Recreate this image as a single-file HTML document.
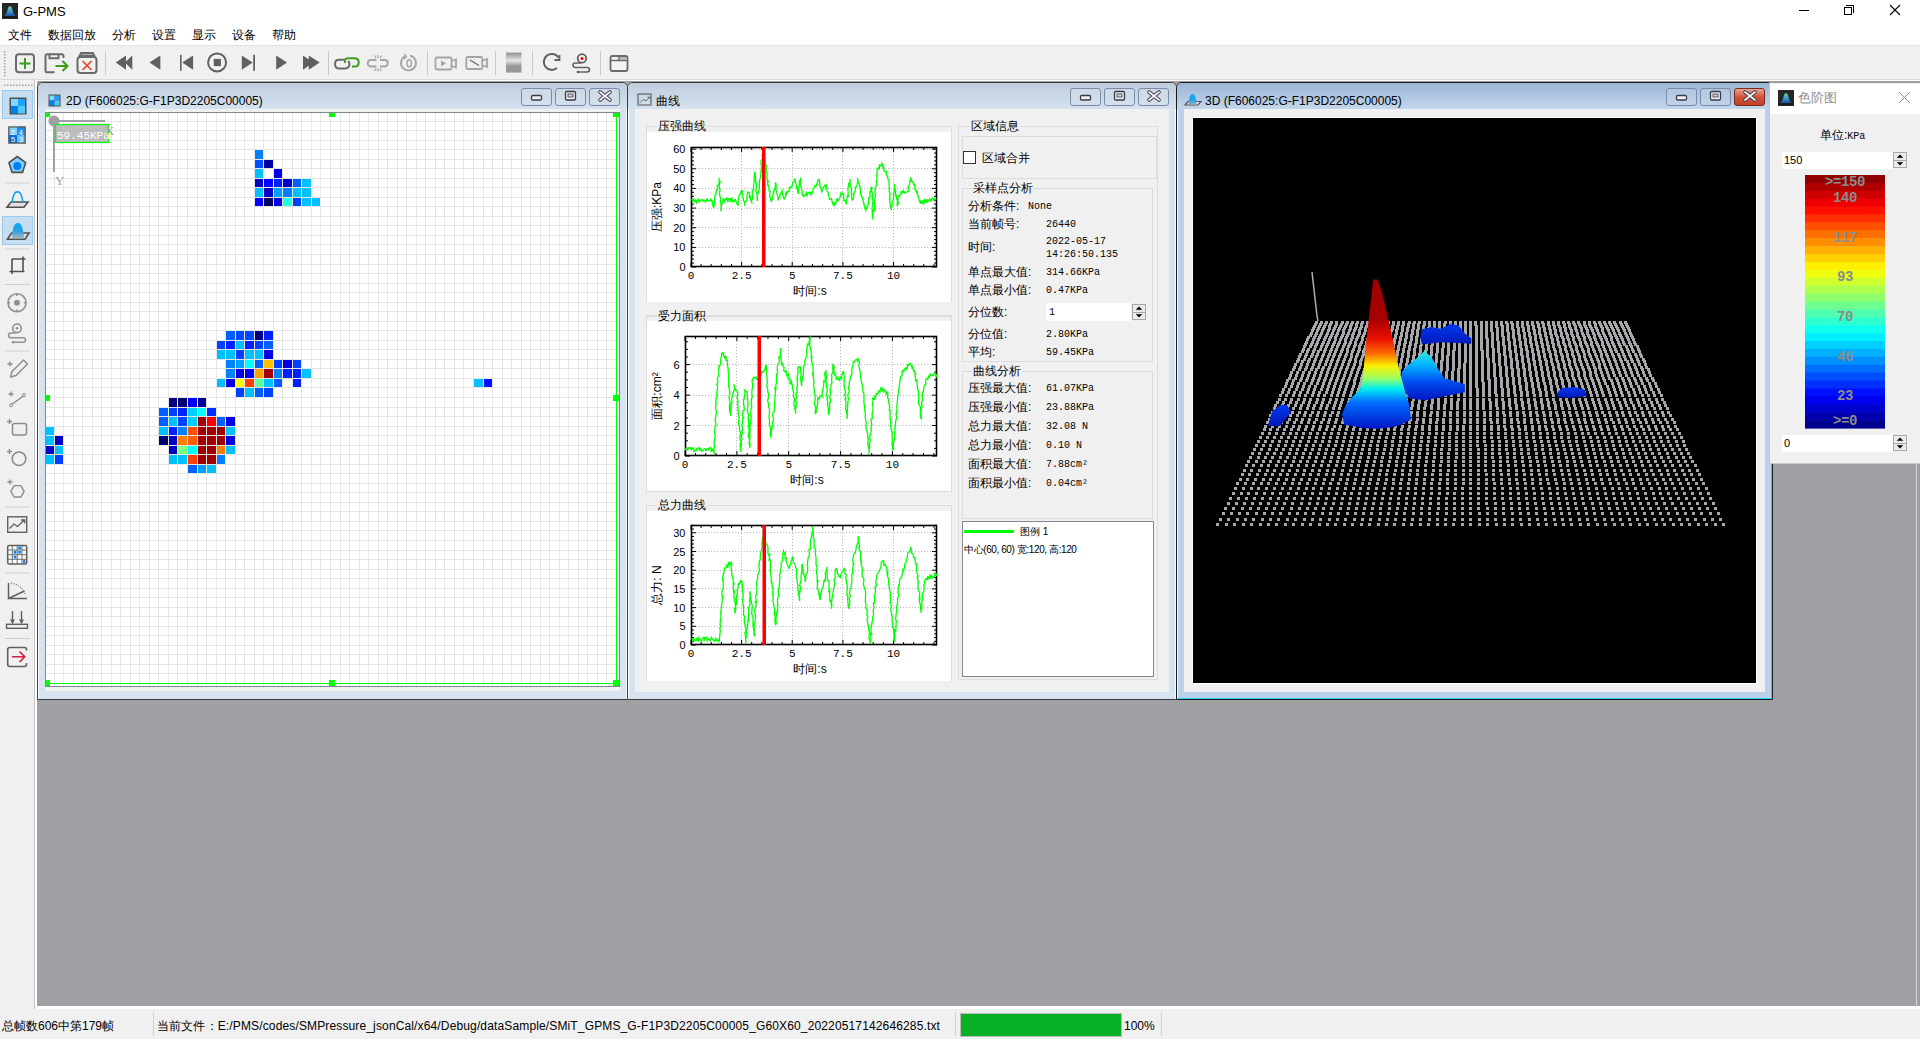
<!DOCTYPE html><html><head><meta charset="utf-8"><style>
*{margin:0;padding:0;box-sizing:border-box}
html,body{width:1920px;height:1039px;overflow:hidden;background:#f0f0f0;font-family:"Liberation Sans",sans-serif;font-size:12px;color:#000}
.a{position:absolute}
.t{position:absolute;white-space:nowrap;line-height:1}
.m{font-family:"Liberation Mono",monospace;font-size:10px}
.win{position:absolute;border:1px solid #3c3c3c;background:#d6e3f0;box-shadow:inset 1px 1px 0 rgba(255,255,255,.85),inset -1px 0 0 rgba(255,255,255,.85)}
.tb{position:absolute;left:0;right:0;top:0;height:26px;background:linear-gradient(#bfcddd,#d5e2ef)}
.win.act{background:#b9d1ea;border-color:#1a1a1a;box-shadow:inset 1px 1px 0 rgba(255,255,255,.85),inset -1px -1px 0 #28d4f0}
.win.act .tb{background:linear-gradient(#9bb5d5,#c3d7ec)}
.btn{position:absolute;top:5px;width:31px;height:18px;border:1px solid #7b8aa8;border-radius:3px;background:linear-gradient(rgba(255,255,255,.15),rgba(255,255,255,.05))}
.sep{position:absolute;background:#d0d0d0}
</style></head><body>
<div class="a" style="left:0;top:0;width:1920px;height:45px;background:#fff"></div>
<div class="a" style="left:2px;top:3px;width:16px;height:16px;background:#202020"></div>
<svg class="a" style="left:2px;top:3px" width="16" height="16"><defs><linearGradient id="ai" x1="0" y1="0" x2="0" y2="1"><stop offset="0" stop-color="#70d070"/><stop offset="0.45" stop-color="#40a8d8"/><stop offset="1" stop-color="#2050a0"/></linearGradient></defs><rect width="16" height="16" fill="#262626"/><path d="M8 3Q10 3 11 9Q12 12 14 13H2Q4 12 5 9Q6 3 8 3Z" fill="url(#ai)"/><rect x="1" y="13" width="14" height="2" fill="#1a1a1a"/></svg>
<div class="t" style="left:23px;top:5px;font-size:13px">G-PMS</div>
<div class="a" style="left:1799px;top:10px;width:10px;height:1px;background:#000"></div>
<div class="a" style="left:1844px;top:7px;width:8px;height:8px;border:1px solid #000"></div>
<div class="a" style="left:1846px;top:5px;width:8px;height:8px;border-top:1px solid #000;border-right:1px solid #000"></div>
<svg class="a" style="left:1889px;top:4px" width="12" height="12"><path d="M1 1L11 11M11 1L1 11" stroke="#000" stroke-width="1.1"/></svg>
<div class="t" style="left:8px;top:29px;font-size:12px">文件</div>
<div class="t" style="left:48px;top:29px;font-size:12px">数据回放</div>
<div class="t" style="left:112px;top:29px;font-size:12px">分析</div>
<div class="t" style="left:152px;top:29px;font-size:12px">设置</div>
<div class="t" style="left:192px;top:29px;font-size:12px">显示</div>
<div class="t" style="left:232px;top:29px;font-size:12px">设备</div>
<div class="t" style="left:272px;top:29px;font-size:12px">帮助</div>
<div class="a" style="left:0;top:45px;width:1920px;height:1px;background:#e3e3e3"></div>
<div class="a" style="left:0;top:46px;width:1920px;height:34px;background:#f0f0f0"></div>
<div class="a" style="left:0;top:79px;width:1920px;height:1px;background:#dadada"></div>
<div class="a" style="left:35px;top:80px;width:1885px;height:929px;background:#fff"></div>
<div class="a" style="left:37px;top:81px;width:1883px;height:925px;background:#a0a0a4"></div>
<div class="a" style="left:0;top:80px;width:35px;height:930px;background:#f0f0f0;border-right:1px solid #c4c4c4;border-bottom:1px solid #c8c8c8"></div>
<div class="a" style="left:0;top:1009px;width:1920px;height:30px;background:#f0f0f0"></div>
<div class="t" style="left:2px;top:1020px;font-size:12px">总帧数606中第179帧</div>
<div class="a" style="left:153px;top:1012px;width:1px;height:24px;background:#d0d0d0"></div>
<div class="t" style="left:157px;top:1020px;font-size:12px;letter-spacing:0.14px">当前文件：E:/PMS/codes/SMPressure_jsonCal/x64/Debug/dataSample/SMiT_GPMS_G-F1P3D2205C00005_G60X60_20220517142646285.txt</div>
<div class="a" style="left:955px;top:1012px;width:1px;height:24px;background:#d0d0d0"></div>
<div class="a" style="left:960px;top:1013px;width:162px;height:24px;background:#06b025;border:1px solid #bcbcbc"></div>
<div class="t" style="left:1124px;top:1020px;font-size:12px">100%</div>
<div class="a" style="left:1161px;top:1012px;width:1px;height:24px;background:#d0d0d0"></div>
<div class="win" style="left:37px;top:82px;width:591px;height:618px;border-radius:6px 6px 0 0">
<div class="tb" style="border-radius:5px 5px 0 0"></div>
<div class="t" style="left:28px;top:12px;font-size:12px">2D (F606025:G-F1P3D2205C00005)</div>
<svg class="a" style="left:10px;top:11px" width="14" height="14"><rect x="0.5" y="0.5" width="12" height="12" fill="#505050"/><rect x="1.5" y="1.5" width="5" height="5" fill="#80d8ff"/><rect x="6.5" y="1.5" width="5" height="5" fill="#20a0ff"/><rect x="1.5" y="6.5" width="5" height="5" fill="#0080f0"/><rect x="6.5" y="6.5" width="5" height="5" fill="#50c8ff"/></svg>
<div class="btn" style="left:483px;"></div>
<div class="btn" style="left:517px;"></div>
<div class="btn" style="left:551px;"></div>
<svg class="a" style="left:483px;top:5px" width="104" height="18"><rect x="10.5" y="7.5" width="10" height="4.5" rx="1.2" fill="#f0f0f0" stroke="#3a3a48" stroke-width="1.3"/><rect x="44.5" y="3.5" width="10" height="8.5" rx="1.2" fill="#f0f0f0" stroke="#3a3a48" stroke-width="1.3"/><rect x="47" y="6" width="5" height="3" fill="#c8d4e0" stroke="#3a3a48" stroke-width="0.8"/><path d="M79 4L89 12M89 4L79 12" stroke="#3a3a48" stroke-width="3.6" stroke-linecap="round"/><path d="M79 4L89 12M89 4L79 12" stroke="#f4f4f4" stroke-width="1.8" stroke-linecap="round"/></svg>
</div>
<div class="win" style="left:627px;top:82px;width:550px;height:618px;border-radius:6px 6px 0 0">
<div class="tb" style="border-radius:5px 5px 0 0"></div>
<div class="t" style="left:28px;top:12px;font-size:12px">曲线</div>
<svg class="a" style="left:9px;top:10px" width="16" height="14"><rect x="1" y="1" width="13" height="11" fill="none" stroke="#6a6a6a" stroke-width="1.3"/><path d="M2.5 10L6 6.5L9 8L12.5 4M10.5 4H12.8V6" fill="none" stroke="#6a6a6a" stroke-width="1"/><rect x="1" y="11" width="13" height="1.5" fill="#9a9a9a"/></svg>
<div class="btn" style="left:442px;"></div>
<div class="btn" style="left:476px;"></div>
<div class="btn" style="left:510px;"></div>
<svg class="a" style="left:442px;top:5px" width="104" height="18"><rect x="10.5" y="7.5" width="10" height="4.5" rx="1.2" fill="#f0f0f0" stroke="#3a3a48" stroke-width="1.3"/><rect x="44.5" y="3.5" width="10" height="8.5" rx="1.2" fill="#f0f0f0" stroke="#3a3a48" stroke-width="1.3"/><rect x="47" y="6" width="5" height="3" fill="#c8d4e0" stroke="#3a3a48" stroke-width="0.8"/><path d="M79 4L89 12M89 4L79 12" stroke="#3a3a48" stroke-width="3.6" stroke-linecap="round"/><path d="M79 4L89 12M89 4L79 12" stroke="#f4f4f4" stroke-width="1.8" stroke-linecap="round"/></svg>
</div>
<div class="win act" style="left:1176px;top:82px;width:597px;height:618px;border-radius:6px 6px 0 0">
<div class="tb" style="border-radius:5px 5px 0 0"></div>
<div class="t" style="left:28px;top:12px;font-size:12px">3D (F606025:G-F1P3D2205C00005)</div>
<svg class="a" style="left:7px;top:9px" width="18" height="16"><defs><linearGradient id="i3" x1="0" y1="0" x2="0" y2="1"><stop offset="0" stop-color="#00a8f0"/><stop offset="0.6" stop-color="#20a8e8"/><stop offset="1" stop-color="#80b0c8"/></linearGradient></defs><path d="M1 13L4 9.5H17L14 13Z" fill="#e8e8e8" stroke="#505050" stroke-width="1.2"/><path d="M4.5 12Q5 2 8.5 2Q12 2 12.5 12Z" fill="url(#i3)"/></svg>
<div class="btn" style="left:489px;"></div>
<div class="btn" style="left:523px;"></div>
<div class="btn" style="left:557px;background:linear-gradient(#e9a692,#d0543a 50%,#c24026);border-color:#7a2a22"></div>
<svg class="a" style="left:489px;top:5px" width="104" height="18"><rect x="10.5" y="7.5" width="10" height="4.5" rx="1.2" fill="#f0f0f0" stroke="#3a3a48" stroke-width="1.3"/><rect x="44.5" y="3.5" width="10" height="8.5" rx="1.2" fill="#f0f0f0" stroke="#3a3a48" stroke-width="1.3"/><rect x="47" y="6" width="5" height="3" fill="#c8d4e0" stroke="#3a3a48" stroke-width="0.8"/><path d="M79 4L89 12M89 4L79 12" stroke="#3a3a48" stroke-width="3.6" stroke-linecap="round"/><path d="M79 4L89 12M89 4L79 12" stroke="#f4f4f4" stroke-width="1.8" stroke-linecap="round"/></svg>
</div>
<div class="a" style="left:45px;top:109px;width:575px;height:582px;background:#f0f0f0"></div>
<div class="a" style="left:45px;top:112px;width:575px;height:575px;background:#fff;border:1px solid #828790"></div>
<svg class="a" style="left:0;top:0" width="1920" height="1039" shape-rendering="crispEdges"><defs><clipPath id="pc"><rect x="46" y="113" width="573" height="573"/></clipPath></defs><g clip-path="url(#pc)"><path d="M44.5 113V686M46 111.5H619M54.5 113V686M46 121.5H619M63.5 113V686M46 130.5H619M73.5 113V686M46 140.5H619M82.5 113V686M46 149.5H619M92.5 113V686M46 159.5H619M101.5 113V686M46 168.5H619M111.5 113V686M46 178.5H619M120.5 113V686M46 187.5H619M130.5 113V686M46 197.5H619M139.5 113V686M46 206.5H619M149.5 113V686M46 216.5H619M158.5 113V686M46 225.5H619M168.5 113V686M46 235.5H619M177.5 113V686M46 244.5H619M187.5 113V686M46 254.5H619M197.5 113V686M46 264.5H619M206.5 113V686M46 273.5H619M216.5 113V686M46 283.5H619M225.5 113V686M46 292.5H619M235.5 113V686M46 302.5H619M244.5 113V686M46 311.5H619M254.5 113V686M46 321.5H619M263.5 113V686M46 330.5H619M273.5 113V686M46 340.5H619M282.5 113V686M46 349.5H619M292.5 113V686M46 359.5H619M301.5 113V686M46 368.5H619M311.5 113V686M46 378.5H619M320.5 113V686M46 387.5H619M330.5 113V686M46 397.5H619M340.5 113V686M46 407.5H619M349.5 113V686M46 416.5H619M359.5 113V686M46 426.5H619M368.5 113V686M46 435.5H619M378.5 113V686M46 445.5H619M387.5 113V686M46 454.5H619M397.5 113V686M46 464.5H619M406.5 113V686M46 473.5H619M416.5 113V686M46 483.5H619M425.5 113V686M46 492.5H619M435.5 113V686M46 502.5H619M444.5 113V686M46 511.5H619M454.5 113V686M46 521.5H619M463.5 113V686M46 530.5H619M473.5 113V686M46 540.5H619M483.5 113V686M46 550.5H619M492.5 113V686M46 559.5H619M502.5 113V686M46 569.5H619M511.5 113V686M46 578.5H619M521.5 113V686M46 588.5H619M530.5 113V686M46 597.5H619M540.5 113V686M46 607.5H619M549.5 113V686M46 616.5H619M559.5 113V686M46 626.5H619M568.5 113V686M46 635.5H619M578.5 113V686M46 645.5H619M587.5 113V686M46 654.5H619M597.5 113V686M46 664.5H619M606.5 113V686M46 673.5H619M616.5 113V686M46 683.5H619" stroke="#e6e6e6" stroke-width="1"/><rect x="255" y="150" width="8" height="9" fill="#0080ff"/><rect x="255" y="160" width="8" height="8" fill="#0050ff"/><rect x="264" y="160" width="9" height="8" fill="#0000a0"/><rect x="255" y="169" width="8" height="9" fill="#00c0ff"/><rect x="274" y="169" width="8" height="9" fill="#0000e0"/><rect x="255" y="179" width="8" height="8" fill="#0000c0"/><rect x="264" y="179" width="9" height="8" fill="#0000ff"/><rect x="274" y="179" width="8" height="8" fill="#0020ff"/><rect x="283" y="179" width="9" height="8" fill="#0000c8"/><rect x="293" y="179" width="8" height="8" fill="#0060ff"/><rect x="302" y="179" width="9" height="8" fill="#00c0ff"/><rect x="255" y="188" width="8" height="9" fill="#00c0ff"/><rect x="264" y="188" width="9" height="9" fill="#0000c0"/><rect x="274" y="188" width="8" height="9" fill="#00a0ff"/><rect x="283" y="188" width="9" height="9" fill="#0080ff"/><rect x="293" y="188" width="8" height="9" fill="#00c0ff"/><rect x="302" y="188" width="9" height="9" fill="#00c0ff"/><rect x="255" y="198" width="8" height="8" fill="#0000ff"/><rect x="264" y="198" width="9" height="8" fill="#000060"/><rect x="274" y="198" width="8" height="8" fill="#0000e0"/><rect x="283" y="198" width="9" height="8" fill="#20ffe0"/><rect x="293" y="198" width="8" height="8" fill="#0040ff"/><rect x="302" y="198" width="9" height="8" fill="#00c0ff"/><rect x="312" y="198" width="8" height="8" fill="#00c0ff"/><rect x="226" y="331" width="9" height="9" fill="#0060ff"/><rect x="236" y="331" width="8" height="9" fill="#0048ff"/><rect x="245" y="331" width="9" height="9" fill="#0048ff"/><rect x="255" y="331" width="8" height="9" fill="#000080"/><rect x="264" y="331" width="9" height="9" fill="#0020ff"/><rect x="217" y="341" width="8" height="8" fill="#0040ff"/><rect x="226" y="341" width="9" height="8" fill="#0020ff"/><rect x="236" y="341" width="8" height="8" fill="#00c0ff"/><rect x="245" y="341" width="9" height="8" fill="#0020ff"/><rect x="255" y="341" width="8" height="8" fill="#0040ff"/><rect x="264" y="341" width="9" height="8" fill="#0060ff"/><rect x="217" y="350" width="8" height="9" fill="#00c0ff"/><rect x="226" y="350" width="9" height="9" fill="#00c0ff"/><rect x="236" y="350" width="8" height="9" fill="#0040ff"/><rect x="245" y="350" width="9" height="9" fill="#00c0ff"/><rect x="255" y="350" width="8" height="9" fill="#00c0ff"/><rect x="264" y="350" width="9" height="9" fill="#0000e0"/><rect x="226" y="360" width="9" height="8" fill="#0080ff"/><rect x="236" y="360" width="8" height="8" fill="#00a0ff"/><rect x="245" y="360" width="9" height="8" fill="#00ffff"/><rect x="255" y="360" width="8" height="8" fill="#0060ff"/><rect x="264" y="360" width="9" height="8" fill="#ffc000"/><rect x="274" y="360" width="8" height="8" fill="#0040ff"/><rect x="283" y="360" width="9" height="8" fill="#0000e0"/><rect x="293" y="360" width="8" height="8" fill="#0040ff"/><rect x="226" y="369" width="9" height="9" fill="#0080ff"/><rect x="236" y="369" width="8" height="9" fill="#0000e0"/><rect x="245" y="369" width="9" height="9" fill="#0000ff"/><rect x="255" y="369" width="8" height="9" fill="#ffa000"/><rect x="264" y="369" width="9" height="9" fill="#a00000"/><rect x="274" y="369" width="8" height="9" fill="#0080ff"/><rect x="283" y="369" width="9" height="9" fill="#0020ff"/><rect x="293" y="369" width="8" height="9" fill="#0020ff"/><rect x="302" y="369" width="9" height="9" fill="#00c0ff"/><rect x="217" y="379" width="8" height="8" fill="#00c0ff"/><rect x="226" y="379" width="9" height="8" fill="#0000e0"/><rect x="236" y="379" width="8" height="8" fill="#ffff00"/><rect x="245" y="379" width="9" height="8" fill="#ff4000"/><rect x="255" y="379" width="8" height="8" fill="#60ffa0"/><rect x="264" y="379" width="9" height="8" fill="#00c0ff"/><rect x="274" y="379" width="8" height="8" fill="#0060ff"/><rect x="293" y="379" width="8" height="8" fill="#0020ff"/><rect x="474" y="379" width="9" height="8" fill="#00c0ff"/><rect x="484" y="379" width="8" height="8" fill="#0010ff"/><rect x="236" y="388" width="8" height="9" fill="#0040ff"/><rect x="245" y="388" width="9" height="9" fill="#00c0ff"/><rect x="255" y="388" width="8" height="9" fill="#0060ff"/><rect x="264" y="388" width="9" height="9" fill="#0040ff"/><rect x="169" y="398" width="8" height="9" fill="#000080"/><rect x="178" y="398" width="9" height="9" fill="#000070"/><rect x="188" y="398" width="9" height="9" fill="#0000ff"/><rect x="198" y="398" width="8" height="9" fill="#000090"/><rect x="159" y="408" width="9" height="8" fill="#0060ff"/><rect x="169" y="408" width="8" height="8" fill="#0040ff"/><rect x="178" y="408" width="9" height="8" fill="#0020ff"/><rect x="188" y="408" width="9" height="8" fill="#00d0ff"/><rect x="198" y="408" width="8" height="8" fill="#00ffff"/><rect x="207" y="408" width="9" height="8" fill="#0030ff"/><rect x="159" y="417" width="9" height="9" fill="#0060ff"/><rect x="169" y="417" width="8" height="9" fill="#00c0ff"/><rect x="178" y="417" width="9" height="9" fill="#0040ff"/><rect x="188" y="417" width="9" height="9" fill="#00d0ff"/><rect x="198" y="417" width="8" height="9" fill="#a00000"/><rect x="207" y="417" width="9" height="9" fill="#ff0000"/><rect x="217" y="417" width="8" height="9" fill="#0060ff"/><rect x="226" y="417" width="9" height="9" fill="#0000e0"/><rect x="45" y="427" width="9" height="8" fill="#00c0ff"/><rect x="159" y="427" width="9" height="8" fill="#00c0ff"/><rect x="169" y="427" width="8" height="8" fill="#0020ff"/><rect x="178" y="427" width="9" height="8" fill="#0080ff"/><rect x="188" y="427" width="9" height="8" fill="#ff5000"/><rect x="198" y="427" width="8" height="8" fill="#a00000"/><rect x="207" y="427" width="9" height="8" fill="#a00000"/><rect x="217" y="427" width="8" height="8" fill="#a00000"/><rect x="226" y="427" width="9" height="8" fill="#00c0ff"/><rect x="45" y="436" width="9" height="9" fill="#00c0ff"/><rect x="55" y="436" width="8" height="9" fill="#0000c0"/><rect x="159" y="436" width="9" height="9" fill="#000070"/><rect x="169" y="436" width="8" height="9" fill="#0000c0"/><rect x="178" y="436" width="9" height="9" fill="#ff8000"/><rect x="188" y="436" width="9" height="9" fill="#ff6000"/><rect x="198" y="436" width="8" height="9" fill="#a00000"/><rect x="207" y="436" width="9" height="9" fill="#a00000"/><rect x="217" y="436" width="8" height="9" fill="#a00000"/><rect x="226" y="436" width="9" height="9" fill="#0000e0"/><rect x="45" y="446" width="9" height="8" fill="#0000c0"/><rect x="55" y="446" width="8" height="8" fill="#00c0ff"/><rect x="169" y="446" width="8" height="8" fill="#0000c0"/><rect x="178" y="446" width="9" height="8" fill="#80ff80"/><rect x="188" y="446" width="9" height="8" fill="#00ffff"/><rect x="198" y="446" width="8" height="8" fill="#a00000"/><rect x="207" y="446" width="9" height="8" fill="#a00000"/><rect x="217" y="446" width="8" height="8" fill="#ff8000"/><rect x="226" y="446" width="9" height="8" fill="#00c0ff"/><rect x="45" y="455" width="9" height="9" fill="#00c0ff"/><rect x="55" y="455" width="8" height="9" fill="#0040ff"/><rect x="169" y="455" width="8" height="9" fill="#00c0ff"/><rect x="178" y="455" width="9" height="9" fill="#00c0ff"/><rect x="188" y="455" width="9" height="9" fill="#ff4000"/><rect x="198" y="455" width="8" height="9" fill="#a00000"/><rect x="207" y="455" width="9" height="9" fill="#a00000"/><rect x="217" y="455" width="8" height="9" fill="#0080ff"/><rect x="188" y="465" width="9" height="8" fill="#0060ff"/><rect x="198" y="465" width="8" height="8" fill="#00a0ff"/><rect x="207" y="465" width="9" height="8" fill="#00c0ff"/></g><path d="M616.5 113V684M46 683.5H617" stroke="#00ff00" stroke-width="1" fill="none"/><rect x="46" y="113" width="4" height="4" fill="#00ff00"/><rect x="329" y="113" width="6" height="4" fill="#00ff00"/><rect x="613" y="113" width="6" height="4" fill="#00ff00"/><rect x="46" y="395" width="4" height="6" fill="#00ff00"/><rect x="613" y="395" width="6" height="6" fill="#00ff00"/><rect x="46" y="680" width="4" height="6" fill="#00ff00"/><rect x="329" y="680" width="6" height="6" fill="#00ff00"/><rect x="613" y="680" width="6" height="6" fill="#00ff00"/></svg>
<svg class="a" style="left:0;top:0" width="300" height="300"><line x1="54" y1="121" x2="105" y2="121" stroke="#a0a0a4" stroke-width="2"/><line x1="54" y1="121" x2="54" y2="172" stroke="#a0a0a4" stroke-width="2"/><circle cx="54" cy="121" r="5.5" fill="#a0a0a4"/><rect x="55.5" y="124.5" width="53" height="18" fill="#bcbcbc" stroke="#00ff00" stroke-width="1.2"/><text x="57" y="139" font-family="Liberation Mono" font-size="11" fill="#fff">59.45KPa</text><text x="105" y="135" font-family="Liberation Serif" font-size="13" fill="#a0a0a4">X</text><text x="55" y="185" font-family="Liberation Serif" font-size="13" fill="#a0a0a4">Y</text></svg>
<div class="a" style="left:635px;top:109px;width:534px;height:583px;background:#f0f0f0"></div>
<div class="a" style="left:646px;top:126px;width:306px;height:176px;border:1px solid #dcdcdc"></div>
<div class="t" style="left:657px;top:120px;font-size:12px;background:#f0f0f0;padding:0 1px;z-index:3">压强曲线</div>
<div class="a" style="left:646px;top:126px;width:306px;height:176px;border:1px solid #dcdcdc"></div>
<div class="a" style="left:647px;top:132px;width:304px;height:170px;background:#fff"></div>
<svg class="a" style="left:0;top:0" width="1920" height="1039"><path d="M741.5 149V267M792.5 149V267M842.5 149V267M893.5 149V267M693 247.5H937M693 227.5H937M693 208.5H937M693 188.5H937M693 168.5H937M693 149.5H937" stroke="#bcbcbc" stroke-width="1" stroke-dasharray="1.2 1.8" fill="none"/><path d="M691.0 267v-5M691.0 147v5M701.1 267v-3M701.1 147v3M711.2 267v-3M711.2 147v3M721.4 267v-3M721.4 147v3M731.5 267v-3M731.5 147v3M741.6 267v-5M741.6 147v5M751.7 267v-3M751.7 147v3M761.9 267v-3M761.9 147v3M772.0 267v-3M772.0 147v3M782.1 267v-3M782.1 147v3M792.2 267v-5M792.2 147v5M802.4 267v-3M802.4 147v3M812.5 267v-3M812.5 147v3M822.6 267v-3M822.6 147v3M832.7 267v-3M832.7 147v3M842.9 267v-5M842.9 147v5M853.0 267v-3M853.0 147v3M863.1 267v-3M863.1 147v3M873.2 267v-3M873.2 147v3M883.3 267v-3M883.3 147v3M893.5 267v-5M893.5 147v5M903.6 267v-3M903.6 147v3M913.7 267v-3M913.7 147v3M923.8 267v-3M923.8 147v3M934.0 267v-3M934.0 147v3M691 267.0h5M937 267.0h-5M691 263.1h3M937 263.1h-3M691 259.1h3M937 259.1h-3M691 255.2h3M937 255.2h-3M691 251.3h3M937 251.3h-3M691 247.4h5M937 247.4h-5M691 243.4h3M937 243.4h-3M691 239.5h3M937 239.5h-3M691 235.6h3M937 235.6h-3M691 231.6h3M937 231.6h-3M691 227.7h5M937 227.7h-5M691 223.8h3M937 223.8h-3M691 219.8h3M937 219.8h-3M691 215.9h3M937 215.9h-3M691 212.0h3M937 212.0h-3M691 208.1h5M937 208.1h-5M691 204.1h3M937 204.1h-3M691 200.2h3M937 200.2h-3M691 196.3h3M937 196.3h-3M691 192.3h3M937 192.3h-3M691 188.4h5M937 188.4h-5M691 184.5h3M937 184.5h-3M691 180.5h3M937 180.5h-3M691 176.6h3M937 176.6h-3M691 172.7h3M937 172.7h-3M691 168.8h5M937 168.8h-5M691 164.8h3M937 164.8h-3M691 160.9h3M937 160.9h-3M691 157.0h3M937 157.0h-3M691 153.0h3M937 153.0h-3M691 149.1h5M937 149.1h-5" stroke="#000" stroke-width="1" fill="none"/><rect x="691.5" y="147.5" width="245" height="119" fill="none" stroke="#000" stroke-width="1.6"/><text x="685.5" y="271.0" text-anchor="end" font-family="Liberation Sans" font-size="11">0</text><text x="685.5" y="251.4" text-anchor="end" font-family="Liberation Sans" font-size="11">10</text><text x="685.5" y="231.7" text-anchor="end" font-family="Liberation Sans" font-size="11">20</text><text x="685.5" y="212.1" text-anchor="end" font-family="Liberation Sans" font-size="11">30</text><text x="685.5" y="192.4" text-anchor="end" font-family="Liberation Sans" font-size="11">40</text><text x="685.5" y="172.8" text-anchor="end" font-family="Liberation Sans" font-size="11">50</text><text x="685.5" y="153.1" text-anchor="end" font-family="Liberation Sans" font-size="11">60</text><text x="691.0" y="279" text-anchor="middle" font-family="Liberation Mono" font-size="11">0</text><text x="741.6" y="279" text-anchor="middle" font-family="Liberation Mono" font-size="11">2.5</text><text x="792.2" y="279" text-anchor="middle" font-family="Liberation Mono" font-size="11">5</text><text x="842.9" y="279" text-anchor="middle" font-family="Liberation Mono" font-size="11">7.5</text><text x="893.5" y="279" text-anchor="middle" font-family="Liberation Mono" font-size="11">10</text><text x="810" y="295" text-anchor="middle" font-size="12">时间:s</text><text transform="translate(661,207) rotate(-90)" text-anchor="middle" font-size="12">压强:KPa</text><polyline fill="none" stroke="#00ff00" stroke-width="1.3" points="691.3,199.9 692.4,199.5 692.9,200.6 692.8,201.2 693.4,200.8 694.0,199.4 695.2,202.4 695.3,199.9 696.7,202.8 697.2,200.5 698.4,199.1 698.8,200.0 698.4,199.3 699.3,202.1 699.7,201.1 701.0,200.2 701.4,199.0 701.4,199.5 702.9,200.3 702.9,200.9 703.8,199.8 704.8,201.3 704.7,200.8 705.7,202.0 706.6,199.6 707.5,198.9 707.4,201.4 707.6,200.3 708.1,201.0 709.7,200.6 710.5,199.5 710.8,200.6 711.3,200.0 712.2,201.9 712.3,200.7 712.3,203.8 713.7,207.8 714.6,202.5 714.5,201.5 714.6,198.2 715.4,194.3 715.8,194.4 716.5,189.8 717.3,189.8 717.3,185.6 718.5,184.8 719.3,182.1 719.0,177.8 719.2,182.3 720.2,181.9 719.2,184.8 719.4,188.4 720.1,190.1 719.4,193.3 720.0,196.4 720.9,199.5 720.4,201.8 720.8,202.1 721.2,207.6 721.3,210.3 720.8,211.2 721.0,209.9 721.5,205.3 722.3,203.4 723.1,200.6 723.2,198.7 724.0,199.5 724.5,201.6 725.9,198.7 726.0,199.5 726.8,198.6 728.1,202.1 728.1,200.0 728.2,198.5 729.2,199.2 730.5,198.7 729.9,201.9 731.3,198.7 731.9,198.2 732.5,202.0 733.6,200.9 733.3,199.6 733.8,201.2 734.9,201.2 735.2,199.0 736.7,203.6 737.5,204.4 738.2,205.7 738.0,202.1 738.7,197.4 738.9,195.7 739.8,194.7 741.3,191.0 741.9,190.5 742.5,190.7 742.0,192.8 742.6,195.4 743.7,200.9 744.6,201.9 744.9,205.9 744.8,202.6 746.7,200.3 747.1,196.3 747.0,194.8 747.9,192.1 749.5,192.7 749.4,197.3 750.6,196.5 750.4,198.7 752.2,203.6 751.4,201.1 752.9,197.8 752.3,194.8 752.3,190.1 753.7,190.0 753.4,188.5 753.6,185.7 754.4,180.5 753.9,178.2 754.2,176.8 754.5,173.5 754.6,172.9 755.1,173.7 755.6,178.1 755.6,180.8 755.9,181.8 756.2,182.4 756.3,185.7 755.9,190.8 756.3,192.1 757.3,195.1 757.0,197.5 757.5,201.2 757.2,197.8 757.6,194.1 758.7,192.5 758.7,191.0 759.4,187.2 759.3,184.9 759.5,183.1 759.7,179.9 760.0,179.0 760.6,176.2 761.2,171.2 761.0,171.4 761.6,165.6 760.9,164.3 761.1,160.9 761.4,160.1 762.7,158.5 762.1,155.2 763.1,150.4 763.7,151.2 763.2,153.6 763.8,154.2 765.0,158.1 764.3,159.0 765.1,161.2 765.1,163.6 766.2,164.9 766.3,169.1 766.0,171.1 767.2,174.4 766.8,178.7 768.2,181.2 767.6,180.9 767.9,185.6 768.6,185.5 769.2,191.2 770.2,191.2 769.6,196.4 770.6,198.1 770.3,198.1 771.5,202.1 771.3,201.5 772.8,198.3 772.7,195.9 773.3,193.3 774.5,188.6 775.3,188.3 775.6,182.4 776.3,185.5 776.0,187.9 776.2,190.7 776.9,193.7 777.9,196.3 777.9,198.5 778.0,200.5 778.5,198.2 779.9,198.0 779.8,195.4 781.6,191.6 782.1,190.6 782.4,194.5 783.1,195.5 784.2,199.7 784.4,198.1 785.5,196.4 785.7,194.3 785.8,192.4 786.4,193.9 787.3,190.6 787.6,192.3 789.4,190.7 789.1,188.0 789.8,187.9 790.2,186.9 790.9,188.0 792.5,185.3 792.1,186.0 792.8,182.6 793.0,181.8 794.3,181.3 794.5,180.3 794.8,178.4 795.4,181.7 795.8,182.9 796.6,186.6 797.5,190.5 798.2,193.8 798.5,192.2 798.4,187.5 799.7,184.3 799.7,183.7 799.1,182.0 800.7,178.7 800.9,182.3 800.4,184.0 801.3,188.2 802.1,191.0 802.2,194.2 802.7,196.2 802.7,193.4 803.2,194.6 803.7,196.4 805.0,195.4 805.7,195.4 806.1,192.6 807.2,195.4 807.4,194.4 808.2,192.4 808.9,192.9 808.6,192.8 810.2,192.4 810.8,195.4 811.1,192.8 811.7,193.9 812.7,192.5 813.1,189.2 813.1,188.7 814.5,187.8 814.9,185.4 814.8,185.3 816.3,185.8 817.0,183.1 817.4,182.6 817.9,180.1 819.2,179.3 820.0,184.3 819.3,184.5 821.1,188.6 821.3,187.9 821.7,192.6 822.4,189.8 823.0,188.2 824.8,185.2 825.3,185.3 826.1,184.7 825.9,187.8 826.9,186.6 826.9,190.8 828.2,192.4 828.5,194.8 829.4,198.3 829.6,199.4 831.5,198.4 832.2,202.3 832.9,202.1 832.8,204.0 834.3,206.2 834.1,204.6 834.6,202.1 834.9,204.3 835.8,203.7 836.4,200.0 837.4,198.8 837.8,200.9 839.1,199.3 839.4,198.7 840.5,196.3 840.8,193.3 841.4,193.9 842.1,193.7 842.1,193.0 843.6,195.0 843.6,197.5 844.1,200.7 845.7,200.5 845.9,202.3 846.4,204.3 846.2,200.8 846.6,201.3 847.4,196.0 848.3,196.5 848.0,190.6 848.0,187.8 848.5,185.3 848.7,183.4 849.5,183.4 850.1,179.0 850.0,182.0 850.2,183.9 850.0,186.2 851.6,188.2 851.2,192.8 852.0,193.8 851.5,196.5 852.0,199.9 853.4,199.2 853.9,193.6 853.4,194.0 855.2,190.7 855.4,186.5 855.8,187.9 857.0,185.3 857.9,180.6 857.3,177.9 858.6,182.7 859.8,185.5 860.1,188.3 860.5,190.1 860.5,193.6 861.5,196.8 862.7,197.0 862.7,199.6 864.1,204.1 864.0,204.4 865.3,209.2 865.8,210.5 866.7,207.1 866.8,206.4 868.3,204.6 868.8,201.4 868.5,197.9 870.1,197.2 869.7,191.9 870.6,192.0 871.0,187.8 872.0,187.9 871.4,186.9 871.7,191.1 872.3,192.8 872.5,197.5 872.2,197.9 872.9,200.9 872.8,203.2 872.1,207.9 872.2,211.2 872.6,210.7 872.3,214.2 873.0,218.9 872.4,219.3 872.7,219.0 872.9,212.7 873.0,211.5 874.4,210.8 874.4,208.6 874.9,203.4 874.1,203.2 875.2,196.9 875.3,195.7 875.1,192.9 875.1,189.0 875.5,187.8 876.7,184.2 876.9,182.0 876.3,181.8 877.2,177.6 876.4,175.2 877.1,174.4 877.1,169.5 878.7,167.4 878.7,169.7 879.9,165.8 879.5,165.0 881.4,165.0 881.8,166.7 881.9,163.4 883.4,166.2 883.1,168.0 883.8,167.6 884.0,171.0 885.9,171.9 886.6,170.9 886.2,174.1 887.9,177.4 887.7,176.0 888.1,179.5 889.0,180.9 889.1,185.7 889.4,188.4 889.4,189.2 889.2,191.9 890.2,193.3 889.6,198.6 889.9,198.4 889.9,203.0 890.6,207.3 891.6,209.9 891.0,208.8 891.1,207.9 892.3,205.2 892.0,202.5 892.9,201.0 893.4,199.2 893.7,193.7 894.3,191.9 894.2,189.7 894.8,186.4 894.5,184.1 894.7,189.4 895.6,190.0 895.7,195.5 896.2,195.2 896.9,199.7 897.5,200.3 897.1,206.0 898.3,203.8 897.9,198.8 898.7,195.8 900.6,194.9 901.2,191.5 901.7,191.9 901.5,193.3 903.1,190.7 903.3,192.9 903.4,192.0 903.9,191.5 904.7,193.1 905.9,191.7 905.6,192.3 907.1,191.8 907.3,192.0 908.5,190.9 908.1,186.6 909.1,185.9 910.0,181.5 909.9,181.4 910.9,177.3 911.4,181.3 912.0,181.1 912.7,181.9 914.0,185.6 914.0,183.8 915.1,185.2 914.7,189.3 915.9,190.4 916.5,192.0 917.2,190.4 917.2,193.4 918.9,197.9 918.9,199.8 920.1,202.4 920.4,201.4 921.5,203.8 921.5,202.0 923.1,203.7 922.9,200.2 924.6,203.5 924.6,199.7 925.8,200.9 926.4,201.7 926.9,199.7 927.5,199.8 927.6,202.2 928.8,199.4 928.5,200.1 929.6,199.9 929.7,199.3 931.1,201.7 930.8,200.3 932.4,198.0 933.1,198.2 933.4,199.8 934.1,198.7 934.4,199.7 935.0,199.8 935.7,198.8 936.4,198.9"/><rect x="762.0" y="147" width="3.5" height="120" fill="#ff0000"/></svg>
<div class="a" style="left:646px;top:316px;width:306px;height:176px;border:1px solid #dcdcdc"></div>
<div class="t" style="left:657px;top:310px;font-size:12px;background:#f0f0f0;padding:0 1px;z-index:3">受力面积</div>
<div class="a" style="left:646px;top:315px;width:306px;height:176px;border:1px solid #dcdcdc"></div>
<div class="a" style="left:647px;top:321px;width:304px;height:170px;background:#fff"></div>
<svg class="a" style="left:0;top:0" width="1920" height="1039"><path d="M736.5 338V456M788.5 338V456M840.5 338V456M892.5 338V456M687 425.5H937M687 395.5H937M687 364.5H937" stroke="#bcbcbc" stroke-width="1" stroke-dasharray="1.2 1.8" fill="none"/><path d="M685.0 456v-5M685.0 336v5M695.4 456v-3M695.4 336v3M705.7 456v-3M705.7 336v3M716.1 456v-3M716.1 336v3M726.5 456v-3M726.5 336v3M736.9 456v-5M736.9 336v5M747.2 456v-3M747.2 336v3M757.6 456v-3M757.6 336v3M768.0 456v-3M768.0 336v3M778.3 456v-3M778.3 336v3M788.7 456v-5M788.7 336v5M799.1 456v-3M799.1 336v3M809.4 456v-3M809.4 336v3M819.8 456v-3M819.8 336v3M830.2 456v-3M830.2 336v3M840.6 456v-5M840.6 336v5M850.9 456v-3M850.9 336v3M861.3 456v-3M861.3 336v3M871.7 456v-3M871.7 336v3M882.0 456v-3M882.0 336v3M892.4 456v-5M892.4 336v5M902.8 456v-3M902.8 336v3M913.1 456v-3M913.1 336v3M923.5 456v-3M923.5 336v3M933.9 456v-3M933.9 336v3M685 456.0h5M937 456.0h-5M685 448.4h3M937 448.4h-3M685 440.8h3M937 440.8h-3M685 433.2h3M937 433.2h-3M685 425.5h5M937 425.5h-5M685 417.9h3M937 417.9h-3M685 410.3h3M937 410.3h-3M685 402.7h3M937 402.7h-3M685 395.1h5M937 395.1h-5M685 387.5h3M937 387.5h-3M685 379.9h3M937 379.9h-3M685 372.2h3M937 372.2h-3M685 364.6h5M937 364.6h-5M685 357.0h3M937 357.0h-3M685 349.4h3M937 349.4h-3M685 341.8h3M937 341.8h-3" stroke="#000" stroke-width="1" fill="none"/><rect x="685.5" y="336.5" width="251" height="119" fill="none" stroke="#000" stroke-width="1.6"/><text x="679.5" y="460.0" text-anchor="end" font-family="Liberation Sans" font-size="11">0</text><text x="679.5" y="429.5" text-anchor="end" font-family="Liberation Sans" font-size="11">2</text><text x="679.5" y="399.1" text-anchor="end" font-family="Liberation Sans" font-size="11">4</text><text x="679.5" y="368.6" text-anchor="end" font-family="Liberation Sans" font-size="11">6</text><text x="685.0" y="468" text-anchor="middle" font-family="Liberation Mono" font-size="11">0</text><text x="736.9" y="468" text-anchor="middle" font-family="Liberation Mono" font-size="11">2.5</text><text x="788.7" y="468" text-anchor="middle" font-family="Liberation Mono" font-size="11">5</text><text x="840.6" y="468" text-anchor="middle" font-family="Liberation Mono" font-size="11">7.5</text><text x="892.4" y="468" text-anchor="middle" font-family="Liberation Mono" font-size="11">10</text><text x="807" y="484" text-anchor="middle" font-size="12">时间:s</text><text transform="translate(661,396) rotate(-90)" text-anchor="middle" font-size="12">面积:cm²</text><polyline fill="none" stroke="#00ff00" stroke-width="1.3" points="685.0,449.8 686.3,448.3 687.3,450.5 687.4,448.1 688.1,447.8 688.2,449.1 688.7,449.1 689.9,447.5 690.7,447.7 691.5,450.5 691.7,447.6 692.3,448.9 693.6,447.9 694.0,451.3 694.5,450.6 694.3,451.3 695.4,451.2 696.6,448.0 697.0,451.1 696.6,448.8 698.1,448.0 698.9,448.5 699.4,447.9 699.6,451.0 699.8,448.4 700.8,448.6 700.8,448.1 701.5,451.1 702.9,450.9 702.8,450.5 703.3,449.5 704.6,448.8 705.6,449.6 705.8,450.9 705.7,451.3 707.0,448.9 707.9,448.4 708.8,449.7 708.5,450.4 709.2,448.1 710.2,447.6 710.9,448.4 711.3,451.3 711.9,450.7 712.1,448.6 712.4,449.9 713.8,451.6 714.3,454.1 713.9,448.9 714.7,445.5 713.9,444.2 714.2,441.7 714.5,440.0 715.1,435.9 715.2,434.4 714.7,433.7 714.9,428.0 714.8,427.4 716.0,425.4 715.5,420.7 715.1,419.7 716.0,415.9 716.2,413.7 716.7,412.3 715.9,410.4 715.7,406.4 716.3,402.6 715.9,402.2 716.0,398.7 717.4,394.5 716.5,393.8 717.0,391.4 717.6,386.9 717.0,384.9 716.7,384.6 717.9,381.4 717.2,379.4 718.6,375.4 719.0,372.8 718.6,368.9 719.0,366.1 719.5,366.5 720.4,364.4 720.8,359.5 721.0,357.7 721.7,355.6 721.4,353.5 723.0,352.6 723.6,352.6 723.3,354.3 724.7,357.9 725.3,356.2 726.2,357.0 726.0,360.2 727.2,360.1 727.5,364.0 727.6,366.1 728.2,368.9 728.1,371.1 728.6,372.2 728.4,376.2 728.5,380.0 728.7,379.1 728.7,385.3 729.1,384.7 728.8,386.8 729.8,391.8 729.8,394.8 729.0,396.8 729.5,400.2 730.2,403.1 729.3,405.6 730.5,408.5 729.5,408.1 729.6,410.0 730.7,415.7 730.7,413.0 731.1,408.2 730.8,404.7 732.1,402.4 731.8,400.6 731.8,397.3 732.6,396.4 733.1,392.1 734.3,390.2 734.5,387.9 733.8,384.4 735.0,388.0 735.5,389.8 736.4,390.0 737.5,391.6 738.0,394.0 737.0,396.7 738.2,402.4 737.3,403.0 738.2,406.7 737.9,408.1 738.2,412.0 738.3,415.0 738.4,414.6 739.2,418.3 738.5,421.4 738.6,424.6 739.6,427.1 739.6,427.9 739.5,430.6 740.3,432.0 740.4,434.3 739.6,437.8 740.7,441.3 740.2,445.4 740.1,446.2 740.7,449.9 741.1,452.1 740.7,448.3 740.6,447.9 741.5,445.0 741.0,441.2 742.0,439.3 741.3,436.3 742.5,432.9 741.7,430.7 742.6,430.4 742.0,425.1 742.3,423.3 742.8,420.1 742.7,417.7 743.8,417.4 742.7,415.8 742.9,411.0 744.3,410.2 744.1,406.2 743.6,404.5 743.6,400.3 744.2,397.1 744.4,397.6 744.9,394.0 745.0,391.3 744.5,389.4 745.6,391.4 747.0,391.5 747.2,394.2 747.1,394.7 747.7,399.9 747.9,401.7 748.1,404.2 747.9,405.9 747.6,409.2 747.4,410.9 748.5,414.7 748.4,415.4 748.2,418.8 748.6,421.2 748.8,425.8 748.2,427.3 749.2,428.8 748.9,433.7 748.4,434.6 748.7,438.1 749.9,439.6 748.9,442.4 749.6,445.5 749.7,447.8 750.2,444.8 749.7,443.9 749.6,440.3 749.9,438.0 749.7,436.3 750.1,430.1 750.1,428.9 749.8,426.4 750.5,424.9 750.5,420.6 750.4,420.0 751.5,416.6 750.6,415.1 751.0,410.2 750.7,409.8 751.8,406.7 751.4,403.9 751.2,402.9 751.5,399.0 752.2,397.2 751.8,392.5 752.1,389.3 752.6,387.6 752.7,384.7 752.1,382.1 752.3,379.3 752.4,380.3 753.5,377.4 754.3,377.2 755.0,378.0 756.0,377.1 757.0,379.2 756.3,379.2 758.1,379.2 757.7,379.6 759.0,376.4 758.7,379.1 760.3,375.3 760.1,373.8 760.9,375.3 761.7,371.7 763.1,373.0 762.7,372.2 763.9,370.6 764.6,369.8 765.4,368.4 765.2,366.6 766.2,365.6 766.3,368.7 766.6,368.7 766.3,370.8 766.8,373.0 766.9,375.9 767.1,379.8 767.3,383.8 766.7,386.3 767.5,387.7 767.9,391.3 767.7,392.2 768.6,393.3 768.3,398.1 767.6,400.5 768.7,404.4 768.4,407.1 768.8,407.6 769.5,408.4 769.4,413.3 769.0,416.8 769.2,417.7 769.6,421.5 769.3,422.7 769.7,425.7 770.4,427.2 770.6,430.1 770.3,432.1 770.4,437.5 771.3,433.9 771.6,429.2 772.3,427.5 772.9,425.6 772.3,422.7 773.7,419.4 772.7,415.7 772.8,412.6 774.3,411.7 774.2,409.7 774.7,406.4 774.5,403.8 774.8,401.0 775.0,396.8 775.2,395.2 775.5,391.1 774.9,388.2 775.9,389.1 775.9,384.2 776.5,383.2 776.5,378.4 776.5,376.4 776.9,373.7 777.7,373.0 777.2,368.9 777.6,364.4 779.0,363.5 779.5,360.3 778.6,357.4 779.8,356.9 780.7,352.4 780.3,348.2 781.0,351.2 780.7,353.0 780.9,358.2 781.4,361.9 781.8,364.1 782.2,363.3 783.4,366.8 784.1,367.5 783.7,370.7 785.3,371.9 785.9,369.8 786.3,373.2 786.7,375.0 787.0,376.0 788.4,374.3 788.1,379.0 789.9,378.8 789.9,382.3 790.3,383.6 791.4,381.3 791.8,384.2 792.6,385.5 792.4,388.5 793.0,390.5 793.6,392.2 793.5,396.3 794.5,398.9 794.3,399.5 793.8,404.8 795.0,406.9 794.7,408.6 795.8,412.1 795.6,412.6 795.5,412.4 795.5,409.0 796.0,407.3 796.4,402.4 795.4,399.7 796.2,398.5 796.9,397.2 795.9,394.4 797.1,392.0 796.9,387.1 797.5,386.7 797.4,384.6 797.0,378.8 797.5,379.1 797.1,376.4 798.3,371.8 798.0,371.0 797.9,366.6 798.3,368.1 799.8,366.2 799.5,366.9 800.7,367.1 800.6,372.3 801.3,373.3 800.9,376.1 800.7,377.0 800.9,381.6 801.4,383.5 801.6,385.9 801.6,381.2 803.1,379.7 802.2,378.0 803.5,373.3 803.5,371.3 803.7,367.2 803.4,368.3 804.8,363.5 804.9,360.1 805.8,358.2 806.5,357.0 806.9,355.2 806.6,349.0 807.1,347.0 807.4,344.0 808.6,344.7 809.0,342.5 810.2,336.4 810.0,340.4 809.6,345.3 810.1,346.3 810.9,350.6 811.2,350.9 811.1,352.7 812.1,358.6 811.3,357.5 811.7,361.4 812.8,366.2 813.0,365.5 813.2,370.8 813.2,374.5 812.6,373.8 813.7,379.6 813.8,379.7 813.9,384.2 813.4,385.1 813.8,386.9 814.4,389.8 814.2,392.3 815.0,394.4 815.3,397.8 814.5,403.4 815.0,406.1 816.1,408.5 815.3,409.4 815.4,414.0 816.9,410.3 816.8,406.6 817.7,404.6 817.8,400.7 817.7,397.8 819.0,399.2 818.8,399.8 819.6,397.4 820.0,396.2 821.6,395.9 821.3,395.9 822.1,397.0 822.1,394.7 822.4,391.7 823.6,386.4 823.7,384.1 823.8,381.2 824.3,381.8 825.5,378.9 824.6,373.8 826.1,370.3 826.0,373.8 826.6,375.2 826.5,379.1 825.8,380.3 826.9,384.9 826.2,387.1 827.4,388.8 827.1,391.0 826.7,396.1 827.7,396.4 827.0,398.5 827.9,402.7 827.6,404.1 828.3,408.6 828.7,410.7 828.1,411.2 829.0,415.1 829.2,411.1 829.6,409.6 829.8,409.1 829.6,403.0 830.4,402.3 830.5,398.8 829.8,398.4 830.3,393.2 830.5,392.3 830.2,389.3 831.1,386.7 830.8,384.9 832.0,382.9 831.6,379.6 831.9,377.2 831.6,375.0 833.1,370.9 832.7,368.4 833.0,363.8 834.2,367.1 833.8,369.2 834.5,374.6 834.8,374.2 836.4,377.2 836.0,379.1 837.4,379.1 838.2,377.7 839.0,380.5 838.5,378.4 839.7,380.2 840.0,379.0 840.8,377.1 841.7,378.1 841.8,375.1 843.2,371.5 844.0,372.7 843.5,373.2 844.3,376.3 843.9,380.5 844.6,380.7 844.0,383.3 844.5,388.4 845.2,390.8 845.4,393.1 844.5,394.3 845.9,398.6 845.1,399.1 845.8,401.5 845.9,402.9 845.9,407.2 845.5,408.4 847.0,413.5 847.1,415.5 847.1,419.1 847.4,413.1 847.3,411.4 847.5,408.9 847.5,408.9 847.8,403.6 847.9,401.7 848.7,398.5 848.0,397.4 847.9,394.6 849.3,391.6 848.5,388.8 849.3,385.0 849.1,382.4 849.8,381.0 850.2,377.8 850.4,376.5 851.8,374.2 851.9,371.8 851.8,369.5 852.6,366.3 853.2,363.4 853.4,361.9 854.0,362.3 854.9,361.9 855.0,360.3 856.9,359.2 857.1,359.6 857.4,360.9 858.1,359.4 858.2,359.1 859.6,363.1 858.8,365.5 859.7,369.4 859.6,370.0 861.1,374.6 860.3,375.5 861.0,379.4 861.7,382.7 862.3,383.9 862.6,387.4 862.9,388.9 863.2,392.4 863.7,392.6 863.9,394.6 864.0,399.5 863.9,403.5 864.2,403.9 864.8,408.3 864.8,408.8 864.8,411.7 865.4,413.6 865.2,417.2 865.5,418.8 866.3,423.4 866.1,424.4 866.0,426.3 866.2,430.0 867.0,430.6 867.7,434.0 867.9,438.6 868.3,438.6 867.8,444.0 867.5,443.1 868.5,447.4 869.3,451.1 869.0,454.5 869.2,450.1 869.6,447.1 869.3,445.4 869.5,444.2 870.2,440.0 869.6,436.9 870.2,435.1 870.7,433.9 871.4,429.8 870.9,427.8 871.9,424.2 871.4,423.5 871.1,419.0 872.4,418.5 872.0,413.2 872.7,412.9 872.8,411.6 873.1,406.8 872.3,403.8 873.0,402.1 872.7,398.3 874.0,399.1 874.2,399.8 875.2,395.1 875.5,397.2 876.0,395.9 876.2,393.5 878.0,393.7 878.4,391.3 878.7,391.8 879.0,391.3 880.0,391.9 880.7,388.6 880.7,388.0 882.2,388.1 881.9,388.7 883.1,391.7 883.8,392.0 883.7,389.2 885.3,390.7 885.8,391.2 885.7,391.2 886.2,394.1 887.5,392.3 887.9,392.8 887.6,397.3 888.6,400.1 888.6,401.3 888.6,401.5 889.8,407.3 889.1,410.0 890.1,410.2 890.0,415.3 890.1,417.8 890.0,418.1 890.8,420.0 890.5,425.1 891.0,427.3 890.9,427.4 891.3,430.0 892.4,432.9 892.0,434.7 892.2,438.4 892.2,439.6 892.1,445.2 892.6,445.4 892.6,448.1 892.9,449.6 893.7,448.3 893.2,447.1 893.4,442.8 894.6,439.6 894.3,439.9 895.0,434.5 894.6,434.2 894.8,432.6 894.8,429.9 895.4,424.4 895.6,421.5 896.1,419.4 896.6,418.1 896.1,414.1 896.6,411.4 897.2,408.4 896.9,407.5 896.8,405.9 897.2,402.8 897.6,398.8 897.8,395.4 897.9,396.0 898.4,392.7 898.5,389.8 899.3,387.1 899.6,382.8 900.0,381.0 900.1,380.4 900.7,376.7 902.0,375.6 902.3,373.5 901.9,370.6 902.3,371.7 903.8,369.9 904.1,370.6 905.1,368.4 905.9,368.3 906.2,367.1 906.1,369.4 907.6,368.1 907.2,364.9 908.0,365.0 908.8,365.2 909.0,364.4 910.4,363.3 911.4,366.1 911.9,366.0 912.1,368.9 912.7,367.4 914.0,371.7 913.9,369.9 915.4,373.4 914.9,373.1 915.3,377.9 915.8,380.9 916.9,380.1 917.1,383.9 917.5,388.2 917.2,387.8 918.4,391.6 918.7,395.3 918.7,398.4 918.9,399.4 918.4,403.1 919.2,405.1 920.2,406.3 920.3,408.6 920.5,414.4 920.2,416.1 921.5,419.2 921.1,415.1 920.6,413.1 921.3,409.9 921.4,407.2 922.1,406.8 921.6,402.6 922.2,400.9 923.0,398.0 922.3,397.6 922.3,393.9 922.7,392.4 923.7,390.0 923.8,387.5 925.0,384.6 925.9,384.0 925.6,379.7 926.6,378.7 926.9,378.3 927.7,379.3 928.7,376.3 929.2,377.1 929.9,375.2 930.2,373.9 932.1,376.2 931.5,375.9 933.4,375.2 932.9,374.8 934.0,373.4 934.8,372.6 936.0,375.0 936.3,376.0 936.7,374.2"/><rect x="757.5" y="336" width="3.5" height="120" fill="#ff0000"/></svg>
<div class="a" style="left:646px;top:505px;width:306px;height:176px;border:1px solid #dcdcdc"></div>
<div class="t" style="left:657px;top:499px;font-size:12px;background:#f0f0f0;padding:0 1px;z-index:3">总力曲线</div>
<div class="a" style="left:646px;top:505px;width:306px;height:176px;border:1px solid #dcdcdc"></div>
<div class="a" style="left:647px;top:511px;width:304px;height:170px;background:#fff"></div>
<svg class="a" style="left:0;top:0" width="1920" height="1039"><path d="M741.5 527V645M792.5 527V645M842.5 527V645M893.5 527V645M693 626.5H937M693 607.5H937M693 588.5H937M693 570.5H937M693 551.5H937M693 532.5H937" stroke="#bcbcbc" stroke-width="1" stroke-dasharray="1.2 1.8" fill="none"/><path d="M691.0 645v-5M691.0 525v5M701.1 645v-3M701.1 525v3M711.2 645v-3M711.2 525v3M721.4 645v-3M721.4 525v3M731.5 645v-3M731.5 525v3M741.6 645v-5M741.6 525v5M751.7 645v-3M751.7 525v3M761.9 645v-3M761.9 525v3M772.0 645v-3M772.0 525v3M782.1 645v-3M782.1 525v3M792.2 645v-5M792.2 525v5M802.4 645v-3M802.4 525v3M812.5 645v-3M812.5 525v3M822.6 645v-3M822.6 525v3M832.7 645v-3M832.7 525v3M842.9 645v-5M842.9 525v5M853.0 645v-3M853.0 525v3M863.1 645v-3M863.1 525v3M873.2 645v-3M873.2 525v3M883.3 645v-3M883.3 525v3M893.5 645v-5M893.5 525v5M903.6 645v-3M903.6 525v3M913.7 645v-3M913.7 525v3M923.8 645v-3M923.8 525v3M934.0 645v-3M934.0 525v3M691 645.0h5M937 645.0h-5M691 641.3h3M937 641.3h-3M691 637.5h3M937 637.5h-3M691 633.8h3M937 633.8h-3M691 630.0h3M937 630.0h-3M691 626.3h5M937 626.3h-5M691 622.6h3M937 622.6h-3M691 618.8h3M937 618.8h-3M691 615.1h3M937 615.1h-3M691 611.3h3M937 611.3h-3M691 607.6h5M937 607.6h-5M691 603.9h3M937 603.9h-3M691 600.1h3M937 600.1h-3M691 596.4h3M937 596.4h-3M691 592.6h3M937 592.6h-3M691 588.9h5M937 588.9h-5M691 585.1h3M937 585.1h-3M691 581.4h3M937 581.4h-3M691 577.7h3M937 577.7h-3M691 573.9h3M937 573.9h-3M691 570.2h5M937 570.2h-5M691 566.4h3M937 566.4h-3M691 562.7h3M937 562.7h-3M691 559.0h3M937 559.0h-3M691 555.2h3M937 555.2h-3M691 551.5h5M937 551.5h-5M691 547.7h3M937 547.7h-3M691 544.0h3M937 544.0h-3M691 540.3h3M937 540.3h-3M691 536.5h3M937 536.5h-3M691 532.8h5M937 532.8h-5M691 529.0h3M937 529.0h-3M691 525.3h3M937 525.3h-3" stroke="#000" stroke-width="1" fill="none"/><rect x="691.5" y="525.5" width="245" height="119" fill="none" stroke="#000" stroke-width="1.6"/><text x="685.5" y="649.0" text-anchor="end" font-family="Liberation Sans" font-size="11">0</text><text x="685.5" y="630.3" text-anchor="end" font-family="Liberation Sans" font-size="11">5</text><text x="685.5" y="611.6" text-anchor="end" font-family="Liberation Sans" font-size="11">10</text><text x="685.5" y="592.9" text-anchor="end" font-family="Liberation Sans" font-size="11">15</text><text x="685.5" y="574.2" text-anchor="end" font-family="Liberation Sans" font-size="11">20</text><text x="685.5" y="555.5" text-anchor="end" font-family="Liberation Sans" font-size="11">25</text><text x="685.5" y="536.8" text-anchor="end" font-family="Liberation Sans" font-size="11">30</text><text x="691.0" y="657" text-anchor="middle" font-family="Liberation Mono" font-size="11">0</text><text x="741.6" y="657" text-anchor="middle" font-family="Liberation Mono" font-size="11">2.5</text><text x="792.2" y="657" text-anchor="middle" font-family="Liberation Mono" font-size="11">5</text><text x="842.9" y="657" text-anchor="middle" font-family="Liberation Mono" font-size="11">7.5</text><text x="893.5" y="657" text-anchor="middle" font-family="Liberation Mono" font-size="11">10</text><text x="810" y="673" text-anchor="middle" font-size="12">时间:s</text><text transform="translate(661,585) rotate(-90)" text-anchor="middle" font-size="12">总力: N</text><polyline fill="none" stroke="#00ff00" stroke-width="1.3" points="692.2,638.4 692.3,637.9 692.6,640.5 694.3,638.5 694.0,639.9 695.6,641.1 695.2,640.5 696.8,640.3 696.7,638.1 698.0,638.6 698.0,639.6 698.6,640.7 699.0,637.5 700.1,639.9 701.1,640.2 701.8,641.1 701.8,639.4 702.0,638.6 703.2,637.7 703.9,638.0 704.2,641.2 704.3,637.5 705.4,638.1 706.5,637.4 707.2,640.8 707.8,639.1 707.7,640.0 708.6,639.0 709.0,639.1 710.1,640.7 711.0,638.0 710.8,639.1 711.7,638.8 711.8,637.7 712.6,639.2 714.2,641.0 714.6,641.3 715.4,639.8 715.8,637.6 716.2,640.1 716.3,640.3 717.8,640.2 718.0,639.8 718.1,642.4 718.3,639.9 719.8,641.3 719.1,639.6 719.7,636.8 719.9,634.0 720.3,631.0 719.8,627.6 721.0,626.6 720.1,625.3 720.4,619.7 720.9,617.8 721.0,616.5 720.8,614.0 720.8,611.3 721.6,607.0 721.5,604.5 721.7,605.1 722.0,602.0 722.4,597.1 722.9,597.0 721.8,594.9 722.3,589.8 723.3,588.8 723.2,584.6 723.3,581.7 722.7,580.5 722.6,578.8 723.0,575.2 723.8,573.1 724.2,571.4 724.3,568.6 725.0,569.3 724.6,568.3 725.4,567.9 726.5,567.6 726.4,565.2 727.9,567.0 728.4,562.9 728.9,562.6 729.4,564.8 729.5,564.8 730.9,561.6 730.8,561.8 731.9,565.0 731.1,565.4 731.4,571.1 731.7,572.7 732.0,575.9 732.4,576.3 733.3,580.5 733.3,584.2 733.9,583.7 733.2,586.8 733.7,592.4 734.3,591.6 733.7,597.4 734.6,598.3 734.5,600.0 735.3,603.5 735.5,607.0 734.6,608.5 735.1,613.4 735.9,607.4 735.6,606.1 736.3,604.3 736.5,600.8 736.2,599.1 737.0,594.3 737.4,595.6 737.1,589.6 738.3,587.5 738.0,585.8 738.3,583.5 739.3,584.4 740.6,580.1 740.6,582.4 741.7,581.8 742.0,580.6 741.8,581.7 742.6,586.7 743.0,588.4 742.3,591.3 743.0,592.9 743.1,594.8 743.1,597.6 742.6,599.9 743.2,605.0 743.6,605.1 743.4,607.1 743.7,609.3 743.4,614.8 744.2,615.7 744.6,617.7 744.2,619.3 744.5,622.8 745.3,626.3 745.8,628.0 745.9,631.6 744.9,632.5 745.8,638.3 745.7,640.0 746.0,643.0 745.7,638.8 747.1,635.3 746.4,631.7 746.5,630.1 747.5,627.3 747.3,624.6 747.8,624.6 748.1,619.3 748.4,619.8 748.4,613.6 748.9,614.2 748.5,608.6 748.5,607.6 749.7,605.4 750.0,601.0 749.4,600.6 750.1,596.6 750.3,593.7 749.7,591.4 749.9,594.8 750.5,596.9 751.1,598.6 751.1,600.2 752.0,605.0 752.3,605.6 751.9,610.9 751.8,611.0 751.7,613.8 752.8,616.2 753.1,620.2 752.9,623.5 753.1,626.3 753.4,627.7 753.8,630.0 754.0,634.6 754.3,635.4 754.4,635.5 754.1,630.2 754.4,630.3 754.0,624.0 754.6,624.0 755.2,620.2 755.6,617.1 755.4,614.0 754.5,611.6 754.7,610.5 755.6,606.7 756.3,604.9 755.3,601.6 756.3,602.0 755.6,595.8 756.6,594.1 757.0,592.6 756.7,589.4 757.1,587.3 756.7,586.5 756.7,583.2 757.0,580.3 757.8,578.6 757.6,574.8 758.5,573.7 759.5,569.9 758.8,565.8 759.2,564.0 759.5,560.5 760.6,559.7 760.2,558.5 760.4,554.2 760.7,552.8 762.0,547.8 762.2,547.5 761.8,542.9 762.4,542.6 762.3,539.2 763.2,535.7 763.5,534.8 763.3,532.2 763.9,529.3 765.0,529.4 765.5,535.3 765.1,534.0 765.3,540.3 765.7,542.6 766.3,544.5 766.7,544.8 768.0,547.1 767.9,553.0 768.9,555.4 769.7,554.6 769.1,560.2 770.2,559.7 770.4,563.1 770.5,565.1 770.2,571.1 770.8,573.2 770.7,574.1 771.0,576.4 771.2,579.9 771.4,582.6 772.1,582.6 772.1,586.6 773.1,588.6 772.4,593.5 773.5,595.1 772.9,595.4 773.1,597.4 773.0,601.7 773.7,604.4 773.8,604.7 774.5,609.8 774.5,611.8 774.9,616.1 775.4,617.5 774.9,618.4 775.2,623.5 775.4,623.7 775.6,625.2 776.6,622.1 776.3,623.2 776.0,619.3 776.4,615.2 776.4,612.1 777.5,612.2 777.8,606.7 777.7,605.2 777.8,603.5 777.6,602.6 777.4,599.1 778.8,595.5 778.6,594.9 778.3,590.8 779.2,587.2 779.4,584.7 779.4,583.0 779.8,579.2 779.9,577.5 779.6,575.2 780.0,573.7 780.7,570.2 781.2,566.5 781.2,562.5 782.6,561.3 782.4,558.6 783.2,554.8 782.7,554.4 783.5,550.9 784.6,554.2 785.3,553.1 785.2,558.5 786.4,557.9 786.1,560.6 786.7,563.3 788.2,566.2 788.4,566.7 788.9,568.9 789.9,565.2 790.2,565.0 791.2,560.9 791.7,560.3 792.1,558.3 792.5,557.2 793.1,558.0 793.5,562.3 794.0,562.9 795.5,565.4 795.6,567.4 796.6,569.4 796.6,575.1 796.2,576.0 797.3,579.5 797.0,579.8 797.4,583.7 798.0,586.1 797.8,590.2 798.7,591.6 798.3,595.2 799.4,596.3 799.7,601.0 799.1,598.3 799.2,593.3 800.1,592.0 800.0,589.9 800.7,588.3 799.7,585.1 800.6,582.0 801.3,579.2 801.0,578.6 801.2,574.4 801.5,573.2 802.0,570.3 801.8,564.9 802.5,564.4 803.1,568.1 802.7,568.7 803.2,573.9 803.8,573.8 805.2,578.5 804.8,581.8 806.0,578.5 805.5,576.7 806.3,573.7 807.5,572.1 807.7,566.8 807.3,565.7 807.2,565.0 807.9,559.6 808.3,557.0 809.4,555.6 809.3,552.5 809.0,549.4 810.5,548.9 810.8,544.1 810.3,540.7 811.1,539.4 811.3,537.3 811.9,534.3 812.5,531.0 813.0,529.9 812.2,526.3 813.1,529.2 813.3,531.4 813.1,535.8 813.4,538.0 814.3,540.0 814.0,543.9 814.3,546.2 813.9,547.0 815.0,548.0 815.5,550.6 815.3,553.5 816.0,557.6 816.1,559.8 816.1,563.1 815.8,563.7 816.8,566.0 817.1,568.8 816.2,570.8 817.4,576.8 817.1,578.1 817.1,581.6 817.9,581.1 817.2,585.8 817.4,588.9 818.0,589.0 818.6,591.9 818.8,593.7 819.5,596.9 819.6,598.8 820.2,600.0 820.3,594.1 820.9,594.4 821.3,591.9 821.8,589.4 823.2,586.6 823.6,582.7 824.4,580.1 825.0,581.0 825.6,576.4 825.2,573.1 826.4,571.0 827.2,566.8 826.9,572.5 827.4,573.8 827.0,574.8 827.5,580.4 828.7,580.4 829.1,582.2 829.0,588.6 828.9,591.1 829.7,590.1 829.6,594.3 829.8,598.1 830.0,600.9 830.5,600.6 831.2,603.4 831.5,608.7 831.9,604.8 831.4,602.4 831.8,600.3 832.2,597.4 832.8,594.0 833.5,590.6 833.2,591.1 833.7,588.0 834.8,584.0 834.1,579.8 835.4,577.3 835.2,576.4 834.9,573.5 835.3,571.1 836.1,567.9 836.3,569.2 836.9,569.3 837.6,573.5 838.5,574.8 838.4,576.2 839.7,576.8 840.4,577.6 840.6,576.7 841.1,573.5 841.5,572.8 842.8,571.2 843.9,569.1 844.1,568.5 844.7,569.5 845.2,569.3 844.8,574.0 846.1,574.4 845.9,579.6 846.4,580.8 846.7,583.9 847.1,584.7 847.5,588.9 847.0,590.3 847.0,595.5 847.9,595.7 847.7,598.3 847.8,601.2 848.3,606.9 849.5,608.8 849.0,605.1 849.7,604.2 849.8,600.6 849.3,598.0 850.4,596.2 849.6,593.4 850.2,588.7 851.2,588.2 851.2,583.5 851.5,584.2 851.8,581.0 852.0,578.7 851.8,574.7 852.4,573.6 852.7,569.1 853.0,567.6 853.2,563.4 853.5,563.6 852.7,561.3 853.3,555.9 854.3,553.3 855.0,553.2 856.0,549.6 856.2,547.1 857.4,544.0 858.3,541.8 858.2,536.0 858.9,541.5 858.7,543.0 859.7,546.3 858.8,547.6 859.2,548.6 860.6,552.3 860.6,555.0 860.5,556.5 860.8,561.5 861.5,561.8 861.0,564.3 862.2,567.4 862.4,571.4 862.0,573.4 862.2,576.5 862.7,576.8 864.0,579.6 863.3,584.2 864.1,586.7 864.1,587.7 865.2,590.2 865.6,591.4 865.6,593.8 865.5,595.7 865.3,601.9 866.0,604.1 865.9,604.9 866.0,608.3 867.3,610.8 866.9,615.1 867.9,616.7 867.0,619.2 867.8,623.2 868.0,624.6 868.6,626.2 868.7,630.0 869.5,631.9 869.0,636.5 868.9,638.6 870.0,640.1 869.9,643.5 870.8,640.9 870.9,635.6 870.5,633.5 871.7,633.9 870.8,630.2 871.6,625.5 871.6,625.7 872.2,621.3 872.7,618.8 872.6,616.8 873.5,615.2 873.5,612.7 873.1,611.3 873.9,607.7 873.5,603.1 874.2,603.2 874.7,598.7 874.1,596.8 875.4,592.9 875.4,590.4 875.1,587.4 875.3,586.1 876.5,585.9 875.7,580.8 877.0,577.8 876.7,576.8 877.1,574.2 878.1,572.8 879.5,570.4 879.1,571.1 880.1,568.9 881.0,566.8 881.2,562.3 882.4,561.7 882.8,560.6 883.7,560.7 883.8,565.0 884.7,564.2 885.5,565.8 886.4,566.7 887.1,570.5 887.1,573.7 887.7,572.7 887.6,576.4 888.8,579.4 888.6,582.5 888.4,583.0 889.4,588.1 889.6,589.5 890.0,590.8 890.5,594.7 889.9,595.9 890.8,598.2 890.2,602.8 890.9,603.9 891.3,607.9 890.8,608.2 890.9,611.0 891.8,615.3 892.2,616.7 892.1,619.2 892.2,622.8 893.1,625.3 892.5,627.1 893.5,628.9 894.0,633.0 894.0,635.2 894.1,638.0 893.6,639.8 894.6,641.9 894.3,637.3 894.9,637.8 894.7,632.8 894.8,629.9 895.7,630.9 896.1,625.9 896.1,622.3 896.5,620.8 895.6,619.5 896.0,615.6 896.1,613.8 897.0,612.7 896.5,610.3 896.8,605.4 897.7,603.3 897.5,601.8 897.6,600.2 897.8,597.8 898.8,594.1 897.9,592.6 898.2,589.0 898.9,584.7 899.4,584.9 899.6,581.1 899.7,579.3 899.9,578.9 901.7,577.0 902.3,573.5 903.0,570.9 902.9,569.6 903.6,570.2 904.6,567.7 904.7,565.0 905.5,562.9 905.9,562.2 907.0,558.5 907.2,557.0 907.8,552.8 909.0,552.0 910.3,549.7 910.9,547.8 911.2,548.8 910.9,548.6 911.5,553.0 913.1,553.9 913.1,554.6 913.6,557.5 915.4,558.0 914.7,559.3 915.8,563.9 917.0,564.0 916.3,565.1 916.6,570.4 917.2,573.8 918.1,575.6 917.7,578.3 917.4,578.0 918.3,582.1 918.0,583.7 917.9,588.9 919.1,591.6 919.7,592.1 919.6,594.5 919.9,598.9 919.2,598.1 919.6,603.0 920.0,603.2 920.9,608.9 920.6,608.5 921.4,613.0 920.6,609.6 921.7,609.2 921.8,605.6 921.7,601.4 923.0,599.4 922.2,597.6 922.6,593.4 923.4,592.4 924.0,590.2 924.0,585.1 924.7,582.4 924.7,581.2 925.3,579.8 925.3,579.4 926.6,578.4 926.4,580.0 927.7,576.3 927.8,579.8 928.4,577.2 929.8,578.7 930.2,578.2 930.0,575.4 931.9,578.0 931.2,574.7 932.1,578.0 932.7,576.8 934.3,576.4 934.9,574.7 934.4,573.5 935.9,573.6 936.8,575.8 936.7,574.7"/><rect x="762.5" y="525" width="3.5" height="120" fill="#ff0000"/></svg>
<div class="a" style="left:958px;top:126px;width:200px;height:554px;border:1px solid #dcdcdc"></div>
<div class="t" style="left:970px;top:120px;font-size:12px;background:#f0f0f0;padding:0 1px;z-index:3">区域信息</div>
<div class="a" style="left:962px;top:136px;width:195px;height:43px;border:1px solid #dcdcdc"></div>
<div class="a" style="left:963px;top:151px;width:13px;height:13px;background:#fff;border:1px solid #333"></div>
<div class="t" style="left:982px;top:152px">区域合并</div>
<div class="a" style="left:962px;top:188px;width:191px;height:174px;border:1px solid #dcdcdc"></div>
<div class="t" style="left:972px;top:182px;font-size:12px;background:#f0f0f0;padding:0 1px;z-index:3">采样点分析</div>
<div class="t" style="left:968px;top:200px">分析条件:</div><div class="t m" style="left:1028px;top:202px">None</div>
<div class="t" style="left:968px;top:218px">当前帧号:</div><div class="t m" style="left:1046px;top:220px">26440</div>
<div class="t" style="left:968px;top:241px">时间:</div><div class="t m" style="left:1046px;top:237px;color:#000">2022-05-17</div><div class="t m" style="left:1046px;top:250px;color:#000">14:26:50.135</div>
<div class="t" style="left:968px;top:266px">单点最大值:</div><div class="t m" style="left:1046px;top:268px">314.66KPa</div>
<div class="t" style="left:968px;top:284px">单点最小值:</div><div class="t m" style="left:1046px;top:286px">0.47KPa</div>
<div class="t" style="left:968px;top:306px">分位数:</div>
<div class="a" style="left:1046px;top:303px;width:85px;height:18px;background:#fff"></div><div class="t m" style="left:1049px;top:308px">1</div>
<svg class="a" style="left:1132px;top:304px" width="14" height="16"><rect x="0.5" y="0.5" width="13" height="15" fill="#ececec" stroke="#a8a8a8"/><path d="M0.5 8.5H13.5" stroke="#a8a8a8"/><path d="M4.3 5.6L7 2.8L9.7 5.6Z M4.3 10.4L7 13.2L9.7 10.4Z" fill="#000" stroke="#000" stroke-width="0.6" stroke-linejoin="round"/></svg>
<div class="t" style="left:968px;top:328px">分位值:</div><div class="t m" style="left:1046px;top:330px">2.80KPa</div>
<div class="t" style="left:968px;top:346px">平均:</div><div class="t m" style="left:1046px;top:348px">59.45KPa</div>
<div class="a" style="left:962px;top:371px;width:191px;height:148px;border:1px solid #dcdcdc"></div>
<div class="t" style="left:972px;top:365px;font-size:12px;background:#f0f0f0;padding:0 1px;z-index:3">曲线分析</div>
<div class="t" style="left:968px;top:382px">压强最大值:</div><div class="t m" style="left:1046px;top:384px">61.07KPa</div>
<div class="t" style="left:968px;top:401px">压强最小值:</div><div class="t m" style="left:1046px;top:403px">23.88KPa</div>
<div class="t" style="left:968px;top:420px">总力最大值:</div><div class="t m" style="left:1046px;top:422px">32.08 N</div>
<div class="t" style="left:968px;top:439px">总力最小值:</div><div class="t m" style="left:1046px;top:441px">0.10 N</div>
<div class="t" style="left:968px;top:458px">面积最大值:</div><div class="t m" style="left:1046px;top:460px">7.88cm²</div>
<div class="t" style="left:968px;top:477px">面积最小值:</div><div class="t m" style="left:1046px;top:479px">0.04cm²</div>
<div class="a" style="left:962px;top:521px;width:192px;height:156px;background:#fff;border:1px solid #828790"></div>
<div class="a" style="left:964px;top:530px;width:50px;height:3px;background:#00ff00"></div>
<div class="t" style="left:1020px;top:527px;font-size:10px">图例 1</div>
<div class="t" style="left:964px;top:545px;font-size:10px;letter-spacing:-0.4px">中心(60, 60) 宽:120, 高:120</div>
<div class="a" style="left:1184px;top:109px;width:581px;height:583px;background:#f0f0f0"></div>
<div class="a" style="left:1192px;top:117px;width:565px;height:567px;background:#fff"></div>
<div class="a" style="left:1193px;top:118px;width:563px;height:565px;background:#000"></div>
<svg class="a" style="left:0;top:0" width="1920" height="1039" shape-rendering="crispEdges"><path d="M1315 321h3v3h-3zM1320 321h3v3h-3zM1325 321h3v3h-3zM1330 321h3v3h-3zM1335 321h3v3h-3zM1341 321h3v3h-3zM1346 321h3v3h-3zM1351 321h3v3h-3zM1356 321h3v3h-3zM1361 321h3v3h-3zM1366 321h3v3h-3zM1371 321h3v3h-3zM1377 321h3v3h-3zM1382 321h3v3h-3zM1387 321h3v3h-3zM1392 321h3v3h-3zM1397 321h3v3h-3zM1402 321h3v3h-3zM1408 321h3v3h-3zM1413 321h3v3h-3zM1418 321h3v3h-3zM1423 321h3v3h-3zM1428 321h3v3h-3zM1433 321h3v3h-3zM1438 321h3v3h-3zM1444 321h3v3h-3zM1449 321h3v3h-3zM1454 321h3v3h-3zM1459 321h3v3h-3zM1464 321h3v3h-3zM1469 321h3v3h-3zM1474 321h3v3h-3zM1480 321h3v3h-3zM1485 321h3v3h-3zM1490 321h3v3h-3zM1495 321h3v3h-3zM1500 321h3v3h-3zM1505 321h3v3h-3zM1510 321h3v3h-3zM1516 321h3v3h-3zM1521 321h3v3h-3zM1526 321h3v3h-3zM1531 321h3v3h-3zM1536 321h3v3h-3zM1541 321h3v3h-3zM1547 321h3v3h-3zM1552 321h3v3h-3zM1557 321h3v3h-3zM1562 321h3v3h-3zM1567 321h3v3h-3zM1572 321h3v3h-3zM1577 321h3v3h-3zM1583 321h3v3h-3zM1588 321h3v3h-3zM1593 321h3v3h-3zM1598 321h3v3h-3zM1603 321h3v3h-3zM1608 321h3v3h-3zM1613 321h3v3h-3zM1619 321h3v3h-3zM1624 321h3v3h-3zM1314 323h3v3h-3zM1319 323h3v3h-3zM1324 323h3v3h-3zM1329 323h3v3h-3zM1335 323h3v3h-3zM1340 323h3v3h-3zM1345 323h3v3h-3zM1350 323h3v3h-3zM1355 323h3v3h-3zM1360 323h3v3h-3zM1366 323h3v3h-3zM1371 323h3v3h-3zM1376 323h3v3h-3zM1381 323h3v3h-3zM1386 323h3v3h-3zM1392 323h3v3h-3zM1397 323h3v3h-3zM1402 323h3v3h-3zM1407 323h3v3h-3zM1412 323h3v3h-3zM1417 323h3v3h-3zM1423 323h3v3h-3zM1428 323h3v3h-3zM1433 323h3v3h-3zM1438 323h3v3h-3zM1443 323h3v3h-3zM1449 323h3v3h-3zM1454 323h3v3h-3zM1459 323h3v3h-3zM1464 323h3v3h-3zM1469 323h3v3h-3zM1474 323h3v3h-3zM1480 323h3v3h-3zM1485 323h3v3h-3zM1490 323h3v3h-3zM1495 323h3v3h-3zM1500 323h3v3h-3zM1506 323h3v3h-3zM1511 323h3v3h-3zM1516 323h3v3h-3zM1521 323h3v3h-3zM1526 323h3v3h-3zM1531 323h3v3h-3zM1537 323h3v3h-3zM1542 323h3v3h-3zM1547 323h3v3h-3zM1552 323h3v3h-3zM1557 323h3v3h-3zM1563 323h3v3h-3zM1568 323h3v3h-3zM1573 323h3v3h-3zM1578 323h3v3h-3zM1583 323h3v3h-3zM1588 323h3v3h-3zM1594 323h3v3h-3zM1599 323h3v3h-3zM1604 323h3v3h-3zM1609 323h3v3h-3zM1614 323h3v3h-3zM1620 323h3v3h-3zM1625 323h3v3h-3zM1313 325h3v3h-3zM1318 325h3v3h-3zM1323 325h3v3h-3zM1328 325h3v3h-3zM1334 325h3v3h-3zM1339 325h3v3h-3zM1344 325h3v3h-3zM1349 325h3v3h-3zM1355 325h3v3h-3zM1360 325h3v3h-3zM1365 325h3v3h-3zM1370 325h3v3h-3zM1375 325h3v3h-3zM1381 325h3v3h-3zM1386 325h3v3h-3zM1391 325h3v3h-3zM1396 325h3v3h-3zM1401 325h3v3h-3zM1407 325h3v3h-3zM1412 325h3v3h-3zM1417 325h3v3h-3zM1422 325h3v3h-3zM1428 325h3v3h-3zM1433 325h3v3h-3zM1438 325h3v3h-3zM1443 325h3v3h-3zM1448 325h3v3h-3zM1454 325h3v3h-3zM1459 325h3v3h-3zM1464 325h3v3h-3zM1469 325h3v3h-3zM1475 325h3v3h-3zM1480 325h3v3h-3zM1485 325h3v3h-3zM1490 325h3v3h-3zM1495 325h3v3h-3zM1501 325h3v3h-3zM1506 325h3v3h-3zM1511 325h3v3h-3zM1516 325h3v3h-3zM1521 325h3v3h-3zM1527 325h3v3h-3zM1532 325h3v3h-3zM1537 325h3v3h-3zM1542 325h3v3h-3zM1548 325h3v3h-3zM1553 325h3v3h-3zM1558 325h3v3h-3zM1563 325h3v3h-3zM1568 325h3v3h-3zM1574 325h3v3h-3zM1579 325h3v3h-3zM1584 325h3v3h-3zM1589 325h3v3h-3zM1594 325h3v3h-3zM1600 325h3v3h-3zM1605 325h3v3h-3zM1610 325h3v3h-3zM1615 325h3v3h-3zM1621 325h3v3h-3zM1626 325h3v3h-3zM1312 327h3v3h-3zM1317 327h3v3h-3zM1322 327h3v3h-3zM1328 327h3v3h-3zM1333 327h3v3h-3zM1338 327h3v3h-3zM1343 327h3v3h-3zM1349 327h3v3h-3zM1354 327h3v3h-3zM1359 327h3v3h-3zM1364 327h3v3h-3zM1370 327h3v3h-3zM1375 327h3v3h-3zM1380 327h3v3h-3zM1385 327h3v3h-3zM1391 327h3v3h-3zM1396 327h3v3h-3zM1401 327h3v3h-3zM1406 327h3v3h-3zM1412 327h3v3h-3zM1417 327h3v3h-3zM1422 327h3v3h-3zM1427 327h3v3h-3zM1433 327h3v3h-3zM1438 327h3v3h-3zM1443 327h3v3h-3zM1448 327h3v3h-3zM1454 327h3v3h-3zM1459 327h3v3h-3zM1464 327h3v3h-3zM1469 327h3v3h-3zM1475 327h3v3h-3zM1480 327h3v3h-3zM1485 327h3v3h-3zM1490 327h3v3h-3zM1496 327h3v3h-3zM1501 327h3v3h-3zM1506 327h3v3h-3zM1511 327h3v3h-3zM1517 327h3v3h-3zM1522 327h3v3h-3zM1527 327h3v3h-3zM1532 327h3v3h-3zM1538 327h3v3h-3zM1543 327h3v3h-3zM1548 327h3v3h-3zM1553 327h3v3h-3zM1559 327h3v3h-3zM1564 327h3v3h-3zM1569 327h3v3h-3zM1574 327h3v3h-3zM1580 327h3v3h-3zM1585 327h3v3h-3zM1590 327h3v3h-3zM1595 327h3v3h-3zM1601 327h3v3h-3zM1606 327h3v3h-3zM1611 327h3v3h-3zM1616 327h3v3h-3zM1622 327h3v3h-3zM1627 327h3v3h-3zM1311 329h3v3h-3zM1316 329h3v3h-3zM1321 329h3v3h-3zM1327 329h3v3h-3zM1332 329h3v3h-3zM1337 329h3v3h-3zM1342 329h3v3h-3zM1348 329h3v3h-3zM1353 329h3v3h-3zM1358 329h3v3h-3zM1364 329h3v3h-3zM1369 329h3v3h-3zM1374 329h3v3h-3zM1379 329h3v3h-3zM1385 329h3v3h-3zM1390 329h3v3h-3zM1395 329h3v3h-3zM1401 329h3v3h-3zM1406 329h3v3h-3zM1411 329h3v3h-3zM1416 329h3v3h-3zM1422 329h3v3h-3zM1427 329h3v3h-3zM1432 329h3v3h-3zM1438 329h3v3h-3zM1443 329h3v3h-3zM1448 329h3v3h-3zM1453 329h3v3h-3zM1459 329h3v3h-3zM1464 329h3v3h-3zM1469 329h3v3h-3zM1475 329h3v3h-3zM1480 329h3v3h-3zM1485 329h3v3h-3zM1490 329h3v3h-3zM1496 329h3v3h-3zM1501 329h3v3h-3zM1506 329h3v3h-3zM1512 329h3v3h-3zM1517 329h3v3h-3zM1522 329h3v3h-3zM1527 329h3v3h-3zM1533 329h3v3h-3zM1538 329h3v3h-3zM1543 329h3v3h-3zM1549 329h3v3h-3zM1554 329h3v3h-3zM1559 329h3v3h-3zM1564 329h3v3h-3zM1570 329h3v3h-3zM1575 329h3v3h-3zM1580 329h3v3h-3zM1586 329h3v3h-3zM1591 329h3v3h-3zM1596 329h3v3h-3zM1601 329h3v3h-3zM1607 329h3v3h-3zM1612 329h3v3h-3zM1617 329h3v3h-3zM1623 329h3v3h-3zM1628 329h3v3h-3zM1310 332h3v3h-3zM1315 332h3v3h-3zM1320 332h3v3h-3zM1326 332h3v3h-3zM1331 332h3v3h-3zM1336 332h3v3h-3zM1342 332h3v3h-3zM1347 332h3v3h-3zM1352 332h3v3h-3zM1358 332h3v3h-3zM1363 332h3v3h-3zM1368 332h3v3h-3zM1374 332h3v3h-3zM1379 332h3v3h-3zM1384 332h3v3h-3zM1389 332h3v3h-3zM1395 332h3v3h-3zM1400 332h3v3h-3zM1405 332h3v3h-3zM1411 332h3v3h-3zM1416 332h3v3h-3zM1421 332h3v3h-3zM1427 332h3v3h-3zM1432 332h3v3h-3zM1437 332h3v3h-3zM1443 332h3v3h-3zM1448 332h3v3h-3zM1453 332h3v3h-3zM1459 332h3v3h-3zM1464 332h3v3h-3zM1469 332h3v3h-3zM1475 332h3v3h-3zM1480 332h3v3h-3zM1485 332h3v3h-3zM1491 332h3v3h-3zM1496 332h3v3h-3zM1501 332h3v3h-3zM1507 332h3v3h-3zM1512 332h3v3h-3zM1517 332h3v3h-3zM1523 332h3v3h-3zM1528 332h3v3h-3zM1533 332h3v3h-3zM1538 332h3v3h-3zM1544 332h3v3h-3zM1549 332h3v3h-3zM1554 332h3v3h-3zM1560 332h3v3h-3zM1565 332h3v3h-3zM1570 332h3v3h-3zM1576 332h3v3h-3zM1581 332h3v3h-3zM1586 332h3v3h-3zM1592 332h3v3h-3zM1597 332h3v3h-3zM1602 332h3v3h-3zM1608 332h3v3h-3zM1613 332h3v3h-3zM1618 332h3v3h-3zM1624 332h3v3h-3zM1629 332h3v3h-3zM1309 334h3v3h-3zM1314 334h3v3h-3zM1319 334h3v3h-3zM1325 334h3v3h-3zM1330 334h3v3h-3zM1335 334h3v3h-3zM1341 334h3v3h-3zM1346 334h3v3h-3zM1351 334h3v3h-3zM1357 334h3v3h-3zM1362 334h3v3h-3zM1368 334h3v3h-3zM1373 334h3v3h-3zM1378 334h3v3h-3zM1384 334h3v3h-3zM1389 334h3v3h-3zM1394 334h3v3h-3zM1400 334h3v3h-3zM1405 334h3v3h-3zM1410 334h3v3h-3zM1416 334h3v3h-3zM1421 334h3v3h-3zM1426 334h3v3h-3zM1432 334h3v3h-3zM1437 334h3v3h-3zM1443 334h3v3h-3zM1448 334h3v3h-3zM1453 334h3v3h-3zM1459 334h3v3h-3zM1464 334h3v3h-3zM1469 334h3v3h-3zM1475 334h3v3h-3zM1480 334h3v3h-3zM1485 334h3v3h-3zM1491 334h3v3h-3zM1496 334h3v3h-3zM1501 334h3v3h-3zM1507 334h3v3h-3zM1512 334h3v3h-3zM1518 334h3v3h-3zM1523 334h3v3h-3zM1528 334h3v3h-3zM1534 334h3v3h-3zM1539 334h3v3h-3zM1544 334h3v3h-3zM1550 334h3v3h-3zM1555 334h3v3h-3zM1560 334h3v3h-3zM1566 334h3v3h-3zM1571 334h3v3h-3zM1576 334h3v3h-3zM1582 334h3v3h-3zM1587 334h3v3h-3zM1593 334h3v3h-3zM1598 334h3v3h-3zM1603 334h3v3h-3zM1609 334h3v3h-3zM1614 334h3v3h-3zM1619 334h3v3h-3zM1625 334h3v3h-3zM1630 334h3v3h-3zM1307 336h3v3h-3zM1313 336h3v3h-3zM1318 336h3v3h-3zM1324 336h3v3h-3zM1329 336h3v3h-3zM1334 336h3v3h-3zM1340 336h3v3h-3zM1345 336h3v3h-3zM1351 336h3v3h-3zM1356 336h3v3h-3zM1361 336h3v3h-3zM1367 336h3v3h-3zM1372 336h3v3h-3zM1378 336h3v3h-3zM1383 336h3v3h-3zM1388 336h3v3h-3zM1394 336h3v3h-3zM1399 336h3v3h-3zM1405 336h3v3h-3zM1410 336h3v3h-3zM1415 336h3v3h-3zM1421 336h3v3h-3zM1426 336h3v3h-3zM1432 336h3v3h-3zM1437 336h3v3h-3zM1442 336h3v3h-3zM1448 336h3v3h-3zM1453 336h3v3h-3zM1459 336h3v3h-3zM1464 336h3v3h-3zM1469 336h3v3h-3zM1475 336h3v3h-3zM1480 336h3v3h-3zM1485 336h3v3h-3zM1491 336h3v3h-3zM1496 336h3v3h-3zM1502 336h3v3h-3zM1507 336h3v3h-3zM1512 336h3v3h-3zM1518 336h3v3h-3zM1523 336h3v3h-3zM1529 336h3v3h-3zM1534 336h3v3h-3zM1539 336h3v3h-3zM1545 336h3v3h-3zM1550 336h3v3h-3zM1556 336h3v3h-3zM1561 336h3v3h-3zM1566 336h3v3h-3zM1572 336h3v3h-3zM1577 336h3v3h-3zM1583 336h3v3h-3zM1588 336h3v3h-3zM1593 336h3v3h-3zM1599 336h3v3h-3zM1604 336h3v3h-3zM1610 336h3v3h-3zM1615 336h3v3h-3zM1620 336h3v3h-3zM1626 336h3v3h-3zM1631 336h3v3h-3zM1306 338h3v3h-3zM1312 338h3v3h-3zM1317 338h3v3h-3zM1323 338h3v3h-3zM1328 338h3v3h-3zM1334 338h3v3h-3zM1339 338h3v3h-3zM1344 338h3v3h-3zM1350 338h3v3h-3zM1355 338h3v3h-3zM1361 338h3v3h-3zM1366 338h3v3h-3zM1372 338h3v3h-3zM1377 338h3v3h-3zM1382 338h3v3h-3zM1388 338h3v3h-3zM1393 338h3v3h-3zM1399 338h3v3h-3zM1404 338h3v3h-3zM1410 338h3v3h-3zM1415 338h3v3h-3zM1420 338h3v3h-3zM1426 338h3v3h-3zM1431 338h3v3h-3zM1437 338h3v3h-3zM1442 338h3v3h-3zM1448 338h3v3h-3zM1453 338h3v3h-3zM1458 338h3v3h-3zM1464 338h3v3h-3zM1469 338h3v3h-3zM1475 338h3v3h-3zM1480 338h3v3h-3zM1486 338h3v3h-3zM1491 338h3v3h-3zM1496 338h3v3h-3zM1502 338h3v3h-3zM1507 338h3v3h-3zM1513 338h3v3h-3zM1518 338h3v3h-3zM1524 338h3v3h-3zM1529 338h3v3h-3zM1534 338h3v3h-3zM1540 338h3v3h-3zM1545 338h3v3h-3zM1551 338h3v3h-3zM1556 338h3v3h-3zM1562 338h3v3h-3zM1567 338h3v3h-3zM1572 338h3v3h-3zM1578 338h3v3h-3zM1583 338h3v3h-3zM1589 338h3v3h-3zM1594 338h3v3h-3zM1600 338h3v3h-3zM1605 338h3v3h-3zM1610 338h3v3h-3zM1616 338h3v3h-3zM1621 338h3v3h-3zM1627 338h3v3h-3zM1632 338h3v3h-3zM1305 341h3v3h-3zM1311 341h3v3h-3zM1316 341h3v3h-3zM1322 341h3v3h-3zM1327 341h3v3h-3zM1333 341h3v3h-3zM1338 341h3v3h-3zM1344 341h3v3h-3zM1349 341h3v3h-3zM1354 341h3v3h-3zM1360 341h3v3h-3zM1365 341h3v3h-3zM1371 341h3v3h-3zM1376 341h3v3h-3zM1382 341h3v3h-3zM1387 341h3v3h-3zM1393 341h3v3h-3zM1398 341h3v3h-3zM1404 341h3v3h-3zM1409 341h3v3h-3zM1415 341h3v3h-3zM1420 341h3v3h-3zM1426 341h3v3h-3zM1431 341h3v3h-3zM1436 341h3v3h-3zM1442 341h3v3h-3zM1447 341h3v3h-3zM1453 341h3v3h-3zM1458 341h3v3h-3zM1464 341h3v3h-3zM1469 341h3v3h-3zM1475 341h3v3h-3zM1480 341h3v3h-3zM1486 341h3v3h-3zM1491 341h3v3h-3zM1497 341h3v3h-3zM1502 341h3v3h-3zM1508 341h3v3h-3zM1513 341h3v3h-3zM1519 341h3v3h-3zM1524 341h3v3h-3zM1529 341h3v3h-3zM1535 341h3v3h-3zM1540 341h3v3h-3zM1546 341h3v3h-3zM1551 341h3v3h-3zM1557 341h3v3h-3zM1562 341h3v3h-3zM1568 341h3v3h-3zM1573 341h3v3h-3zM1579 341h3v3h-3zM1584 341h3v3h-3zM1590 341h3v3h-3zM1595 341h3v3h-3zM1601 341h3v3h-3zM1606 341h3v3h-3zM1611 341h3v3h-3zM1617 341h3v3h-3zM1622 341h3v3h-3zM1628 341h3v3h-3zM1633 341h3v3h-3zM1304 343h3v3h-3zM1310 343h3v3h-3zM1315 343h3v3h-3zM1321 343h3v3h-3zM1326 343h3v3h-3zM1332 343h3v3h-3zM1337 343h3v3h-3zM1343 343h3v3h-3zM1348 343h3v3h-3zM1354 343h3v3h-3zM1359 343h3v3h-3zM1365 343h3v3h-3zM1370 343h3v3h-3zM1376 343h3v3h-3zM1381 343h3v3h-3zM1387 343h3v3h-3zM1392 343h3v3h-3zM1398 343h3v3h-3zM1403 343h3v3h-3zM1409 343h3v3h-3zM1414 343h3v3h-3zM1420 343h3v3h-3zM1425 343h3v3h-3zM1431 343h3v3h-3zM1436 343h3v3h-3zM1442 343h3v3h-3zM1447 343h3v3h-3zM1453 343h3v3h-3zM1458 343h3v3h-3zM1464 343h3v3h-3zM1469 343h3v3h-3zM1475 343h3v3h-3zM1480 343h3v3h-3zM1486 343h3v3h-3zM1491 343h3v3h-3zM1497 343h3v3h-3zM1502 343h3v3h-3zM1508 343h3v3h-3zM1513 343h3v3h-3zM1519 343h3v3h-3zM1524 343h3v3h-3zM1530 343h3v3h-3zM1535 343h3v3h-3zM1541 343h3v3h-3zM1546 343h3v3h-3zM1552 343h3v3h-3zM1557 343h3v3h-3zM1563 343h3v3h-3zM1568 343h3v3h-3zM1574 343h3v3h-3zM1579 343h3v3h-3zM1585 343h3v3h-3zM1590 343h3v3h-3zM1596 343h3v3h-3zM1601 343h3v3h-3zM1607 343h3v3h-3zM1612 343h3v3h-3zM1618 343h3v3h-3zM1623 343h3v3h-3zM1629 343h3v3h-3zM1634 343h3v3h-3zM1303 345h3v3h-3zM1309 345h3v3h-3zM1314 345h3v3h-3zM1320 345h3v3h-3zM1325 345h3v3h-3zM1331 345h3v3h-3zM1336 345h3v3h-3zM1342 345h3v3h-3zM1347 345h3v3h-3zM1353 345h3v3h-3zM1358 345h3v3h-3zM1364 345h3v3h-3zM1370 345h3v3h-3zM1375 345h3v3h-3zM1381 345h3v3h-3zM1386 345h3v3h-3zM1392 345h3v3h-3zM1397 345h3v3h-3zM1403 345h3v3h-3zM1408 345h3v3h-3zM1414 345h3v3h-3zM1419 345h3v3h-3zM1425 345h3v3h-3zM1430 345h3v3h-3zM1436 345h3v3h-3zM1442 345h3v3h-3zM1447 345h3v3h-3zM1453 345h3v3h-3zM1458 345h3v3h-3zM1464 345h3v3h-3zM1469 345h3v3h-3zM1475 345h3v3h-3zM1480 345h3v3h-3zM1486 345h3v3h-3zM1491 345h3v3h-3zM1497 345h3v3h-3zM1503 345h3v3h-3zM1508 345h3v3h-3zM1514 345h3v3h-3zM1519 345h3v3h-3zM1525 345h3v3h-3zM1530 345h3v3h-3zM1536 345h3v3h-3zM1541 345h3v3h-3zM1547 345h3v3h-3zM1552 345h3v3h-3zM1558 345h3v3h-3zM1564 345h3v3h-3zM1569 345h3v3h-3zM1575 345h3v3h-3zM1580 345h3v3h-3zM1586 345h3v3h-3zM1591 345h3v3h-3zM1597 345h3v3h-3zM1602 345h3v3h-3zM1608 345h3v3h-3zM1613 345h3v3h-3zM1619 345h3v3h-3zM1625 345h3v3h-3zM1630 345h3v3h-3zM1636 345h3v3h-3zM1302 348h3v3h-3zM1307 348h3v3h-3zM1313 348h3v3h-3zM1319 348h3v3h-3zM1324 348h3v3h-3zM1330 348h3v3h-3zM1335 348h3v3h-3zM1341 348h3v3h-3zM1346 348h3v3h-3zM1352 348h3v3h-3zM1358 348h3v3h-3zM1363 348h3v3h-3zM1369 348h3v3h-3zM1374 348h3v3h-3zM1380 348h3v3h-3zM1386 348h3v3h-3zM1391 348h3v3h-3zM1397 348h3v3h-3zM1402 348h3v3h-3zM1408 348h3v3h-3zM1413 348h3v3h-3zM1419 348h3v3h-3zM1425 348h3v3h-3zM1430 348h3v3h-3zM1436 348h3v3h-3zM1441 348h3v3h-3zM1447 348h3v3h-3zM1453 348h3v3h-3zM1458 348h3v3h-3zM1464 348h3v3h-3zM1469 348h3v3h-3zM1475 348h3v3h-3zM1480 348h3v3h-3zM1486 348h3v3h-3zM1492 348h3v3h-3zM1497 348h3v3h-3zM1503 348h3v3h-3zM1508 348h3v3h-3zM1514 348h3v3h-3zM1520 348h3v3h-3zM1525 348h3v3h-3zM1531 348h3v3h-3zM1536 348h3v3h-3zM1542 348h3v3h-3zM1547 348h3v3h-3zM1553 348h3v3h-3zM1559 348h3v3h-3zM1564 348h3v3h-3zM1570 348h3v3h-3zM1575 348h3v3h-3zM1581 348h3v3h-3zM1587 348h3v3h-3zM1592 348h3v3h-3zM1598 348h3v3h-3zM1603 348h3v3h-3zM1609 348h3v3h-3zM1614 348h3v3h-3zM1620 348h3v3h-3zM1626 348h3v3h-3zM1631 348h3v3h-3zM1637 348h3v3h-3zM1301 350h3v3h-3zM1306 350h3v3h-3zM1312 350h3v3h-3zM1317 350h3v3h-3zM1323 350h3v3h-3zM1329 350h3v3h-3zM1334 350h3v3h-3zM1340 350h3v3h-3zM1346 350h3v3h-3zM1351 350h3v3h-3zM1357 350h3v3h-3zM1362 350h3v3h-3zM1368 350h3v3h-3zM1374 350h3v3h-3zM1379 350h3v3h-3zM1385 350h3v3h-3zM1391 350h3v3h-3zM1396 350h3v3h-3zM1402 350h3v3h-3zM1407 350h3v3h-3zM1413 350h3v3h-3zM1419 350h3v3h-3zM1424 350h3v3h-3zM1430 350h3v3h-3zM1436 350h3v3h-3zM1441 350h3v3h-3zM1447 350h3v3h-3zM1452 350h3v3h-3zM1458 350h3v3h-3zM1464 350h3v3h-3zM1469 350h3v3h-3zM1475 350h3v3h-3zM1481 350h3v3h-3zM1486 350h3v3h-3zM1492 350h3v3h-3zM1497 350h3v3h-3zM1503 350h3v3h-3zM1509 350h3v3h-3zM1514 350h3v3h-3zM1520 350h3v3h-3zM1526 350h3v3h-3zM1531 350h3v3h-3zM1537 350h3v3h-3zM1542 350h3v3h-3zM1548 350h3v3h-3zM1554 350h3v3h-3zM1559 350h3v3h-3zM1565 350h3v3h-3zM1571 350h3v3h-3zM1576 350h3v3h-3zM1582 350h3v3h-3zM1587 350h3v3h-3zM1593 350h3v3h-3zM1599 350h3v3h-3zM1604 350h3v3h-3zM1610 350h3v3h-3zM1615 350h3v3h-3zM1621 350h3v3h-3zM1627 350h3v3h-3zM1632 350h3v3h-3zM1638 350h3v3h-3zM1299 353h3v3h-3zM1305 353h3v3h-3zM1311 353h3v3h-3zM1316 353h3v3h-3zM1322 353h3v3h-3zM1328 353h3v3h-3zM1333 353h3v3h-3zM1339 353h3v3h-3zM1345 353h3v3h-3zM1350 353h3v3h-3zM1356 353h3v3h-3zM1362 353h3v3h-3zM1367 353h3v3h-3zM1373 353h3v3h-3zM1379 353h3v3h-3zM1384 353h3v3h-3zM1390 353h3v3h-3zM1396 353h3v3h-3zM1401 353h3v3h-3zM1407 353h3v3h-3zM1413 353h3v3h-3zM1418 353h3v3h-3zM1424 353h3v3h-3zM1430 353h3v3h-3zM1435 353h3v3h-3zM1441 353h3v3h-3zM1447 353h3v3h-3zM1452 353h3v3h-3zM1458 353h3v3h-3zM1464 353h3v3h-3zM1469 353h3v3h-3zM1475 353h3v3h-3zM1481 353h3v3h-3zM1486 353h3v3h-3zM1492 353h3v3h-3zM1498 353h3v3h-3zM1503 353h3v3h-3zM1509 353h3v3h-3zM1515 353h3v3h-3zM1520 353h3v3h-3zM1526 353h3v3h-3zM1532 353h3v3h-3zM1537 353h3v3h-3zM1543 353h3v3h-3zM1549 353h3v3h-3zM1554 353h3v3h-3zM1560 353h3v3h-3zM1566 353h3v3h-3zM1571 353h3v3h-3zM1577 353h3v3h-3zM1583 353h3v3h-3zM1588 353h3v3h-3zM1594 353h3v3h-3zM1600 353h3v3h-3zM1605 353h3v3h-3zM1611 353h3v3h-3zM1617 353h3v3h-3zM1622 353h3v3h-3zM1628 353h3v3h-3zM1634 353h3v3h-3zM1639 353h3v3h-3zM1298 355h3v3h-3zM1304 355h3v3h-3zM1310 355h3v3h-3zM1315 355h3v3h-3zM1321 355h3v3h-3zM1327 355h3v3h-3zM1332 355h3v3h-3zM1338 355h3v3h-3zM1344 355h3v3h-3zM1350 355h3v3h-3zM1355 355h3v3h-3zM1361 355h3v3h-3zM1367 355h3v3h-3zM1372 355h3v3h-3zM1378 355h3v3h-3zM1384 355h3v3h-3zM1389 355h3v3h-3zM1395 355h3v3h-3zM1401 355h3v3h-3zM1407 355h3v3h-3zM1412 355h3v3h-3zM1418 355h3v3h-3zM1424 355h3v3h-3zM1429 355h3v3h-3zM1435 355h3v3h-3zM1441 355h3v3h-3zM1446 355h3v3h-3zM1452 355h3v3h-3zM1458 355h3v3h-3zM1464 355h3v3h-3zM1469 355h3v3h-3zM1475 355h3v3h-3zM1481 355h3v3h-3zM1486 355h3v3h-3zM1492 355h3v3h-3zM1498 355h3v3h-3zM1504 355h3v3h-3zM1509 355h3v3h-3zM1515 355h3v3h-3zM1521 355h3v3h-3zM1526 355h3v3h-3zM1532 355h3v3h-3zM1538 355h3v3h-3zM1543 355h3v3h-3zM1549 355h3v3h-3zM1555 355h3v3h-3zM1561 355h3v3h-3zM1566 355h3v3h-3zM1572 355h3v3h-3zM1578 355h3v3h-3zM1583 355h3v3h-3zM1589 355h3v3h-3zM1595 355h3v3h-3zM1600 355h3v3h-3zM1606 355h3v3h-3zM1612 355h3v3h-3zM1618 355h3v3h-3zM1623 355h3v3h-3zM1629 355h3v3h-3zM1635 355h3v3h-3zM1640 355h3v3h-3zM1297 358h3v3h-3zM1303 358h3v3h-3zM1308 358h3v3h-3zM1314 358h3v3h-3zM1320 358h3v3h-3zM1326 358h3v3h-3zM1331 358h3v3h-3zM1337 358h3v3h-3zM1343 358h3v3h-3zM1349 358h3v3h-3zM1354 358h3v3h-3zM1360 358h3v3h-3zM1366 358h3v3h-3zM1372 358h3v3h-3zM1377 358h3v3h-3zM1383 358h3v3h-3zM1389 358h3v3h-3zM1395 358h3v3h-3zM1400 358h3v3h-3zM1406 358h3v3h-3zM1412 358h3v3h-3zM1418 358h3v3h-3zM1423 358h3v3h-3zM1429 358h3v3h-3zM1435 358h3v3h-3zM1441 358h3v3h-3zM1446 358h3v3h-3zM1452 358h3v3h-3zM1458 358h3v3h-3zM1464 358h3v3h-3zM1469 358h3v3h-3zM1475 358h3v3h-3zM1481 358h3v3h-3zM1487 358h3v3h-3zM1492 358h3v3h-3zM1498 358h3v3h-3zM1504 358h3v3h-3zM1510 358h3v3h-3zM1515 358h3v3h-3zM1521 358h3v3h-3zM1527 358h3v3h-3zM1532 358h3v3h-3zM1538 358h3v3h-3zM1544 358h3v3h-3zM1550 358h3v3h-3zM1555 358h3v3h-3zM1561 358h3v3h-3zM1567 358h3v3h-3zM1573 358h3v3h-3zM1578 358h3v3h-3zM1584 358h3v3h-3zM1590 358h3v3h-3zM1596 358h3v3h-3zM1601 358h3v3h-3zM1607 358h3v3h-3zM1613 358h3v3h-3zM1619 358h3v3h-3zM1624 358h3v3h-3zM1630 358h3v3h-3zM1636 358h3v3h-3zM1642 358h3v3h-3zM1296 360h3v3h-3zM1301 360h3v3h-3zM1307 360h3v3h-3zM1313 360h3v3h-3zM1319 360h3v3h-3zM1325 360h3v3h-3zM1330 360h3v3h-3zM1336 360h3v3h-3zM1342 360h3v3h-3zM1348 360h3v3h-3zM1354 360h3v3h-3zM1359 360h3v3h-3zM1365 360h3v3h-3zM1371 360h3v3h-3zM1377 360h3v3h-3zM1383 360h3v3h-3zM1388 360h3v3h-3zM1394 360h3v3h-3zM1400 360h3v3h-3zM1406 360h3v3h-3zM1411 360h3v3h-3zM1417 360h3v3h-3zM1423 360h3v3h-3zM1429 360h3v3h-3zM1435 360h3v3h-3zM1440 360h3v3h-3zM1446 360h3v3h-3zM1452 360h3v3h-3zM1458 360h3v3h-3zM1464 360h3v3h-3zM1469 360h3v3h-3zM1475 360h3v3h-3zM1481 360h3v3h-3zM1487 360h3v3h-3zM1492 360h3v3h-3zM1498 360h3v3h-3zM1504 360h3v3h-3zM1510 360h3v3h-3zM1516 360h3v3h-3zM1521 360h3v3h-3zM1527 360h3v3h-3zM1533 360h3v3h-3zM1539 360h3v3h-3zM1545 360h3v3h-3zM1550 360h3v3h-3zM1556 360h3v3h-3zM1562 360h3v3h-3zM1568 360h3v3h-3zM1573 360h3v3h-3zM1579 360h3v3h-3zM1585 360h3v3h-3zM1591 360h3v3h-3zM1597 360h3v3h-3zM1602 360h3v3h-3zM1608 360h3v3h-3zM1614 360h3v3h-3zM1620 360h3v3h-3zM1626 360h3v3h-3zM1631 360h3v3h-3zM1637 360h3v3h-3zM1643 360h3v3h-3zM1294 363h3v3h-3zM1300 363h3v3h-3zM1306 363h3v3h-3zM1312 363h3v3h-3zM1318 363h3v3h-3zM1324 363h3v3h-3zM1329 363h3v3h-3zM1335 363h3v3h-3zM1341 363h3v3h-3zM1347 363h3v3h-3zM1353 363h3v3h-3zM1359 363h3v3h-3zM1364 363h3v3h-3zM1370 363h3v3h-3zM1376 363h3v3h-3zM1382 363h3v3h-3zM1388 363h3v3h-3zM1394 363h3v3h-3zM1399 363h3v3h-3zM1405 363h3v3h-3zM1411 363h3v3h-3zM1417 363h3v3h-3zM1423 363h3v3h-3zM1428 363h3v3h-3zM1434 363h3v3h-3zM1440 363h3v3h-3zM1446 363h3v3h-3zM1452 363h3v3h-3zM1458 363h3v3h-3zM1463 363h3v3h-3zM1469 363h3v3h-3zM1475 363h3v3h-3zM1481 363h3v3h-3zM1487 363h3v3h-3zM1493 363h3v3h-3zM1498 363h3v3h-3zM1504 363h3v3h-3zM1510 363h3v3h-3zM1516 363h3v3h-3zM1522 363h3v3h-3zM1528 363h3v3h-3zM1533 363h3v3h-3zM1539 363h3v3h-3zM1545 363h3v3h-3zM1551 363h3v3h-3zM1557 363h3v3h-3zM1563 363h3v3h-3zM1568 363h3v3h-3zM1574 363h3v3h-3zM1580 363h3v3h-3zM1586 363h3v3h-3zM1592 363h3v3h-3zM1598 363h3v3h-3zM1603 363h3v3h-3zM1609 363h3v3h-3zM1615 363h3v3h-3zM1621 363h3v3h-3zM1627 363h3v3h-3zM1633 363h3v3h-3zM1638 363h3v3h-3zM1644 363h3v3h-3zM1293 366h3v3h-3zM1299 366h3v3h-3zM1305 366h3v3h-3zM1311 366h3v3h-3zM1317 366h3v3h-3zM1322 366h3v3h-3zM1328 366h3v3h-3zM1334 366h3v3h-3zM1340 366h3v3h-3zM1346 366h3v3h-3zM1352 366h3v3h-3zM1358 366h3v3h-3zM1364 366h3v3h-3zM1369 366h3v3h-3zM1375 366h3v3h-3zM1381 366h3v3h-3zM1387 366h3v3h-3zM1393 366h3v3h-3zM1399 366h3v3h-3zM1405 366h3v3h-3zM1411 366h3v3h-3zM1416 366h3v3h-3zM1422 366h3v3h-3zM1428 366h3v3h-3zM1434 366h3v3h-3zM1440 366h3v3h-3zM1446 366h3v3h-3zM1452 366h3v3h-3zM1458 366h3v3h-3zM1463 366h3v3h-3zM1469 366h3v3h-3zM1475 366h3v3h-3zM1481 366h3v3h-3zM1487 366h3v3h-3zM1493 366h3v3h-3zM1499 366h3v3h-3zM1505 366h3v3h-3zM1510 366h3v3h-3zM1516 366h3v3h-3zM1522 366h3v3h-3zM1528 366h3v3h-3zM1534 366h3v3h-3zM1540 366h3v3h-3zM1546 366h3v3h-3zM1552 366h3v3h-3zM1557 366h3v3h-3zM1563 366h3v3h-3zM1569 366h3v3h-3zM1575 366h3v3h-3zM1581 366h3v3h-3zM1587 366h3v3h-3zM1593 366h3v3h-3zM1598 366h3v3h-3zM1604 366h3v3h-3zM1610 366h3v3h-3zM1616 366h3v3h-3zM1622 366h3v3h-3zM1628 366h3v3h-3zM1634 366h3v3h-3zM1640 366h3v3h-3zM1645 366h3v3h-3zM1292 368h3v3h-3zM1298 368h3v3h-3zM1304 368h3v3h-3zM1310 368h3v3h-3zM1315 368h3v3h-3zM1321 368h3v3h-3zM1327 368h3v3h-3zM1333 368h3v3h-3zM1339 368h3v3h-3zM1345 368h3v3h-3zM1351 368h3v3h-3zM1357 368h3v3h-3zM1363 368h3v3h-3zM1369 368h3v3h-3zM1375 368h3v3h-3zM1381 368h3v3h-3zM1386 368h3v3h-3zM1392 368h3v3h-3zM1398 368h3v3h-3zM1404 368h3v3h-3zM1410 368h3v3h-3zM1416 368h3v3h-3zM1422 368h3v3h-3zM1428 368h3v3h-3zM1434 368h3v3h-3zM1440 368h3v3h-3zM1446 368h3v3h-3zM1452 368h3v3h-3zM1457 368h3v3h-3zM1463 368h3v3h-3zM1469 368h3v3h-3zM1475 368h3v3h-3zM1481 368h3v3h-3zM1487 368h3v3h-3zM1493 368h3v3h-3zM1499 368h3v3h-3zM1505 368h3v3h-3zM1511 368h3v3h-3zM1517 368h3v3h-3zM1523 368h3v3h-3zM1528 368h3v3h-3zM1534 368h3v3h-3zM1540 368h3v3h-3zM1546 368h3v3h-3zM1552 368h3v3h-3zM1558 368h3v3h-3zM1564 368h3v3h-3zM1570 368h3v3h-3zM1576 368h3v3h-3zM1582 368h3v3h-3zM1588 368h3v3h-3zM1594 368h3v3h-3zM1599 368h3v3h-3zM1605 368h3v3h-3zM1611 368h3v3h-3zM1617 368h3v3h-3zM1623 368h3v3h-3zM1629 368h3v3h-3zM1635 368h3v3h-3zM1641 368h3v3h-3zM1647 368h3v3h-3zM1290 371h3v3h-3zM1296 371h3v3h-3zM1302 371h3v3h-3zM1308 371h3v3h-3zM1314 371h3v3h-3zM1320 371h3v3h-3zM1326 371h3v3h-3zM1332 371h3v3h-3zM1338 371h3v3h-3zM1344 371h3v3h-3zM1350 371h3v3h-3zM1356 371h3v3h-3zM1362 371h3v3h-3zM1368 371h3v3h-3zM1374 371h3v3h-3zM1380 371h3v3h-3zM1386 371h3v3h-3zM1392 371h3v3h-3zM1398 371h3v3h-3zM1404 371h3v3h-3zM1410 371h3v3h-3zM1416 371h3v3h-3zM1422 371h3v3h-3zM1428 371h3v3h-3zM1434 371h3v3h-3zM1439 371h3v3h-3zM1445 371h3v3h-3zM1451 371h3v3h-3zM1457 371h3v3h-3zM1463 371h3v3h-3zM1469 371h3v3h-3zM1475 371h3v3h-3zM1481 371h3v3h-3zM1487 371h3v3h-3zM1493 371h3v3h-3zM1499 371h3v3h-3zM1505 371h3v3h-3zM1511 371h3v3h-3zM1517 371h3v3h-3zM1523 371h3v3h-3zM1529 371h3v3h-3zM1535 371h3v3h-3zM1541 371h3v3h-3zM1547 371h3v3h-3zM1553 371h3v3h-3zM1559 371h3v3h-3zM1565 371h3v3h-3zM1571 371h3v3h-3zM1577 371h3v3h-3zM1583 371h3v3h-3zM1589 371h3v3h-3zM1594 371h3v3h-3zM1600 371h3v3h-3zM1606 371h3v3h-3zM1612 371h3v3h-3zM1618 371h3v3h-3zM1624 371h3v3h-3zM1630 371h3v3h-3zM1636 371h3v3h-3zM1642 371h3v3h-3zM1648 371h3v3h-3zM1289 374h3v3h-3zM1295 374h3v3h-3zM1301 374h3v3h-3zM1307 374h3v3h-3zM1313 374h3v3h-3zM1319 374h3v3h-3zM1325 374h3v3h-3zM1331 374h3v3h-3zM1337 374h3v3h-3zM1343 374h3v3h-3zM1349 374h3v3h-3zM1355 374h3v3h-3zM1361 374h3v3h-3zM1367 374h3v3h-3zM1373 374h3v3h-3zM1379 374h3v3h-3zM1385 374h3v3h-3zM1391 374h3v3h-3zM1397 374h3v3h-3zM1403 374h3v3h-3zM1409 374h3v3h-3zM1415 374h3v3h-3zM1421 374h3v3h-3zM1427 374h3v3h-3zM1433 374h3v3h-3zM1439 374h3v3h-3zM1445 374h3v3h-3zM1451 374h3v3h-3zM1457 374h3v3h-3zM1463 374h3v3h-3zM1469 374h3v3h-3zM1475 374h3v3h-3zM1481 374h3v3h-3zM1487 374h3v3h-3zM1493 374h3v3h-3zM1499 374h3v3h-3zM1505 374h3v3h-3zM1511 374h3v3h-3zM1517 374h3v3h-3zM1523 374h3v3h-3zM1529 374h3v3h-3zM1535 374h3v3h-3zM1541 374h3v3h-3zM1547 374h3v3h-3zM1553 374h3v3h-3zM1559 374h3v3h-3zM1565 374h3v3h-3zM1571 374h3v3h-3zM1577 374h3v3h-3zM1583 374h3v3h-3zM1589 374h3v3h-3zM1595 374h3v3h-3zM1601 374h3v3h-3zM1607 374h3v3h-3zM1613 374h3v3h-3zM1619 374h3v3h-3zM1625 374h3v3h-3zM1631 374h3v3h-3zM1637 374h3v3h-3zM1643 374h3v3h-3zM1649 374h3v3h-3zM1288 377h3v3h-3zM1294 377h3v3h-3zM1300 377h3v3h-3zM1306 377h3v3h-3zM1312 377h3v3h-3zM1318 377h3v3h-3zM1324 377h3v3h-3zM1330 377h3v3h-3zM1336 377h3v3h-3zM1342 377h3v3h-3zM1348 377h3v3h-3zM1354 377h3v3h-3zM1360 377h3v3h-3zM1366 377h3v3h-3zM1372 377h3v3h-3zM1379 377h3v3h-3zM1385 377h3v3h-3zM1391 377h3v3h-3zM1397 377h3v3h-3zM1403 377h3v3h-3zM1409 377h3v3h-3zM1415 377h3v3h-3zM1421 377h3v3h-3zM1427 377h3v3h-3zM1433 377h3v3h-3zM1439 377h3v3h-3zM1445 377h3v3h-3zM1451 377h3v3h-3zM1457 377h3v3h-3zM1463 377h3v3h-3zM1469 377h3v3h-3zM1475 377h3v3h-3zM1481 377h3v3h-3zM1487 377h3v3h-3zM1494 377h3v3h-3zM1500 377h3v3h-3zM1506 377h3v3h-3zM1512 377h3v3h-3zM1518 377h3v3h-3zM1524 377h3v3h-3zM1530 377h3v3h-3zM1536 377h3v3h-3zM1542 377h3v3h-3zM1548 377h3v3h-3zM1554 377h3v3h-3zM1560 377h3v3h-3zM1566 377h3v3h-3zM1572 377h3v3h-3zM1578 377h3v3h-3zM1584 377h3v3h-3zM1590 377h3v3h-3zM1596 377h3v3h-3zM1602 377h3v3h-3zM1608 377h3v3h-3zM1615 377h3v3h-3zM1621 377h3v3h-3zM1627 377h3v3h-3zM1633 377h3v3h-3zM1639 377h3v3h-3zM1645 377h3v3h-3zM1651 377h3v3h-3zM1286 379h3v3h-3zM1292 379h3v3h-3zM1299 379h3v3h-3zM1305 379h3v3h-3zM1311 379h3v3h-3zM1317 379h3v3h-3zM1323 379h3v3h-3zM1329 379h3v3h-3zM1335 379h3v3h-3zM1341 379h3v3h-3zM1347 379h3v3h-3zM1353 379h3v3h-3zM1360 379h3v3h-3zM1366 379h3v3h-3zM1372 379h3v3h-3zM1378 379h3v3h-3zM1384 379h3v3h-3zM1390 379h3v3h-3zM1396 379h3v3h-3zM1402 379h3v3h-3zM1408 379h3v3h-3zM1414 379h3v3h-3zM1421 379h3v3h-3zM1427 379h3v3h-3zM1433 379h3v3h-3zM1439 379h3v3h-3zM1445 379h3v3h-3zM1451 379h3v3h-3zM1457 379h3v3h-3zM1463 379h3v3h-3zM1469 379h3v3h-3zM1475 379h3v3h-3zM1481 379h3v3h-3zM1488 379h3v3h-3zM1494 379h3v3h-3zM1500 379h3v3h-3zM1506 379h3v3h-3zM1512 379h3v3h-3zM1518 379h3v3h-3zM1524 379h3v3h-3zM1530 379h3v3h-3zM1536 379h3v3h-3zM1542 379h3v3h-3zM1549 379h3v3h-3zM1555 379h3v3h-3zM1561 379h3v3h-3zM1567 379h3v3h-3zM1573 379h3v3h-3zM1579 379h3v3h-3zM1585 379h3v3h-3zM1591 379h3v3h-3zM1597 379h3v3h-3zM1603 379h3v3h-3zM1610 379h3v3h-3zM1616 379h3v3h-3zM1622 379h3v3h-3zM1628 379h3v3h-3zM1634 379h3v3h-3zM1640 379h3v3h-3zM1646 379h3v3h-3zM1652 379h3v3h-3zM1285 382h3v3h-3zM1291 382h3v3h-3zM1297 382h3v3h-3zM1303 382h3v3h-3zM1310 382h3v3h-3zM1316 382h3v3h-3zM1322 382h3v3h-3zM1328 382h3v3h-3zM1334 382h3v3h-3zM1340 382h3v3h-3zM1346 382h3v3h-3zM1353 382h3v3h-3zM1359 382h3v3h-3zM1365 382h3v3h-3zM1371 382h3v3h-3zM1377 382h3v3h-3zM1383 382h3v3h-3zM1389 382h3v3h-3zM1396 382h3v3h-3zM1402 382h3v3h-3zM1408 382h3v3h-3zM1414 382h3v3h-3zM1420 382h3v3h-3zM1426 382h3v3h-3zM1432 382h3v3h-3zM1439 382h3v3h-3zM1445 382h3v3h-3zM1451 382h3v3h-3zM1457 382h3v3h-3zM1463 382h3v3h-3zM1469 382h3v3h-3zM1475 382h3v3h-3zM1482 382h3v3h-3zM1488 382h3v3h-3zM1494 382h3v3h-3zM1500 382h3v3h-3zM1506 382h3v3h-3zM1512 382h3v3h-3zM1518 382h3v3h-3zM1525 382h3v3h-3zM1531 382h3v3h-3zM1537 382h3v3h-3zM1543 382h3v3h-3zM1549 382h3v3h-3zM1555 382h3v3h-3zM1561 382h3v3h-3zM1568 382h3v3h-3zM1574 382h3v3h-3zM1580 382h3v3h-3zM1586 382h3v3h-3zM1592 382h3v3h-3zM1598 382h3v3h-3zM1604 382h3v3h-3zM1611 382h3v3h-3zM1617 382h3v3h-3zM1623 382h3v3h-3zM1629 382h3v3h-3zM1635 382h3v3h-3zM1641 382h3v3h-3zM1648 382h3v3h-3zM1654 382h3v3h-3zM1284 385h3v3h-3zM1290 385h3v3h-3zM1296 385h3v3h-3zM1302 385h3v3h-3zM1308 385h3v3h-3zM1314 385h3v3h-3zM1321 385h3v3h-3zM1327 385h3v3h-3zM1333 385h3v3h-3zM1339 385h3v3h-3zM1345 385h3v3h-3zM1352 385h3v3h-3zM1358 385h3v3h-3zM1364 385h3v3h-3zM1370 385h3v3h-3zM1376 385h3v3h-3zM1383 385h3v3h-3zM1389 385h3v3h-3zM1395 385h3v3h-3zM1401 385h3v3h-3zM1407 385h3v3h-3zM1414 385h3v3h-3zM1420 385h3v3h-3zM1426 385h3v3h-3zM1432 385h3v3h-3zM1438 385h3v3h-3zM1445 385h3v3h-3zM1451 385h3v3h-3zM1457 385h3v3h-3zM1463 385h3v3h-3zM1469 385h3v3h-3zM1475 385h3v3h-3zM1482 385h3v3h-3zM1488 385h3v3h-3zM1494 385h3v3h-3zM1500 385h3v3h-3zM1506 385h3v3h-3zM1513 385h3v3h-3zM1519 385h3v3h-3zM1525 385h3v3h-3zM1531 385h3v3h-3zM1537 385h3v3h-3zM1544 385h3v3h-3zM1550 385h3v3h-3zM1556 385h3v3h-3zM1562 385h3v3h-3zM1568 385h3v3h-3zM1575 385h3v3h-3zM1581 385h3v3h-3zM1587 385h3v3h-3zM1593 385h3v3h-3zM1599 385h3v3h-3zM1606 385h3v3h-3zM1612 385h3v3h-3zM1618 385h3v3h-3zM1624 385h3v3h-3zM1630 385h3v3h-3zM1637 385h3v3h-3zM1643 385h3v3h-3zM1649 385h3v3h-3zM1655 385h3v3h-3zM1282 388h3v3h-3zM1288 388h3v3h-3zM1295 388h3v3h-3zM1301 388h3v3h-3zM1307 388h3v3h-3zM1313 388h3v3h-3zM1320 388h3v3h-3zM1326 388h3v3h-3zM1332 388h3v3h-3zM1338 388h3v3h-3zM1344 388h3v3h-3zM1351 388h3v3h-3zM1357 388h3v3h-3zM1363 388h3v3h-3zM1369 388h3v3h-3zM1376 388h3v3h-3zM1382 388h3v3h-3zM1388 388h3v3h-3zM1394 388h3v3h-3zM1401 388h3v3h-3zM1407 388h3v3h-3zM1413 388h3v3h-3zM1419 388h3v3h-3zM1426 388h3v3h-3zM1432 388h3v3h-3zM1438 388h3v3h-3zM1444 388h3v3h-3zM1451 388h3v3h-3zM1457 388h3v3h-3zM1463 388h3v3h-3zM1469 388h3v3h-3zM1476 388h3v3h-3zM1482 388h3v3h-3zM1488 388h3v3h-3zM1494 388h3v3h-3zM1501 388h3v3h-3zM1507 388h3v3h-3zM1513 388h3v3h-3zM1519 388h3v3h-3zM1525 388h3v3h-3zM1532 388h3v3h-3zM1538 388h3v3h-3zM1544 388h3v3h-3zM1550 388h3v3h-3zM1557 388h3v3h-3zM1563 388h3v3h-3zM1569 388h3v3h-3zM1575 388h3v3h-3zM1582 388h3v3h-3zM1588 388h3v3h-3zM1594 388h3v3h-3zM1600 388h3v3h-3zM1607 388h3v3h-3zM1613 388h3v3h-3zM1619 388h3v3h-3zM1625 388h3v3h-3zM1632 388h3v3h-3zM1638 388h3v3h-3zM1644 388h3v3h-3zM1650 388h3v3h-3zM1657 388h3v3h-3zM1281 391h3v3h-3zM1287 391h3v3h-3zM1293 391h3v3h-3zM1299 391h3v3h-3zM1306 391h3v3h-3zM1312 391h3v3h-3zM1318 391h3v3h-3zM1325 391h3v3h-3zM1331 391h3v3h-3zM1337 391h3v3h-3zM1343 391h3v3h-3zM1350 391h3v3h-3zM1356 391h3v3h-3zM1362 391h3v3h-3zM1369 391h3v3h-3zM1375 391h3v3h-3zM1381 391h3v3h-3zM1388 391h3v3h-3zM1394 391h3v3h-3zM1400 391h3v3h-3zM1406 391h3v3h-3zM1413 391h3v3h-3zM1419 391h3v3h-3zM1425 391h3v3h-3zM1432 391h3v3h-3zM1438 391h3v3h-3zM1444 391h3v3h-3zM1450 391h3v3h-3zM1457 391h3v3h-3zM1463 391h3v3h-3zM1469 391h3v3h-3zM1476 391h3v3h-3zM1482 391h3v3h-3zM1488 391h3v3h-3zM1494 391h3v3h-3zM1501 391h3v3h-3zM1507 391h3v3h-3zM1513 391h3v3h-3zM1520 391h3v3h-3zM1526 391h3v3h-3zM1532 391h3v3h-3zM1539 391h3v3h-3zM1545 391h3v3h-3zM1551 391h3v3h-3zM1557 391h3v3h-3zM1564 391h3v3h-3zM1570 391h3v3h-3zM1576 391h3v3h-3zM1583 391h3v3h-3zM1589 391h3v3h-3zM1595 391h3v3h-3zM1601 391h3v3h-3zM1608 391h3v3h-3zM1614 391h3v3h-3zM1620 391h3v3h-3zM1627 391h3v3h-3zM1633 391h3v3h-3zM1639 391h3v3h-3zM1645 391h3v3h-3zM1652 391h3v3h-3zM1658 391h3v3h-3zM1279 394h3v3h-3zM1285 394h3v3h-3zM1292 394h3v3h-3zM1298 394h3v3h-3zM1304 394h3v3h-3zM1311 394h3v3h-3zM1317 394h3v3h-3zM1323 394h3v3h-3zM1330 394h3v3h-3zM1336 394h3v3h-3zM1342 394h3v3h-3zM1349 394h3v3h-3zM1355 394h3v3h-3zM1361 394h3v3h-3zM1368 394h3v3h-3zM1374 394h3v3h-3zM1381 394h3v3h-3zM1387 394h3v3h-3zM1393 394h3v3h-3zM1400 394h3v3h-3zM1406 394h3v3h-3zM1412 394h3v3h-3zM1419 394h3v3h-3zM1425 394h3v3h-3zM1431 394h3v3h-3zM1438 394h3v3h-3zM1444 394h3v3h-3zM1450 394h3v3h-3zM1457 394h3v3h-3zM1463 394h3v3h-3zM1469 394h3v3h-3zM1476 394h3v3h-3zM1482 394h3v3h-3zM1488 394h3v3h-3zM1495 394h3v3h-3zM1501 394h3v3h-3zM1507 394h3v3h-3zM1514 394h3v3h-3zM1520 394h3v3h-3zM1526 394h3v3h-3zM1533 394h3v3h-3zM1539 394h3v3h-3zM1545 394h3v3h-3zM1552 394h3v3h-3zM1558 394h3v3h-3zM1564 394h3v3h-3zM1571 394h3v3h-3zM1577 394h3v3h-3zM1583 394h3v3h-3zM1590 394h3v3h-3zM1596 394h3v3h-3zM1602 394h3v3h-3zM1609 394h3v3h-3zM1615 394h3v3h-3zM1621 394h3v3h-3zM1628 394h3v3h-3zM1634 394h3v3h-3zM1641 394h3v3h-3zM1647 394h3v3h-3zM1653 394h3v3h-3zM1660 394h3v3h-3zM1278 398h3v3h-3zM1284 398h3v3h-3zM1290 398h3v3h-3zM1297 398h3v3h-3zM1303 398h3v3h-3zM1309 398h3v3h-3zM1316 398h3v3h-3zM1322 398h3v3h-3zM1329 398h3v3h-3zM1335 398h3v3h-3zM1341 398h3v3h-3zM1348 398h3v3h-3zM1354 398h3v3h-3zM1361 398h3v3h-3zM1367 398h3v3h-3zM1373 398h3v3h-3zM1380 398h3v3h-3zM1386 398h3v3h-3zM1393 398h3v3h-3zM1399 398h3v3h-3zM1405 398h3v3h-3zM1412 398h3v3h-3zM1418 398h3v3h-3zM1425 398h3v3h-3zM1431 398h3v3h-3zM1437 398h3v3h-3zM1444 398h3v3h-3zM1450 398h3v3h-3zM1457 398h3v3h-3zM1463 398h3v3h-3zM1469 398h3v3h-3zM1476 398h3v3h-3zM1482 398h3v3h-3zM1488 398h3v3h-3zM1495 398h3v3h-3zM1501 398h3v3h-3zM1508 398h3v3h-3zM1514 398h3v3h-3zM1520 398h3v3h-3zM1527 398h3v3h-3zM1533 398h3v3h-3zM1540 398h3v3h-3zM1546 398h3v3h-3zM1552 398h3v3h-3zM1559 398h3v3h-3zM1565 398h3v3h-3zM1572 398h3v3h-3zM1578 398h3v3h-3zM1584 398h3v3h-3zM1591 398h3v3h-3zM1597 398h3v3h-3zM1604 398h3v3h-3zM1610 398h3v3h-3zM1616 398h3v3h-3zM1623 398h3v3h-3zM1629 398h3v3h-3zM1636 398h3v3h-3zM1642 398h3v3h-3zM1648 398h3v3h-3zM1655 398h3v3h-3zM1661 398h3v3h-3zM1276 401h3v3h-3zM1282 401h3v3h-3zM1289 401h3v3h-3zM1295 401h3v3h-3zM1302 401h3v3h-3zM1308 401h3v3h-3zM1315 401h3v3h-3zM1321 401h3v3h-3zM1328 401h3v3h-3zM1334 401h3v3h-3zM1340 401h3v3h-3zM1347 401h3v3h-3zM1353 401h3v3h-3zM1360 401h3v3h-3zM1366 401h3v3h-3zM1373 401h3v3h-3zM1379 401h3v3h-3zM1386 401h3v3h-3zM1392 401h3v3h-3zM1398 401h3v3h-3zM1405 401h3v3h-3zM1411 401h3v3h-3zM1418 401h3v3h-3zM1424 401h3v3h-3zM1431 401h3v3h-3zM1437 401h3v3h-3zM1444 401h3v3h-3zM1450 401h3v3h-3zM1456 401h3v3h-3zM1463 401h3v3h-3zM1469 401h3v3h-3zM1476 401h3v3h-3zM1482 401h3v3h-3zM1489 401h3v3h-3zM1495 401h3v3h-3zM1502 401h3v3h-3zM1508 401h3v3h-3zM1514 401h3v3h-3zM1521 401h3v3h-3zM1527 401h3v3h-3zM1534 401h3v3h-3zM1540 401h3v3h-3zM1547 401h3v3h-3zM1553 401h3v3h-3zM1560 401h3v3h-3zM1566 401h3v3h-3zM1572 401h3v3h-3zM1579 401h3v3h-3zM1585 401h3v3h-3zM1592 401h3v3h-3zM1598 401h3v3h-3zM1605 401h3v3h-3zM1611 401h3v3h-3zM1618 401h3v3h-3zM1624 401h3v3h-3zM1630 401h3v3h-3zM1637 401h3v3h-3zM1643 401h3v3h-3zM1650 401h3v3h-3zM1656 401h3v3h-3zM1663 401h3v3h-3zM1274 404h3v3h-3zM1281 404h3v3h-3zM1287 404h3v3h-3zM1294 404h3v3h-3zM1300 404h3v3h-3zM1307 404h3v3h-3zM1313 404h3v3h-3zM1320 404h3v3h-3zM1326 404h3v3h-3zM1333 404h3v3h-3zM1339 404h3v3h-3zM1346 404h3v3h-3zM1352 404h3v3h-3zM1359 404h3v3h-3zM1365 404h3v3h-3zM1372 404h3v3h-3zM1378 404h3v3h-3zM1385 404h3v3h-3zM1391 404h3v3h-3zM1398 404h3v3h-3zM1404 404h3v3h-3zM1411 404h3v3h-3zM1417 404h3v3h-3zM1424 404h3v3h-3zM1430 404h3v3h-3zM1437 404h3v3h-3zM1443 404h3v3h-3zM1450 404h3v3h-3zM1456 404h3v3h-3zM1463 404h3v3h-3zM1469 404h3v3h-3zM1476 404h3v3h-3zM1482 404h3v3h-3zM1489 404h3v3h-3zM1495 404h3v3h-3zM1502 404h3v3h-3zM1508 404h3v3h-3zM1515 404h3v3h-3zM1521 404h3v3h-3zM1528 404h3v3h-3zM1534 404h3v3h-3zM1541 404h3v3h-3zM1547 404h3v3h-3zM1554 404h3v3h-3zM1560 404h3v3h-3zM1567 404h3v3h-3zM1573 404h3v3h-3zM1580 404h3v3h-3zM1586 404h3v3h-3zM1593 404h3v3h-3zM1599 404h3v3h-3zM1606 404h3v3h-3zM1612 404h3v3h-3zM1619 404h3v3h-3zM1625 404h3v3h-3zM1632 404h3v3h-3zM1638 404h3v3h-3zM1645 404h3v3h-3zM1651 404h3v3h-3zM1658 404h3v3h-3zM1664 404h3v3h-3zM1273 407h3v3h-3zM1279 407h3v3h-3zM1286 407h3v3h-3zM1292 407h3v3h-3zM1299 407h3v3h-3zM1306 407h3v3h-3zM1312 407h3v3h-3zM1319 407h3v3h-3zM1325 407h3v3h-3zM1332 407h3v3h-3zM1338 407h3v3h-3zM1345 407h3v3h-3zM1351 407h3v3h-3zM1358 407h3v3h-3zM1364 407h3v3h-3zM1371 407h3v3h-3zM1378 407h3v3h-3zM1384 407h3v3h-3zM1391 407h3v3h-3zM1397 407h3v3h-3zM1404 407h3v3h-3zM1410 407h3v3h-3zM1417 407h3v3h-3zM1423 407h3v3h-3zM1430 407h3v3h-3zM1437 407h3v3h-3zM1443 407h3v3h-3zM1450 407h3v3h-3zM1456 407h3v3h-3zM1463 407h3v3h-3zM1469 407h3v3h-3zM1476 407h3v3h-3zM1482 407h3v3h-3zM1489 407h3v3h-3zM1496 407h3v3h-3zM1502 407h3v3h-3zM1509 407h3v3h-3zM1515 407h3v3h-3zM1522 407h3v3h-3zM1528 407h3v3h-3zM1535 407h3v3h-3zM1541 407h3v3h-3zM1548 407h3v3h-3zM1554 407h3v3h-3zM1561 407h3v3h-3zM1568 407h3v3h-3zM1574 407h3v3h-3zM1581 407h3v3h-3zM1587 407h3v3h-3zM1594 407h3v3h-3zM1600 407h3v3h-3zM1607 407h3v3h-3zM1613 407h3v3h-3zM1620 407h3v3h-3zM1627 407h3v3h-3zM1633 407h3v3h-3zM1640 407h3v3h-3zM1646 407h3v3h-3zM1653 407h3v3h-3zM1659 407h3v3h-3zM1666 407h3v3h-3zM1271 411h3v3h-3zM1278 411h3v3h-3zM1284 411h3v3h-3zM1291 411h3v3h-3zM1298 411h3v3h-3zM1304 411h3v3h-3zM1311 411h3v3h-3zM1317 411h3v3h-3zM1324 411h3v3h-3zM1331 411h3v3h-3zM1337 411h3v3h-3zM1344 411h3v3h-3zM1350 411h3v3h-3zM1357 411h3v3h-3zM1364 411h3v3h-3zM1370 411h3v3h-3zM1377 411h3v3h-3zM1383 411h3v3h-3zM1390 411h3v3h-3zM1397 411h3v3h-3zM1403 411h3v3h-3zM1410 411h3v3h-3zM1416 411h3v3h-3zM1423 411h3v3h-3zM1430 411h3v3h-3zM1436 411h3v3h-3zM1443 411h3v3h-3zM1449 411h3v3h-3zM1456 411h3v3h-3zM1463 411h3v3h-3zM1469 411h3v3h-3zM1476 411h3v3h-3zM1483 411h3v3h-3zM1489 411h3v3h-3zM1496 411h3v3h-3zM1502 411h3v3h-3zM1509 411h3v3h-3zM1516 411h3v3h-3zM1522 411h3v3h-3zM1529 411h3v3h-3zM1535 411h3v3h-3zM1542 411h3v3h-3zM1549 411h3v3h-3zM1555 411h3v3h-3zM1562 411h3v3h-3zM1568 411h3v3h-3zM1575 411h3v3h-3zM1582 411h3v3h-3zM1588 411h3v3h-3zM1595 411h3v3h-3zM1601 411h3v3h-3zM1608 411h3v3h-3zM1615 411h3v3h-3zM1621 411h3v3h-3zM1628 411h3v3h-3zM1634 411h3v3h-3zM1641 411h3v3h-3zM1648 411h3v3h-3zM1654 411h3v3h-3zM1661 411h3v3h-3zM1667 411h3v3h-3zM1269 414h3v3h-3zM1276 414h3v3h-3zM1283 414h3v3h-3zM1289 414h3v3h-3zM1296 414h3v3h-3zM1303 414h3v3h-3zM1309 414h3v3h-3zM1316 414h3v3h-3zM1323 414h3v3h-3zM1329 414h3v3h-3zM1336 414h3v3h-3zM1343 414h3v3h-3zM1349 414h3v3h-3zM1356 414h3v3h-3zM1363 414h3v3h-3zM1369 414h3v3h-3zM1376 414h3v3h-3zM1383 414h3v3h-3zM1389 414h3v3h-3zM1396 414h3v3h-3zM1403 414h3v3h-3zM1409 414h3v3h-3zM1416 414h3v3h-3zM1423 414h3v3h-3zM1429 414h3v3h-3zM1436 414h3v3h-3zM1443 414h3v3h-3zM1449 414h3v3h-3zM1456 414h3v3h-3zM1463 414h3v3h-3zM1469 414h3v3h-3zM1476 414h3v3h-3zM1483 414h3v3h-3zM1489 414h3v3h-3zM1496 414h3v3h-3zM1503 414h3v3h-3zM1509 414h3v3h-3zM1516 414h3v3h-3zM1523 414h3v3h-3zM1529 414h3v3h-3zM1536 414h3v3h-3zM1543 414h3v3h-3zM1549 414h3v3h-3zM1556 414h3v3h-3zM1563 414h3v3h-3zM1569 414h3v3h-3zM1576 414h3v3h-3zM1583 414h3v3h-3zM1589 414h3v3h-3zM1596 414h3v3h-3zM1603 414h3v3h-3zM1609 414h3v3h-3zM1616 414h3v3h-3zM1622 414h3v3h-3zM1629 414h3v3h-3zM1636 414h3v3h-3zM1642 414h3v3h-3zM1649 414h3v3h-3zM1656 414h3v3h-3zM1662 414h3v3h-3zM1669 414h3v3h-3zM1268 418h3v3h-3zM1275 418h3v3h-3zM1281 418h3v3h-3zM1288 418h3v3h-3zM1295 418h3v3h-3zM1301 418h3v3h-3zM1308 418h3v3h-3zM1315 418h3v3h-3zM1322 418h3v3h-3zM1328 418h3v3h-3zM1335 418h3v3h-3zM1342 418h3v3h-3zM1348 418h3v3h-3zM1355 418h3v3h-3zM1362 418h3v3h-3zM1369 418h3v3h-3zM1375 418h3v3h-3zM1382 418h3v3h-3zM1389 418h3v3h-3zM1395 418h3v3h-3zM1402 418h3v3h-3zM1409 418h3v3h-3zM1416 418h3v3h-3zM1422 418h3v3h-3zM1429 418h3v3h-3zM1436 418h3v3h-3zM1442 418h3v3h-3zM1449 418h3v3h-3zM1456 418h3v3h-3zM1463 418h3v3h-3zM1469 418h3v3h-3zM1476 418h3v3h-3zM1483 418h3v3h-3zM1489 418h3v3h-3zM1496 418h3v3h-3zM1503 418h3v3h-3zM1510 418h3v3h-3zM1516 418h3v3h-3zM1523 418h3v3h-3zM1530 418h3v3h-3zM1536 418h3v3h-3zM1543 418h3v3h-3zM1550 418h3v3h-3zM1557 418h3v3h-3zM1563 418h3v3h-3zM1570 418h3v3h-3zM1577 418h3v3h-3zM1583 418h3v3h-3zM1590 418h3v3h-3zM1597 418h3v3h-3zM1604 418h3v3h-3zM1610 418h3v3h-3zM1617 418h3v3h-3zM1624 418h3v3h-3zM1631 418h3v3h-3zM1637 418h3v3h-3zM1644 418h3v3h-3zM1651 418h3v3h-3zM1657 418h3v3h-3zM1664 418h3v3h-3zM1671 418h3v3h-3zM1266 421h3v3h-3zM1273 421h3v3h-3zM1280 421h3v3h-3zM1286 421h3v3h-3zM1293 421h3v3h-3zM1300 421h3v3h-3zM1307 421h3v3h-3zM1313 421h3v3h-3zM1320 421h3v3h-3zM1327 421h3v3h-3zM1334 421h3v3h-3zM1341 421h3v3h-3zM1347 421h3v3h-3zM1354 421h3v3h-3zM1361 421h3v3h-3zM1368 421h3v3h-3zM1374 421h3v3h-3zM1381 421h3v3h-3zM1388 421h3v3h-3zM1395 421h3v3h-3zM1402 421h3v3h-3zM1408 421h3v3h-3zM1415 421h3v3h-3zM1422 421h3v3h-3zM1429 421h3v3h-3zM1435 421h3v3h-3zM1442 421h3v3h-3zM1449 421h3v3h-3zM1456 421h3v3h-3zM1463 421h3v3h-3zM1469 421h3v3h-3zM1476 421h3v3h-3zM1483 421h3v3h-3zM1490 421h3v3h-3zM1496 421h3v3h-3zM1503 421h3v3h-3zM1510 421h3v3h-3zM1517 421h3v3h-3zM1523 421h3v3h-3zM1530 421h3v3h-3zM1537 421h3v3h-3zM1544 421h3v3h-3zM1551 421h3v3h-3zM1557 421h3v3h-3zM1564 421h3v3h-3zM1571 421h3v3h-3zM1578 421h3v3h-3zM1584 421h3v3h-3zM1591 421h3v3h-3zM1598 421h3v3h-3zM1605 421h3v3h-3zM1612 421h3v3h-3zM1618 421h3v3h-3zM1625 421h3v3h-3zM1632 421h3v3h-3zM1639 421h3v3h-3zM1645 421h3v3h-3zM1652 421h3v3h-3zM1659 421h3v3h-3zM1666 421h3v3h-3zM1673 421h3v3h-3zM1264 425h3v3h-3zM1271 425h3v3h-3zM1278 425h3v3h-3zM1285 425h3v3h-3zM1292 425h3v3h-3zM1298 425h3v3h-3zM1305 425h3v3h-3zM1312 425h3v3h-3zM1319 425h3v3h-3zM1326 425h3v3h-3zM1333 425h3v3h-3zM1339 425h3v3h-3zM1346 425h3v3h-3zM1353 425h3v3h-3zM1360 425h3v3h-3zM1367 425h3v3h-3zM1374 425h3v3h-3zM1380 425h3v3h-3zM1387 425h3v3h-3zM1394 425h3v3h-3zM1401 425h3v3h-3zM1408 425h3v3h-3zM1415 425h3v3h-3zM1421 425h3v3h-3zM1428 425h3v3h-3zM1435 425h3v3h-3zM1442 425h3v3h-3zM1449 425h3v3h-3zM1456 425h3v3h-3zM1462 425h3v3h-3zM1469 425h3v3h-3zM1476 425h3v3h-3zM1483 425h3v3h-3zM1490 425h3v3h-3zM1497 425h3v3h-3zM1503 425h3v3h-3zM1510 425h3v3h-3zM1517 425h3v3h-3zM1524 425h3v3h-3zM1531 425h3v3h-3zM1538 425h3v3h-3zM1544 425h3v3h-3zM1551 425h3v3h-3zM1558 425h3v3h-3zM1565 425h3v3h-3zM1572 425h3v3h-3zM1579 425h3v3h-3zM1585 425h3v3h-3zM1592 425h3v3h-3zM1599 425h3v3h-3zM1606 425h3v3h-3zM1613 425h3v3h-3zM1620 425h3v3h-3zM1626 425h3v3h-3zM1633 425h3v3h-3zM1640 425h3v3h-3zM1647 425h3v3h-3zM1654 425h3v3h-3zM1661 425h3v3h-3zM1667 425h3v3h-3zM1674 425h3v3h-3zM1263 428h3v3h-3zM1269 428h3v3h-3zM1276 428h3v3h-3zM1283 428h3v3h-3zM1290 428h3v3h-3zM1297 428h3v3h-3zM1304 428h3v3h-3zM1311 428h3v3h-3zM1318 428h3v3h-3zM1325 428h3v3h-3zM1331 428h3v3h-3zM1338 428h3v3h-3zM1345 428h3v3h-3zM1352 428h3v3h-3zM1359 428h3v3h-3zM1366 428h3v3h-3zM1373 428h3v3h-3zM1380 428h3v3h-3zM1387 428h3v3h-3zM1393 428h3v3h-3zM1400 428h3v3h-3zM1407 428h3v3h-3zM1414 428h3v3h-3zM1421 428h3v3h-3zM1428 428h3v3h-3zM1435 428h3v3h-3zM1442 428h3v3h-3zM1449 428h3v3h-3zM1456 428h3v3h-3zM1462 428h3v3h-3zM1469 428h3v3h-3zM1476 428h3v3h-3zM1483 428h3v3h-3zM1490 428h3v3h-3zM1497 428h3v3h-3zM1504 428h3v3h-3zM1511 428h3v3h-3zM1518 428h3v3h-3zM1524 428h3v3h-3zM1531 428h3v3h-3zM1538 428h3v3h-3zM1545 428h3v3h-3zM1552 428h3v3h-3zM1559 428h3v3h-3zM1566 428h3v3h-3zM1573 428h3v3h-3zM1580 428h3v3h-3zM1586 428h3v3h-3zM1593 428h3v3h-3zM1600 428h3v3h-3zM1607 428h3v3h-3zM1614 428h3v3h-3zM1621 428h3v3h-3zM1628 428h3v3h-3zM1635 428h3v3h-3zM1642 428h3v3h-3zM1648 428h3v3h-3zM1655 428h3v3h-3zM1662 428h3v3h-3zM1669 428h3v3h-3zM1676 428h3v3h-3zM1261 432h3v3h-3zM1268 432h3v3h-3zM1275 432h3v3h-3zM1282 432h3v3h-3zM1289 432h3v3h-3zM1295 432h3v3h-3zM1302 432h3v3h-3zM1309 432h3v3h-3zM1316 432h3v3h-3zM1323 432h3v3h-3zM1330 432h3v3h-3zM1337 432h3v3h-3zM1344 432h3v3h-3zM1351 432h3v3h-3zM1358 432h3v3h-3zM1365 432h3v3h-3zM1372 432h3v3h-3zM1379 432h3v3h-3zM1386 432h3v3h-3zM1393 432h3v3h-3zM1400 432h3v3h-3zM1407 432h3v3h-3zM1414 432h3v3h-3zM1421 432h3v3h-3zM1428 432h3v3h-3zM1435 432h3v3h-3zM1441 432h3v3h-3zM1448 432h3v3h-3zM1455 432h3v3h-3zM1462 432h3v3h-3zM1469 432h3v3h-3zM1476 432h3v3h-3zM1483 432h3v3h-3zM1490 432h3v3h-3zM1497 432h3v3h-3zM1504 432h3v3h-3zM1511 432h3v3h-3zM1518 432h3v3h-3zM1525 432h3v3h-3zM1532 432h3v3h-3zM1539 432h3v3h-3zM1546 432h3v3h-3zM1553 432h3v3h-3zM1560 432h3v3h-3zM1567 432h3v3h-3zM1574 432h3v3h-3zM1581 432h3v3h-3zM1587 432h3v3h-3zM1594 432h3v3h-3zM1601 432h3v3h-3zM1608 432h3v3h-3zM1615 432h3v3h-3zM1622 432h3v3h-3zM1629 432h3v3h-3zM1636 432h3v3h-3zM1643 432h3v3h-3zM1650 432h3v3h-3zM1657 432h3v3h-3zM1664 432h3v3h-3zM1671 432h3v3h-3zM1678 432h3v3h-3zM1259 436h3v3h-3zM1266 436h3v3h-3zM1273 436h3v3h-3zM1280 436h3v3h-3zM1287 436h3v3h-3zM1294 436h3v3h-3zM1301 436h3v3h-3zM1308 436h3v3h-3zM1315 436h3v3h-3zM1322 436h3v3h-3zM1329 436h3v3h-3zM1336 436h3v3h-3zM1343 436h3v3h-3zM1350 436h3v3h-3zM1357 436h3v3h-3zM1364 436h3v3h-3zM1371 436h3v3h-3zM1378 436h3v3h-3zM1385 436h3v3h-3zM1392 436h3v3h-3zM1399 436h3v3h-3zM1406 436h3v3h-3zM1413 436h3v3h-3zM1420 436h3v3h-3zM1427 436h3v3h-3zM1434 436h3v3h-3zM1441 436h3v3h-3zM1448 436h3v3h-3zM1455 436h3v3h-3zM1462 436h3v3h-3zM1469 436h3v3h-3zM1476 436h3v3h-3zM1483 436h3v3h-3zM1490 436h3v3h-3zM1497 436h3v3h-3zM1504 436h3v3h-3zM1511 436h3v3h-3zM1518 436h3v3h-3zM1525 436h3v3h-3zM1532 436h3v3h-3zM1539 436h3v3h-3zM1546 436h3v3h-3zM1553 436h3v3h-3zM1560 436h3v3h-3zM1567 436h3v3h-3zM1575 436h3v3h-3zM1582 436h3v3h-3zM1589 436h3v3h-3zM1596 436h3v3h-3zM1603 436h3v3h-3zM1610 436h3v3h-3zM1617 436h3v3h-3zM1624 436h3v3h-3zM1631 436h3v3h-3zM1638 436h3v3h-3zM1645 436h3v3h-3zM1652 436h3v3h-3zM1659 436h3v3h-3zM1666 436h3v3h-3zM1673 436h3v3h-3zM1680 436h3v3h-3zM1257 440h3v3h-3zM1264 440h3v3h-3zM1271 440h3v3h-3zM1278 440h3v3h-3zM1285 440h3v3h-3zM1292 440h3v3h-3zM1299 440h3v3h-3zM1307 440h3v3h-3zM1314 440h3v3h-3zM1321 440h3v3h-3zM1328 440h3v3h-3zM1335 440h3v3h-3zM1342 440h3v3h-3zM1349 440h3v3h-3zM1356 440h3v3h-3zM1363 440h3v3h-3zM1370 440h3v3h-3zM1377 440h3v3h-3zM1384 440h3v3h-3zM1391 440h3v3h-3zM1399 440h3v3h-3zM1406 440h3v3h-3zM1413 440h3v3h-3zM1420 440h3v3h-3zM1427 440h3v3h-3zM1434 440h3v3h-3zM1441 440h3v3h-3zM1448 440h3v3h-3zM1455 440h3v3h-3zM1462 440h3v3h-3zM1469 440h3v3h-3zM1476 440h3v3h-3zM1483 440h3v3h-3zM1491 440h3v3h-3zM1498 440h3v3h-3zM1505 440h3v3h-3zM1512 440h3v3h-3zM1519 440h3v3h-3zM1526 440h3v3h-3zM1533 440h3v3h-3zM1540 440h3v3h-3zM1547 440h3v3h-3zM1554 440h3v3h-3zM1561 440h3v3h-3zM1568 440h3v3h-3zM1575 440h3v3h-3zM1583 440h3v3h-3zM1590 440h3v3h-3zM1597 440h3v3h-3zM1604 440h3v3h-3zM1611 440h3v3h-3zM1618 440h3v3h-3zM1625 440h3v3h-3zM1632 440h3v3h-3zM1639 440h3v3h-3zM1646 440h3v3h-3zM1653 440h3v3h-3zM1660 440h3v3h-3zM1667 440h3v3h-3zM1675 440h3v3h-3zM1682 440h3v3h-3zM1255 444h3v3h-3zM1262 444h3v3h-3zM1269 444h3v3h-3zM1277 444h3v3h-3zM1284 444h3v3h-3zM1291 444h3v3h-3zM1298 444h3v3h-3zM1305 444h3v3h-3zM1312 444h3v3h-3zM1319 444h3v3h-3zM1327 444h3v3h-3zM1334 444h3v3h-3zM1341 444h3v3h-3zM1348 444h3v3h-3zM1355 444h3v3h-3zM1362 444h3v3h-3zM1369 444h3v3h-3zM1376 444h3v3h-3zM1384 444h3v3h-3zM1391 444h3v3h-3zM1398 444h3v3h-3zM1405 444h3v3h-3zM1412 444h3v3h-3zM1419 444h3v3h-3zM1426 444h3v3h-3zM1434 444h3v3h-3zM1441 444h3v3h-3zM1448 444h3v3h-3zM1455 444h3v3h-3zM1462 444h3v3h-3zM1469 444h3v3h-3zM1476 444h3v3h-3zM1484 444h3v3h-3zM1491 444h3v3h-3zM1498 444h3v3h-3zM1505 444h3v3h-3zM1512 444h3v3h-3zM1519 444h3v3h-3zM1526 444h3v3h-3zM1534 444h3v3h-3zM1541 444h3v3h-3zM1548 444h3v3h-3zM1555 444h3v3h-3zM1562 444h3v3h-3zM1569 444h3v3h-3zM1576 444h3v3h-3zM1584 444h3v3h-3zM1591 444h3v3h-3zM1598 444h3v3h-3zM1605 444h3v3h-3zM1612 444h3v3h-3zM1619 444h3v3h-3zM1626 444h3v3h-3zM1634 444h3v3h-3zM1641 444h3v3h-3zM1648 444h3v3h-3zM1655 444h3v3h-3zM1662 444h3v3h-3zM1669 444h3v3h-3zM1676 444h3v3h-3zM1683 444h3v3h-3zM1253 448h3v3h-3zM1260 448h3v3h-3zM1268 448h3v3h-3zM1275 448h3v3h-3zM1282 448h3v3h-3zM1289 448h3v3h-3zM1296 448h3v3h-3zM1304 448h3v3h-3zM1311 448h3v3h-3zM1318 448h3v3h-3zM1325 448h3v3h-3zM1332 448h3v3h-3zM1340 448h3v3h-3zM1347 448h3v3h-3zM1354 448h3v3h-3zM1361 448h3v3h-3zM1368 448h3v3h-3zM1376 448h3v3h-3zM1383 448h3v3h-3zM1390 448h3v3h-3zM1397 448h3v3h-3zM1404 448h3v3h-3zM1412 448h3v3h-3zM1419 448h3v3h-3zM1426 448h3v3h-3zM1433 448h3v3h-3zM1440 448h3v3h-3zM1448 448h3v3h-3zM1455 448h3v3h-3zM1462 448h3v3h-3zM1469 448h3v3h-3zM1477 448h3v3h-3zM1484 448h3v3h-3zM1491 448h3v3h-3zM1498 448h3v3h-3zM1505 448h3v3h-3zM1513 448h3v3h-3zM1520 448h3v3h-3zM1527 448h3v3h-3zM1534 448h3v3h-3zM1541 448h3v3h-3zM1549 448h3v3h-3zM1556 448h3v3h-3zM1563 448h3v3h-3zM1570 448h3v3h-3zM1577 448h3v3h-3zM1585 448h3v3h-3zM1592 448h3v3h-3zM1599 448h3v3h-3zM1606 448h3v3h-3zM1613 448h3v3h-3zM1621 448h3v3h-3zM1628 448h3v3h-3zM1635 448h3v3h-3zM1642 448h3v3h-3zM1649 448h3v3h-3zM1657 448h3v3h-3zM1664 448h3v3h-3zM1671 448h3v3h-3zM1678 448h3v3h-3zM1685 448h3v3h-3zM1251 452h3v3h-3zM1258 452h3v3h-3zM1266 452h3v3h-3zM1273 452h3v3h-3zM1280 452h3v3h-3zM1288 452h3v3h-3zM1295 452h3v3h-3zM1302 452h3v3h-3zM1309 452h3v3h-3zM1317 452h3v3h-3zM1324 452h3v3h-3zM1331 452h3v3h-3zM1338 452h3v3h-3zM1346 452h3v3h-3zM1353 452h3v3h-3zM1360 452h3v3h-3zM1368 452h3v3h-3zM1375 452h3v3h-3zM1382 452h3v3h-3zM1389 452h3v3h-3zM1397 452h3v3h-3zM1404 452h3v3h-3zM1411 452h3v3h-3zM1418 452h3v3h-3zM1426 452h3v3h-3zM1433 452h3v3h-3zM1440 452h3v3h-3zM1447 452h3v3h-3zM1455 452h3v3h-3zM1462 452h3v3h-3zM1469 452h3v3h-3zM1477 452h3v3h-3zM1484 452h3v3h-3zM1491 452h3v3h-3zM1498 452h3v3h-3zM1506 452h3v3h-3zM1513 452h3v3h-3zM1520 452h3v3h-3zM1527 452h3v3h-3zM1535 452h3v3h-3zM1542 452h3v3h-3zM1549 452h3v3h-3zM1557 452h3v3h-3zM1564 452h3v3h-3zM1571 452h3v3h-3zM1578 452h3v3h-3zM1586 452h3v3h-3zM1593 452h3v3h-3zM1600 452h3v3h-3zM1607 452h3v3h-3zM1615 452h3v3h-3zM1622 452h3v3h-3zM1629 452h3v3h-3zM1637 452h3v3h-3zM1644 452h3v3h-3zM1651 452h3v3h-3zM1658 452h3v3h-3zM1666 452h3v3h-3zM1673 452h3v3h-3zM1680 452h3v3h-3zM1687 452h3v3h-3zM1249 456h3v3h-3zM1257 456h3v3h-3zM1264 456h3v3h-3zM1271 456h3v3h-3zM1279 456h3v3h-3zM1286 456h3v3h-3zM1293 456h3v3h-3zM1301 456h3v3h-3zM1308 456h3v3h-3zM1315 456h3v3h-3zM1323 456h3v3h-3zM1330 456h3v3h-3zM1337 456h3v3h-3zM1345 456h3v3h-3zM1352 456h3v3h-3zM1359 456h3v3h-3zM1367 456h3v3h-3zM1374 456h3v3h-3zM1381 456h3v3h-3zM1389 456h3v3h-3zM1396 456h3v3h-3zM1403 456h3v3h-3zM1411 456h3v3h-3zM1418 456h3v3h-3zM1425 456h3v3h-3zM1433 456h3v3h-3zM1440 456h3v3h-3zM1447 456h3v3h-3zM1455 456h3v3h-3zM1462 456h3v3h-3zM1469 456h3v3h-3zM1477 456h3v3h-3zM1484 456h3v3h-3zM1491 456h3v3h-3zM1499 456h3v3h-3zM1506 456h3v3h-3zM1513 456h3v3h-3zM1521 456h3v3h-3zM1528 456h3v3h-3zM1535 456h3v3h-3zM1543 456h3v3h-3zM1550 456h3v3h-3zM1557 456h3v3h-3zM1565 456h3v3h-3zM1572 456h3v3h-3zM1579 456h3v3h-3zM1587 456h3v3h-3zM1594 456h3v3h-3zM1601 456h3v3h-3zM1609 456h3v3h-3zM1616 456h3v3h-3zM1623 456h3v3h-3zM1631 456h3v3h-3zM1638 456h3v3h-3zM1645 456h3v3h-3zM1653 456h3v3h-3zM1660 456h3v3h-3zM1667 456h3v3h-3zM1675 456h3v3h-3zM1682 456h3v3h-3zM1689 456h3v3h-3zM1247 460h3v3h-3zM1255 460h3v3h-3zM1262 460h3v3h-3zM1269 460h3v3h-3zM1277 460h3v3h-3zM1284 460h3v3h-3zM1292 460h3v3h-3zM1299 460h3v3h-3zM1306 460h3v3h-3zM1314 460h3v3h-3zM1321 460h3v3h-3zM1329 460h3v3h-3zM1336 460h3v3h-3zM1343 460h3v3h-3zM1351 460h3v3h-3zM1358 460h3v3h-3zM1366 460h3v3h-3zM1373 460h3v3h-3zM1380 460h3v3h-3zM1388 460h3v3h-3zM1395 460h3v3h-3zM1403 460h3v3h-3zM1410 460h3v3h-3zM1417 460h3v3h-3zM1425 460h3v3h-3zM1432 460h3v3h-3zM1440 460h3v3h-3zM1447 460h3v3h-3zM1454 460h3v3h-3zM1462 460h3v3h-3zM1469 460h3v3h-3zM1477 460h3v3h-3zM1484 460h3v3h-3zM1492 460h3v3h-3zM1499 460h3v3h-3zM1506 460h3v3h-3zM1514 460h3v3h-3zM1521 460h3v3h-3zM1529 460h3v3h-3zM1536 460h3v3h-3zM1543 460h3v3h-3zM1551 460h3v3h-3zM1558 460h3v3h-3zM1566 460h3v3h-3zM1573 460h3v3h-3zM1580 460h3v3h-3zM1588 460h3v3h-3zM1595 460h3v3h-3zM1603 460h3v3h-3zM1610 460h3v3h-3zM1617 460h3v3h-3zM1625 460h3v3h-3zM1632 460h3v3h-3zM1640 460h3v3h-3zM1647 460h3v3h-3zM1654 460h3v3h-3zM1662 460h3v3h-3zM1669 460h3v3h-3zM1677 460h3v3h-3zM1684 460h3v3h-3zM1691 460h3v3h-3zM1245 464h3v3h-3zM1252 464h3v3h-3zM1260 464h3v3h-3zM1267 464h3v3h-3zM1275 464h3v3h-3zM1282 464h3v3h-3zM1290 464h3v3h-3zM1297 464h3v3h-3zM1305 464h3v3h-3zM1312 464h3v3h-3zM1320 464h3v3h-3zM1327 464h3v3h-3zM1335 464h3v3h-3zM1342 464h3v3h-3zM1350 464h3v3h-3zM1357 464h3v3h-3zM1365 464h3v3h-3zM1372 464h3v3h-3zM1380 464h3v3h-3zM1387 464h3v3h-3zM1395 464h3v3h-3zM1402 464h3v3h-3zM1409 464h3v3h-3zM1417 464h3v3h-3zM1424 464h3v3h-3zM1432 464h3v3h-3zM1439 464h3v3h-3zM1447 464h3v3h-3zM1454 464h3v3h-3zM1462 464h3v3h-3zM1469 464h3v3h-3zM1477 464h3v3h-3zM1484 464h3v3h-3zM1492 464h3v3h-3zM1499 464h3v3h-3zM1507 464h3v3h-3zM1514 464h3v3h-3zM1522 464h3v3h-3zM1529 464h3v3h-3zM1537 464h3v3h-3zM1544 464h3v3h-3zM1552 464h3v3h-3zM1559 464h3v3h-3zM1566 464h3v3h-3zM1574 464h3v3h-3zM1581 464h3v3h-3zM1589 464h3v3h-3zM1596 464h3v3h-3zM1604 464h3v3h-3zM1611 464h3v3h-3zM1619 464h3v3h-3zM1626 464h3v3h-3zM1634 464h3v3h-3zM1641 464h3v3h-3zM1649 464h3v3h-3zM1656 464h3v3h-3zM1664 464h3v3h-3zM1671 464h3v3h-3zM1679 464h3v3h-3zM1686 464h3v3h-3zM1694 464h3v3h-3zM1243 469h3v3h-3zM1250 469h3v3h-3zM1258 469h3v3h-3zM1266 469h3v3h-3zM1273 469h3v3h-3zM1281 469h3v3h-3zM1288 469h3v3h-3zM1296 469h3v3h-3zM1303 469h3v3h-3zM1311 469h3v3h-3zM1318 469h3v3h-3zM1326 469h3v3h-3zM1333 469h3v3h-3zM1341 469h3v3h-3zM1349 469h3v3h-3zM1356 469h3v3h-3zM1364 469h3v3h-3zM1371 469h3v3h-3zM1379 469h3v3h-3zM1386 469h3v3h-3zM1394 469h3v3h-3zM1401 469h3v3h-3zM1409 469h3v3h-3zM1416 469h3v3h-3zM1424 469h3v3h-3zM1432 469h3v3h-3zM1439 469h3v3h-3zM1447 469h3v3h-3zM1454 469h3v3h-3zM1462 469h3v3h-3zM1469 469h3v3h-3zM1477 469h3v3h-3zM1484 469h3v3h-3zM1492 469h3v3h-3zM1499 469h3v3h-3zM1507 469h3v3h-3zM1515 469h3v3h-3zM1522 469h3v3h-3zM1530 469h3v3h-3zM1537 469h3v3h-3zM1545 469h3v3h-3zM1552 469h3v3h-3zM1560 469h3v3h-3zM1567 469h3v3h-3zM1575 469h3v3h-3zM1583 469h3v3h-3zM1590 469h3v3h-3zM1598 469h3v3h-3zM1605 469h3v3h-3zM1613 469h3v3h-3zM1620 469h3v3h-3zM1628 469h3v3h-3zM1635 469h3v3h-3zM1643 469h3v3h-3zM1650 469h3v3h-3zM1658 469h3v3h-3zM1666 469h3v3h-3zM1673 469h3v3h-3zM1681 469h3v3h-3zM1688 469h3v3h-3zM1696 469h3v3h-3zM1241 473h3v3h-3zM1248 473h3v3h-3zM1256 473h3v3h-3zM1264 473h3v3h-3zM1271 473h3v3h-3zM1279 473h3v3h-3zM1286 473h3v3h-3zM1294 473h3v3h-3zM1302 473h3v3h-3zM1309 473h3v3h-3zM1317 473h3v3h-3zM1325 473h3v3h-3zM1332 473h3v3h-3zM1340 473h3v3h-3zM1347 473h3v3h-3zM1355 473h3v3h-3zM1363 473h3v3h-3zM1370 473h3v3h-3zM1378 473h3v3h-3zM1385 473h3v3h-3zM1393 473h3v3h-3zM1401 473h3v3h-3zM1408 473h3v3h-3zM1416 473h3v3h-3zM1424 473h3v3h-3zM1431 473h3v3h-3zM1439 473h3v3h-3zM1446 473h3v3h-3zM1454 473h3v3h-3zM1462 473h3v3h-3zM1469 473h3v3h-3zM1477 473h3v3h-3zM1485 473h3v3h-3zM1492 473h3v3h-3zM1500 473h3v3h-3zM1507 473h3v3h-3zM1515 473h3v3h-3zM1523 473h3v3h-3zM1530 473h3v3h-3zM1538 473h3v3h-3zM1545 473h3v3h-3zM1553 473h3v3h-3zM1561 473h3v3h-3zM1568 473h3v3h-3zM1576 473h3v3h-3zM1584 473h3v3h-3zM1591 473h3v3h-3zM1599 473h3v3h-3zM1606 473h3v3h-3zM1614 473h3v3h-3zM1622 473h3v3h-3zM1629 473h3v3h-3zM1637 473h3v3h-3zM1645 473h3v3h-3zM1652 473h3v3h-3zM1660 473h3v3h-3zM1667 473h3v3h-3zM1675 473h3v3h-3zM1683 473h3v3h-3zM1690 473h3v3h-3zM1698 473h3v3h-3zM1239 478h3v3h-3zM1246 478h3v3h-3zM1254 478h3v3h-3zM1262 478h3v3h-3zM1269 478h3v3h-3zM1277 478h3v3h-3zM1285 478h3v3h-3zM1292 478h3v3h-3zM1300 478h3v3h-3zM1308 478h3v3h-3zM1315 478h3v3h-3zM1323 478h3v3h-3zM1331 478h3v3h-3zM1339 478h3v3h-3zM1346 478h3v3h-3zM1354 478h3v3h-3zM1362 478h3v3h-3zM1369 478h3v3h-3zM1377 478h3v3h-3zM1385 478h3v3h-3zM1392 478h3v3h-3zM1400 478h3v3h-3zM1408 478h3v3h-3zM1415 478h3v3h-3zM1423 478h3v3h-3zM1431 478h3v3h-3zM1439 478h3v3h-3zM1446 478h3v3h-3zM1454 478h3v3h-3zM1462 478h3v3h-3zM1469 478h3v3h-3zM1477 478h3v3h-3zM1485 478h3v3h-3zM1492 478h3v3h-3zM1500 478h3v3h-3zM1508 478h3v3h-3zM1515 478h3v3h-3zM1523 478h3v3h-3zM1531 478h3v3h-3zM1539 478h3v3h-3zM1546 478h3v3h-3zM1554 478h3v3h-3zM1562 478h3v3h-3zM1569 478h3v3h-3zM1577 478h3v3h-3zM1585 478h3v3h-3zM1592 478h3v3h-3zM1600 478h3v3h-3zM1608 478h3v3h-3zM1615 478h3v3h-3zM1623 478h3v3h-3zM1631 478h3v3h-3zM1639 478h3v3h-3zM1646 478h3v3h-3zM1654 478h3v3h-3zM1662 478h3v3h-3zM1669 478h3v3h-3zM1677 478h3v3h-3zM1685 478h3v3h-3zM1692 478h3v3h-3zM1700 478h3v3h-3zM1236 482h3v3h-3zM1244 482h3v3h-3zM1252 482h3v3h-3zM1260 482h3v3h-3zM1267 482h3v3h-3zM1275 482h3v3h-3zM1283 482h3v3h-3zM1291 482h3v3h-3zM1298 482h3v3h-3zM1306 482h3v3h-3zM1314 482h3v3h-3zM1322 482h3v3h-3zM1329 482h3v3h-3zM1337 482h3v3h-3zM1345 482h3v3h-3zM1353 482h3v3h-3zM1361 482h3v3h-3zM1368 482h3v3h-3zM1376 482h3v3h-3zM1384 482h3v3h-3zM1392 482h3v3h-3zM1399 482h3v3h-3zM1407 482h3v3h-3zM1415 482h3v3h-3zM1423 482h3v3h-3zM1430 482h3v3h-3zM1438 482h3v3h-3zM1446 482h3v3h-3zM1454 482h3v3h-3zM1462 482h3v3h-3zM1469 482h3v3h-3zM1477 482h3v3h-3zM1485 482h3v3h-3zM1493 482h3v3h-3zM1500 482h3v3h-3zM1508 482h3v3h-3zM1516 482h3v3h-3zM1524 482h3v3h-3zM1531 482h3v3h-3zM1539 482h3v3h-3zM1547 482h3v3h-3zM1555 482h3v3h-3zM1563 482h3v3h-3zM1570 482h3v3h-3zM1578 482h3v3h-3zM1586 482h3v3h-3zM1594 482h3v3h-3zM1601 482h3v3h-3zM1609 482h3v3h-3zM1617 482h3v3h-3zM1625 482h3v3h-3zM1632 482h3v3h-3zM1640 482h3v3h-3zM1648 482h3v3h-3zM1656 482h3v3h-3zM1664 482h3v3h-3zM1671 482h3v3h-3zM1679 482h3v3h-3zM1687 482h3v3h-3zM1695 482h3v3h-3zM1702 482h3v3h-3zM1234 487h3v3h-3zM1242 487h3v3h-3zM1250 487h3v3h-3zM1257 487h3v3h-3zM1265 487h3v3h-3zM1273 487h3v3h-3zM1281 487h3v3h-3zM1289 487h3v3h-3zM1297 487h3v3h-3zM1305 487h3v3h-3zM1312 487h3v3h-3zM1320 487h3v3h-3zM1328 487h3v3h-3zM1336 487h3v3h-3zM1344 487h3v3h-3zM1352 487h3v3h-3zM1359 487h3v3h-3zM1367 487h3v3h-3zM1375 487h3v3h-3zM1383 487h3v3h-3zM1391 487h3v3h-3zM1399 487h3v3h-3zM1407 487h3v3h-3zM1414 487h3v3h-3zM1422 487h3v3h-3zM1430 487h3v3h-3zM1438 487h3v3h-3zM1446 487h3v3h-3zM1454 487h3v3h-3zM1461 487h3v3h-3zM1469 487h3v3h-3zM1477 487h3v3h-3zM1485 487h3v3h-3zM1493 487h3v3h-3zM1501 487h3v3h-3zM1509 487h3v3h-3zM1516 487h3v3h-3zM1524 487h3v3h-3zM1532 487h3v3h-3zM1540 487h3v3h-3zM1548 487h3v3h-3zM1556 487h3v3h-3zM1563 487h3v3h-3zM1571 487h3v3h-3zM1579 487h3v3h-3zM1587 487h3v3h-3zM1595 487h3v3h-3zM1603 487h3v3h-3zM1611 487h3v3h-3zM1618 487h3v3h-3zM1626 487h3v3h-3zM1634 487h3v3h-3zM1642 487h3v3h-3zM1650 487h3v3h-3zM1658 487h3v3h-3zM1665 487h3v3h-3zM1673 487h3v3h-3zM1681 487h3v3h-3zM1689 487h3v3h-3zM1697 487h3v3h-3zM1705 487h3v3h-3zM1232 492h3v3h-3zM1240 492h3v3h-3zM1247 492h3v3h-3zM1255 492h3v3h-3zM1263 492h3v3h-3zM1271 492h3v3h-3zM1279 492h3v3h-3zM1287 492h3v3h-3zM1295 492h3v3h-3zM1303 492h3v3h-3zM1311 492h3v3h-3zM1319 492h3v3h-3zM1327 492h3v3h-3zM1335 492h3v3h-3zM1343 492h3v3h-3zM1350 492h3v3h-3zM1358 492h3v3h-3zM1366 492h3v3h-3zM1374 492h3v3h-3zM1382 492h3v3h-3zM1390 492h3v3h-3zM1398 492h3v3h-3zM1406 492h3v3h-3zM1414 492h3v3h-3zM1422 492h3v3h-3zM1430 492h3v3h-3zM1438 492h3v3h-3zM1446 492h3v3h-3zM1453 492h3v3h-3zM1461 492h3v3h-3zM1469 492h3v3h-3zM1477 492h3v3h-3zM1485 492h3v3h-3zM1493 492h3v3h-3zM1501 492h3v3h-3zM1509 492h3v3h-3zM1517 492h3v3h-3zM1525 492h3v3h-3zM1533 492h3v3h-3zM1541 492h3v3h-3zM1549 492h3v3h-3zM1556 492h3v3h-3zM1564 492h3v3h-3zM1572 492h3v3h-3zM1580 492h3v3h-3zM1588 492h3v3h-3zM1596 492h3v3h-3zM1604 492h3v3h-3zM1612 492h3v3h-3zM1620 492h3v3h-3zM1628 492h3v3h-3zM1636 492h3v3h-3zM1644 492h3v3h-3zM1652 492h3v3h-3zM1659 492h3v3h-3zM1667 492h3v3h-3zM1675 492h3v3h-3zM1683 492h3v3h-3zM1691 492h3v3h-3zM1699 492h3v3h-3zM1707 492h3v3h-3zM1229 497h3v3h-3zM1237 497h3v3h-3zM1245 497h3v3h-3zM1253 497h3v3h-3zM1261 497h3v3h-3zM1269 497h3v3h-3zM1277 497h3v3h-3zM1285 497h3v3h-3zM1293 497h3v3h-3zM1301 497h3v3h-3zM1309 497h3v3h-3zM1317 497h3v3h-3zM1325 497h3v3h-3zM1333 497h3v3h-3zM1341 497h3v3h-3zM1349 497h3v3h-3zM1357 497h3v3h-3zM1365 497h3v3h-3zM1373 497h3v3h-3zM1381 497h3v3h-3zM1389 497h3v3h-3zM1397 497h3v3h-3zM1405 497h3v3h-3zM1413 497h3v3h-3zM1421 497h3v3h-3zM1429 497h3v3h-3zM1437 497h3v3h-3zM1445 497h3v3h-3zM1453 497h3v3h-3zM1461 497h3v3h-3zM1469 497h3v3h-3zM1477 497h3v3h-3zM1485 497h3v3h-3zM1493 497h3v3h-3zM1501 497h3v3h-3zM1509 497h3v3h-3zM1517 497h3v3h-3zM1525 497h3v3h-3zM1533 497h3v3h-3zM1541 497h3v3h-3zM1549 497h3v3h-3zM1557 497h3v3h-3zM1565 497h3v3h-3zM1573 497h3v3h-3zM1581 497h3v3h-3zM1589 497h3v3h-3zM1597 497h3v3h-3zM1605 497h3v3h-3zM1613 497h3v3h-3zM1621 497h3v3h-3zM1629 497h3v3h-3zM1637 497h3v3h-3zM1645 497h3v3h-3zM1653 497h3v3h-3zM1661 497h3v3h-3zM1669 497h3v3h-3zM1677 497h3v3h-3zM1685 497h3v3h-3zM1693 497h3v3h-3zM1701 497h3v3h-3zM1709 497h3v3h-3zM1227 502h3v3h-3zM1235 502h3v3h-3zM1243 502h3v3h-3zM1251 502h3v3h-3zM1259 502h3v3h-3zM1267 502h3v3h-3zM1275 502h3v3h-3zM1283 502h3v3h-3zM1291 502h3v3h-3zM1300 502h3v3h-3zM1308 502h3v3h-3zM1316 502h3v3h-3zM1324 502h3v3h-3zM1332 502h3v3h-3zM1340 502h3v3h-3zM1348 502h3v3h-3zM1356 502h3v3h-3zM1364 502h3v3h-3zM1372 502h3v3h-3zM1380 502h3v3h-3zM1388 502h3v3h-3zM1397 502h3v3h-3zM1405 502h3v3h-3zM1413 502h3v3h-3zM1421 502h3v3h-3zM1429 502h3v3h-3zM1437 502h3v3h-3zM1445 502h3v3h-3zM1453 502h3v3h-3zM1461 502h3v3h-3zM1469 502h3v3h-3zM1477 502h3v3h-3zM1485 502h3v3h-3zM1494 502h3v3h-3zM1502 502h3v3h-3zM1510 502h3v3h-3zM1518 502h3v3h-3zM1526 502h3v3h-3zM1534 502h3v3h-3zM1542 502h3v3h-3zM1550 502h3v3h-3zM1558 502h3v3h-3zM1566 502h3v3h-3zM1574 502h3v3h-3zM1582 502h3v3h-3zM1591 502h3v3h-3zM1599 502h3v3h-3zM1607 502h3v3h-3zM1615 502h3v3h-3zM1623 502h3v3h-3zM1631 502h3v3h-3zM1639 502h3v3h-3zM1647 502h3v3h-3zM1655 502h3v3h-3zM1663 502h3v3h-3zM1671 502h3v3h-3zM1680 502h3v3h-3zM1688 502h3v3h-3zM1696 502h3v3h-3zM1704 502h3v3h-3zM1712 502h3v3h-3zM1224 507h3v3h-3zM1232 507h3v3h-3zM1241 507h3v3h-3zM1249 507h3v3h-3zM1257 507h3v3h-3zM1265 507h3v3h-3zM1273 507h3v3h-3zM1281 507h3v3h-3zM1290 507h3v3h-3zM1298 507h3v3h-3zM1306 507h3v3h-3zM1314 507h3v3h-3zM1322 507h3v3h-3zM1330 507h3v3h-3zM1339 507h3v3h-3zM1347 507h3v3h-3zM1355 507h3v3h-3zM1363 507h3v3h-3zM1371 507h3v3h-3zM1379 507h3v3h-3zM1388 507h3v3h-3zM1396 507h3v3h-3zM1404 507h3v3h-3zM1412 507h3v3h-3zM1420 507h3v3h-3zM1428 507h3v3h-3zM1437 507h3v3h-3zM1445 507h3v3h-3zM1453 507h3v3h-3zM1461 507h3v3h-3zM1469 507h3v3h-3zM1477 507h3v3h-3zM1486 507h3v3h-3zM1494 507h3v3h-3zM1502 507h3v3h-3zM1510 507h3v3h-3zM1518 507h3v3h-3zM1526 507h3v3h-3zM1535 507h3v3h-3zM1543 507h3v3h-3zM1551 507h3v3h-3zM1559 507h3v3h-3zM1567 507h3v3h-3zM1575 507h3v3h-3zM1584 507h3v3h-3zM1592 507h3v3h-3zM1600 507h3v3h-3zM1608 507h3v3h-3zM1616 507h3v3h-3zM1624 507h3v3h-3zM1633 507h3v3h-3zM1641 507h3v3h-3zM1649 507h3v3h-3zM1657 507h3v3h-3zM1665 507h3v3h-3zM1674 507h3v3h-3zM1682 507h3v3h-3zM1690 507h3v3h-3zM1698 507h3v3h-3zM1706 507h3v3h-3zM1714 507h3v3h-3zM1222 512h3v3h-3zM1230 512h3v3h-3zM1238 512h3v3h-3zM1246 512h3v3h-3zM1255 512h3v3h-3zM1263 512h3v3h-3zM1271 512h3v3h-3zM1279 512h3v3h-3zM1288 512h3v3h-3zM1296 512h3v3h-3zM1304 512h3v3h-3zM1312 512h3v3h-3zM1321 512h3v3h-3zM1329 512h3v3h-3zM1337 512h3v3h-3zM1346 512h3v3h-3zM1354 512h3v3h-3zM1362 512h3v3h-3zM1370 512h3v3h-3zM1379 512h3v3h-3zM1387 512h3v3h-3zM1395 512h3v3h-3zM1403 512h3v3h-3zM1412 512h3v3h-3zM1420 512h3v3h-3zM1428 512h3v3h-3zM1436 512h3v3h-3zM1445 512h3v3h-3zM1453 512h3v3h-3zM1461 512h3v3h-3zM1469 512h3v3h-3zM1478 512h3v3h-3zM1486 512h3v3h-3zM1494 512h3v3h-3zM1502 512h3v3h-3zM1511 512h3v3h-3zM1519 512h3v3h-3zM1527 512h3v3h-3zM1535 512h3v3h-3zM1544 512h3v3h-3zM1552 512h3v3h-3zM1560 512h3v3h-3zM1568 512h3v3h-3zM1577 512h3v3h-3zM1585 512h3v3h-3zM1593 512h3v3h-3zM1601 512h3v3h-3zM1610 512h3v3h-3zM1618 512h3v3h-3zM1626 512h3v3h-3zM1634 512h3v3h-3zM1643 512h3v3h-3zM1651 512h3v3h-3zM1659 512h3v3h-3zM1667 512h3v3h-3zM1676 512h3v3h-3zM1684 512h3v3h-3zM1692 512h3v3h-3zM1700 512h3v3h-3zM1709 512h3v3h-3zM1717 512h3v3h-3zM1219 518h3v3h-3zM1227 518h3v3h-3zM1236 518h3v3h-3zM1244 518h3v3h-3zM1252 518h3v3h-3zM1261 518h3v3h-3zM1269 518h3v3h-3zM1277 518h3v3h-3zM1286 518h3v3h-3zM1294 518h3v3h-3zM1303 518h3v3h-3zM1311 518h3v3h-3zM1319 518h3v3h-3zM1328 518h3v3h-3zM1336 518h3v3h-3zM1344 518h3v3h-3zM1353 518h3v3h-3zM1361 518h3v3h-3zM1369 518h3v3h-3zM1378 518h3v3h-3zM1386 518h3v3h-3zM1394 518h3v3h-3zM1403 518h3v3h-3zM1411 518h3v3h-3zM1419 518h3v3h-3zM1428 518h3v3h-3zM1436 518h3v3h-3zM1444 518h3v3h-3zM1453 518h3v3h-3zM1461 518h3v3h-3zM1469 518h3v3h-3zM1478 518h3v3h-3zM1486 518h3v3h-3zM1494 518h3v3h-3zM1503 518h3v3h-3zM1511 518h3v3h-3zM1519 518h3v3h-3zM1528 518h3v3h-3zM1536 518h3v3h-3zM1544 518h3v3h-3zM1553 518h3v3h-3zM1561 518h3v3h-3zM1569 518h3v3h-3zM1578 518h3v3h-3zM1586 518h3v3h-3zM1594 518h3v3h-3zM1603 518h3v3h-3zM1611 518h3v3h-3zM1619 518h3v3h-3zM1628 518h3v3h-3zM1636 518h3v3h-3zM1644 518h3v3h-3zM1653 518h3v3h-3zM1661 518h3v3h-3zM1669 518h3v3h-3zM1678 518h3v3h-3zM1686 518h3v3h-3zM1694 518h3v3h-3zM1703 518h3v3h-3zM1711 518h3v3h-3zM1719 518h3v3h-3zM1216 523h3v3h-3zM1225 523h3v3h-3zM1233 523h3v3h-3zM1242 523h3v3h-3zM1250 523h3v3h-3zM1259 523h3v3h-3zM1267 523h3v3h-3zM1275 523h3v3h-3zM1284 523h3v3h-3zM1292 523h3v3h-3zM1301 523h3v3h-3zM1309 523h3v3h-3zM1318 523h3v3h-3zM1326 523h3v3h-3zM1334 523h3v3h-3zM1343 523h3v3h-3zM1351 523h3v3h-3zM1360 523h3v3h-3zM1368 523h3v3h-3zM1377 523h3v3h-3zM1385 523h3v3h-3zM1393 523h3v3h-3zM1402 523h3v3h-3zM1410 523h3v3h-3zM1419 523h3v3h-3zM1427 523h3v3h-3zM1436 523h3v3h-3zM1444 523h3v3h-3zM1452 523h3v3h-3zM1461 523h3v3h-3zM1469 523h3v3h-3zM1478 523h3v3h-3zM1486 523h3v3h-3zM1495 523h3v3h-3zM1503 523h3v3h-3zM1511 523h3v3h-3zM1520 523h3v3h-3zM1528 523h3v3h-3zM1537 523h3v3h-3zM1545 523h3v3h-3zM1554 523h3v3h-3zM1562 523h3v3h-3zM1570 523h3v3h-3zM1579 523h3v3h-3zM1587 523h3v3h-3zM1596 523h3v3h-3zM1604 523h3v3h-3zM1613 523h3v3h-3zM1621 523h3v3h-3zM1629 523h3v3h-3zM1638 523h3v3h-3zM1646 523h3v3h-3zM1655 523h3v3h-3zM1663 523h3v3h-3zM1672 523h3v3h-3zM1680 523h3v3h-3zM1688 523h3v3h-3zM1697 523h3v3h-3zM1705 523h3v3h-3zM1714 523h3v3h-3zM1722 523h3v3h-3z" fill="#a8a8ac"/></svg>
<svg class="a" style="left:0;top:0" width="1920" height="1039"><defs><linearGradient id="pk1" x1="0" y1="279" x2="0" y2="429" gradientUnits="userSpaceOnUse"><stop offset="0" stop-color="#a00000"/><stop offset="0.27" stop-color="#a80000"/><stop offset="0.4" stop-color="#e81000"/><stop offset="0.5" stop-color="#ff7000"/><stop offset="0.58" stop-color="#f8f000"/><stop offset="0.66" stop-color="#a0ff60"/><stop offset="0.73" stop-color="#00f0f0"/><stop offset="0.82" stop-color="#0070ff"/><stop offset="1" stop-color="#0014c8"/></linearGradient><linearGradient id="pk2" x1="0" y1="351" x2="0" y2="400" gradientUnits="userSpaceOnUse"><stop offset="0" stop-color="#30e8e0"/><stop offset="0.3" stop-color="#00b0ff"/><stop offset="0.65" stop-color="#0048f0"/><stop offset="1" stop-color="#0018c0"/></linearGradient><linearGradient id="pk3" x1="0" y1="0" x2="0" y2="1"><stop offset="0" stop-color="#0038f0"/><stop offset="1" stop-color="#0018b8"/></linearGradient></defs><path d="M1312 272L1317 316L1318 321" stroke="#b0b0b0" stroke-width="1.5" fill="none"/><path d="M1421.3 329.5L1431.6 327.1L1441.1 328.7L1450.6 324L1458.6 325.6L1464.9 333.5L1471.3 338.3L1471.3 343.8L1457 343L1441.1 342.2L1422 344.6L1420.5 338.3Z" fill="url(#pk3)"/><path d="M1424.4 351L1415.7 358.9L1407.8 365.2L1402.2 371.6L1400.6 377.9L1404.6 390.6L1409.4 398.6L1425.2 400.2L1441.1 397L1457 393.8L1464.9 392.2L1464.9 384.3L1453.8 381.1L1444.3 377.9L1437.9 368.4L1431.6 357.3Z" fill="url(#pk2)"/><path d="M1373 279.5L1377.6 279.5L1382.4 293.8L1388.7 320.8L1393.5 343L1398.3 365.2L1401.4 377.9L1406.2 395.4L1409.4 404.9L1411 419.2L1401.4 424.8L1393.5 427.1L1377.6 428.7L1361.7 427.9L1353.8 426.3L1344.3 424.8L1341.9 414.4L1345.9 404.9L1352.2 397L1360.2 389L1363.3 373.2L1365.7 346.2L1368.9 317.6L1372.1 290.6Z" fill="url(#pk1)"/><path d="M1269 422L1272 412L1280 405L1287 405L1291 412L1285 420L1280 426L1268 426Z" fill="url(#pk3)"/><path d="M1557 393L1562 388L1575 387L1585 390L1587 396L1570 398L1557 397Z" fill="url(#pk3)"/></svg>
<div class="a" style="left:1769px;top:83px;width:151px;height:381px;background:#f0f0f0;border-left:1px solid #c8c8c8;border-bottom:1px solid #c8c8c8"></div>
<div class="a" style="left:1770px;top:84px;width:150px;height:30px;background:#fff"></div>
<div class="a" style="left:1778px;top:90px;width:15px;height:15px;background:#202020"></div>
<svg class="a" style="left:1778px;top:90px" width="16" height="16"><rect width="16" height="16" fill="#262626"/><path d="M8 3Q10 3 11 9Q12 12 14 13H2Q4 12 5 9Q6 3 8 3Z" fill="url(#ai)"/><rect x="1" y="13" width="14" height="2" fill="#1a1a1a"/></svg>
<div class="t" style="left:1798px;top:91px;font-size:13px;color:#909090">色阶图</div>
<svg class="a" style="left:1898px;top:91px" width="13" height="13"><path d="M1 1L12 12M12 1L1 12" stroke="#8a8a8a" stroke-width="1"/></svg>
<div class="t" style="left:1820px;top:129px">单位:<span class="m">KPa</span></div>
<div class="a" style="left:1782px;top:152px;width:111px;height:17px;background:#fff"></div><div class="t" style="left:1784px;top:155px;font-size:11px">150</div>
<svg class="a" style="left:1893px;top:152px" width="14" height="16"><rect x="0.5" y="0.5" width="13" height="15" fill="#ececec" stroke="#a8a8a8"/><path d="M0.5 8.5H13.5" stroke="#a8a8a8"/><path d="M4.3 5.6L7 2.8L9.7 5.6Z M4.3 10.4L7 13.2L9.7 10.4Z" fill="#000" stroke="#000" stroke-width="0.6" stroke-linejoin="round"/></svg>
<div class="a" style="left:1782px;top:435px;width:111px;height:17px;background:#fff"></div><div class="t" style="left:1784px;top:438px;font-size:11px">0</div>
<svg class="a" style="left:1893px;top:435px" width="14" height="16"><rect x="0.5" y="0.5" width="13" height="15" fill="#ececec" stroke="#a8a8a8"/><path d="M0.5 8.5H13.5" stroke="#a8a8a8"/><path d="M4.3 5.6L7 2.8L9.7 5.6Z M4.3 10.4L7 13.2L9.7 10.4Z" fill="#000" stroke="#000" stroke-width="0.6" stroke-linejoin="round"/></svg>
<svg class="a" style="left:0;top:0" width="1920" height="1039"><rect x="1805" y="175.0" width="80" height="8.5" fill="#8f0000"/><rect x="1805" y="182.9" width="80" height="8.5" fill="#af0000"/><rect x="1805" y="190.8" width="80" height="8.5" fill="#cf0000"/><rect x="1805" y="198.7" width="80" height="8.5" fill="#ef0000"/><rect x="1805" y="206.6" width="80" height="8.5" fill="#ff0f00"/><rect x="1805" y="214.5" width="80" height="8.5" fill="#ff2f00"/><rect x="1805" y="222.4" width="80" height="8.5" fill="#ff4f00"/><rect x="1805" y="230.3" width="80" height="8.5" fill="#ff6f00"/><rect x="1805" y="238.2" width="80" height="8.5" fill="#ff8f00"/><rect x="1805" y="246.2" width="80" height="8.5" fill="#ffaf00"/><rect x="1805" y="254.1" width="80" height="8.5" fill="#ffcf00"/><rect x="1805" y="262.0" width="80" height="8.5" fill="#ffef00"/><rect x="1805" y="269.9" width="80" height="8.5" fill="#efff0f"/><rect x="1805" y="277.8" width="80" height="8.5" fill="#cfff2f"/><rect x="1805" y="285.7" width="80" height="8.5" fill="#afff4f"/><rect x="1805" y="293.6" width="80" height="8.5" fill="#8fff6f"/><rect x="1805" y="301.5" width="80" height="8.5" fill="#6fff8f"/><rect x="1805" y="309.4" width="80" height="8.5" fill="#4fffaf"/><rect x="1805" y="317.3" width="80" height="8.5" fill="#2fffcf"/><rect x="1805" y="325.2" width="80" height="8.5" fill="#0fffef"/><rect x="1805" y="333.1" width="80" height="8.5" fill="#00efff"/><rect x="1805" y="341.0" width="80" height="8.5" fill="#00cfff"/><rect x="1805" y="348.9" width="80" height="8.5" fill="#00afff"/><rect x="1805" y="356.8" width="80" height="8.5" fill="#008fff"/><rect x="1805" y="364.8" width="80" height="8.5" fill="#006fff"/><rect x="1805" y="372.7" width="80" height="8.5" fill="#004fff"/><rect x="1805" y="380.6" width="80" height="8.5" fill="#002fff"/><rect x="1805" y="388.5" width="80" height="8.5" fill="#000fff"/><rect x="1805" y="396.4" width="80" height="8.5" fill="#0000ef"/><rect x="1805" y="404.3" width="80" height="8.5" fill="#0000cf"/><rect x="1805" y="412.2" width="80" height="8.5" fill="#0000af"/><rect x="1805" y="420.1" width="80" height="8.5" fill="#00008f"/><text x="1845" y="186" text-anchor="middle" font-family="Liberation Mono" font-weight="bold" font-size="14" letter-spacing="-0.4" fill="#8c8c8c">>=150</text><text x="1845" y="202" text-anchor="middle" font-family="Liberation Mono" font-weight="bold" font-size="14" letter-spacing="-0.4" fill="#8c8c8c">140</text><text x="1845" y="242" text-anchor="middle" font-family="Liberation Mono" font-weight="bold" font-size="14" letter-spacing="-0.4" fill="#8c8c8c">117</text><text x="1845" y="281" text-anchor="middle" font-family="Liberation Mono" font-weight="bold" font-size="14" letter-spacing="-0.4" fill="#8c8c8c">93</text><text x="1845" y="321" text-anchor="middle" font-family="Liberation Mono" font-weight="bold" font-size="14" letter-spacing="-0.4" fill="#8c8c8c">70</text><text x="1845" y="361" text-anchor="middle" font-family="Liberation Mono" font-weight="bold" font-size="14" letter-spacing="-0.4" fill="#8c8c8c">46</text><text x="1845" y="400" text-anchor="middle" font-family="Liberation Mono" font-weight="bold" font-size="14" letter-spacing="-0.4" fill="#8c8c8c">23</text><text x="1845" y="425" text-anchor="middle" font-family="Liberation Mono" font-weight="bold" font-size="14" letter-spacing="-0.4" fill="#8c8c8c">>=0</text></svg>
<div class="a" style="left:1916px;top:464px;width:1px;height:542px;background:#d8d8d8"></div>
<svg class="a" style="left:0;top:46px" width="660" height="34"><g transform="translate(0,-46)"><rect x="4" y="51" width="1.5" height="1.5" fill="#a0a0a0"/><rect x="4" y="54" width="1.5" height="1.5" fill="#a0a0a0"/><rect x="4" y="57" width="1.5" height="1.5" fill="#a0a0a0"/><rect x="4" y="60" width="1.5" height="1.5" fill="#a0a0a0"/><rect x="4" y="63" width="1.5" height="1.5" fill="#a0a0a0"/><rect x="4" y="66" width="1.5" height="1.5" fill="#a0a0a0"/><rect x="4" y="69" width="1.5" height="1.5" fill="#a0a0a0"/><rect x="4" y="72" width="1.5" height="1.5" fill="#a0a0a0"/><rect x="4" y="75" width="1.5" height="1.5" fill="#a0a0a0"/><rect x="16" y="54.3" width="18" height="18" rx="3" fill="none" stroke="#6a6a6a" stroke-width="2"/><path d="M25 58V69M19.5 63.5H30.5" stroke="#3c9c1c" stroke-width="2" fill="none"/><path d="M54.5 72.3H46.5Q45.5 72.3 45.5 70.3V56.3Q45.5 54.3 47.5 54.3H61.5Q63.5 54.3 63.5 56.3V58" stroke="#6a6a6a" stroke-width="2" fill="none"/><path d="M49.5 54.3V58.3H58.5V54.3" stroke="#6a6a6a" stroke-width="2" fill="none"/><path d="M55.5 66H67M62.5 61L67.5 66L62.5 71" stroke="#3c9c1c" stroke-width="2" fill="none"/><rect x="77.5" y="57" width="19" height="16" rx="3" fill="none" stroke="#6a6a6a" stroke-width="2"/><path d="M79 57L81 53H93L95 57M80 55.5H94" stroke="#6a6a6a" stroke-width="1.8" fill="none"/><path d="M82.5 61L91.5 70M91.5 61L82.5 70" stroke="#e8402a" stroke-width="1.6" fill="none"/><rect x="105.0" y="51" width="1" height="24" fill="#cacaca"/><rect x="328.0" y="51" width="1" height="24" fill="#cacaca"/><rect x="427.0" y="51" width="1" height="24" fill="#cacaca"/><rect x="495.0" y="51" width="1" height="24" fill="#cacaca"/><rect x="532.0" y="51" width="1" height="24" fill="#cacaca"/><rect x="600.0" y="51" width="1" height="24" fill="#cacaca"/><path d="M115.7 62.6L126 55.4V69.8Z M124.9 62.6L132.3 55.4V69.8Z" fill="#606060"/><path d="M149.5 62.6L160.4 55.4V69.8Z" fill="#606060"/><path d="M180 54.7h1.6v16.1h-1.6z M182.2 62.6L193.1 55.4V69.8Z" fill="#606060"/><circle cx="217.1" cy="62.4" r="9" fill="none" stroke="#606060" stroke-width="2"/><rect x="213.7" y="58.9" width="7.2" height="7.2" fill="#606060"/><path d="M241.8 55.4L252.7 62.6L241.8 69.8Z M253.2 54.7h1.8v16.1h-1.8z" fill="#606060"/><path d="M276.2 55.4L287 62.6L276.2 69.8Z" fill="#606060"/><path d="M303 55.4L313.4 62.6L303 69.8Z M308.8 55.4L319.7 62.6L308.8 69.8Z" fill="#606060"/><path d="M344.5 59.7H339Q335 59.7 335 64Q335 68.4 339 68.4H345Q349.5 68.4 349.5 64Q349.5 62 348 61" stroke="#6a6a6a" stroke-width="2" fill="none"/><path d="M345 63Q344 58.2 348 58.2H354.5Q358.7 58.2 358.7 62.4Q358.7 66.6 354.5 66.6H352" stroke="#3c9c1c" stroke-width="2" fill="none"/><path d="M376.5 60H371Q367.8 60 367.8 63.3Q367.8 66.5 371 66.5H376.5M380 60H384.5Q387.8 60 387.8 63.3Q387.8 66.5 384.5 66.5H380" stroke="#a4a4a4" stroke-width="1.8" fill="none"/><path d="M374.5 55.5L376 58M378 55V58M381.5 55.5L380 58M374.5 71L376 68.5M378 71.5V68.5M381.5 71L380 68.5" stroke="#a4a4a4" stroke-width="1.2" fill="none"/><path d="M405 56.3A7.5 7.5 0 1 0 410 55.6" stroke="#a4a4a4" stroke-width="1.8" fill="none"/><path d="M404 54L406.5 56.5L404 59" stroke="#a4a4a4" stroke-width="1.3" fill="none"/><ellipse cx="409.2" cy="63.3" rx="2.2" ry="3.6" fill="none" stroke="#a4a4a4" stroke-width="1.4"/><rect x="435.5" y="57.5" width="16" height="12" rx="1.5" fill="none" stroke="#a4a4a4" stroke-width="1.8"/><path d="M452 61L456 59.5V67.5L452 66" stroke="#a4a4a4" stroke-width="1.8" fill="none"/><path d="M441 60.5L446 63.5L441 66.5Z" fill="#a4a4a4"/><rect x="466.3" y="57" width="16" height="12" rx="1.5" fill="none" stroke="#a4a4a4" stroke-width="1.8"/><path d="M483 60.5L487 59V67L483 65.5" stroke="#a4a4a4" stroke-width="1.8" fill="none"/><path d="M470 60L479 65.5" stroke="#6a6a6a" stroke-width="1.3" fill="none"/><defs><linearGradient id="gr1" x1="0" y1="0" x2="0" y2="1"><stop offset="0" stop-color="#909090"/><stop offset="0.4" stop-color="#e6e6e6"/><stop offset="0.68" stop-color="#969696"/><stop offset="1" stop-color="#9a9a9a"/></linearGradient></defs><rect x="506" y="52.6" width="15.5" height="20" fill="url(#gr1)"/><path d="M557 68A8 8 0 1 1 558.5 57.5" stroke="#606060" stroke-width="2" fill="none"/><path d="M559.5 55V60H554.5" stroke="#606060" stroke-width="1.8" fill="none"/><circle cx="582" cy="58.4" r="4.3" fill="none" stroke="#606060" stroke-width="1.8"/><circle cx="582" cy="58.4" r="1.5" fill="#ff0000"/><path d="M581 63H575.5Q573 63 573 65Q573 67.5 575.5 67.5H587Q589.5 67.5 589.5 69.5Q589.5 72 587 72H578" stroke="#606060" stroke-width="1.6" fill="none"/><circle cx="578" cy="72" r="1.3" fill="#606060"/><rect x="610.5" y="56" width="17" height="15" rx="2" fill="#f4f4f4" stroke="#6a6a6a" stroke-width="1.8"/><path d="M610.5 60.5H627.5M619 56V60.5" stroke="#6a6a6a" stroke-width="1.5" fill="none"/><rect x="620" y="57" width="6.5" height="3" fill="#b8b8b8"/></g></svg>
<svg class="a" style="left:0;top:80px" width="35" height="600"><g transform="translate(0,-80)"><rect x="4" y="84.5" width="1.5" height="1.5" fill="#a0a0a0"/><rect x="7" y="84.5" width="1.5" height="1.5" fill="#a0a0a0"/><rect x="10" y="84.5" width="1.5" height="1.5" fill="#a0a0a0"/><rect x="13" y="84.5" width="1.5" height="1.5" fill="#a0a0a0"/><rect x="16" y="84.5" width="1.5" height="1.5" fill="#a0a0a0"/><rect x="19" y="84.5" width="1.5" height="1.5" fill="#a0a0a0"/><rect x="22" y="84.5" width="1.5" height="1.5" fill="#a0a0a0"/><rect x="25" y="84.5" width="1.5" height="1.5" fill="#a0a0a0"/><rect x="28" y="84.5" width="1.5" height="1.5" fill="#a0a0a0"/><rect x="31" y="84.5" width="1.5" height="1.5" fill="#a0a0a0"/><rect x="5" y="182.5" width="25" height="1" fill="#cdcdcd"/><rect x="5" y="248.5" width="25" height="1" fill="#cdcdcd"/><rect x="5" y="284" width="25" height="1" fill="#cdcdcd"/><rect x="5" y="350.5" width="25" height="1" fill="#cdcdcd"/><rect x="5" y="506.5" width="25" height="1" fill="#cdcdcd"/><rect x="5" y="572.5" width="25" height="1" fill="#cdcdcd"/><rect x="5" y="638" width="25" height="1" fill="#cdcdcd"/><rect x="2.5" y="90.5" width="30" height="28" fill="#c5ddf1" stroke="#99c9ef"/><rect x="2.5" y="216.5" width="30" height="28" fill="#c5ddf1" stroke="#99c9ef"/><rect x="9.5" y="97.5" width="17" height="17" fill="#505050"/><rect x="11" y="99" width="7" height="7" fill="#80d8ff"/><rect x="18" y="99" width="7" height="7" fill="#20a0ff"/><rect x="11" y="106" width="7" height="7.5" fill="#0080f0"/><rect x="18" y="106" width="7" height="7.5" fill="#50c8ff"/><rect x="8.2" y="126.3" width="17.6" height="17.4" fill="#505050"/><rect x="9.5" y="127.5" width="7.5" height="7.5" fill="#80d0ff"/><rect x="17" y="127.5" width="7.5" height="7.5" fill="#2090e0"/><rect x="9.5" y="135" width="7.5" height="7.5" fill="#0070e0"/><rect x="17" y="135" width="7.5" height="7.5" fill="#60c0ff"/><text x="13.2" y="134.5" font-size="7.5" fill="#fff" text-anchor="middle" font-family="Liberation Sans">2</text><text x="20.8" y="134.5" font-size="7.5" fill="#fff" text-anchor="middle" font-family="Liberation Sans">4</text><text x="13.2" y="142" font-size="7.5" fill="#fff" text-anchor="middle" font-family="Liberation Sans">5</text><text x="20.8" y="142" font-size="7.5" fill="#fff" text-anchor="middle" font-family="Liberation Sans">3</text><polygon points="17.3,156.5 25.7,162.6 22.5,172.4 12.1,172.4 8.9,162.6" fill="#80d0ff" stroke="#505050" stroke-width="1.6" stroke-linejoin="round"/><circle cx="17.3" cy="166" r="4" fill="#0080f0"/><defs><linearGradient id="lg4" x1="0" y1="0" x2="0" y2="1"><stop offset="0" stop-color="#00a8f0"/><stop offset="0.55" stop-color="#30a0e0"/><stop offset="1" stop-color="#a0b8c8"/></linearGradient></defs><path d="M7 207.3L11 202H28L24 207.3Z" fill="#e0e0e0" stroke="#505050" stroke-width="1.6"/><path d="M12 203Q13.5 191 17.5 192Q21.5 191 23 203" stroke="#10a0f0" stroke-width="1.6" fill="none"/><path d="M7.5 239.2L11.5 233H29L25 239.2Z" fill="#e0e0e0" stroke="#505050" stroke-width="1.6"/><path d="M12 238Q12.5 223 17.8 223Q23 223 24 238Z" fill="url(#lg4)"/><path d="M12 259V271.5H24.5M9.5 271.5H12M12 259H23V271.5M23 259V256.5M23 259H25.5M12 271.5V274" stroke="#505050" stroke-width="1.6" fill="none"/><circle cx="17" cy="302.8" r="9" fill="none" stroke="#909090" stroke-width="1.6"/><circle cx="17" cy="302.8" r="3" fill="#909090"/><path d="M17 293.8V296M17 309.6V311.8M8 302.8H10.2M23.8 302.8H26" stroke="#909090" stroke-width="1.6" fill="none"/><circle cx="17" cy="328.3" r="4.3" fill="none" stroke="#909090" stroke-width="1.6"/><circle cx="17" cy="328.3" r="1.3" fill="#909090"/><path d="M15.5 333H11Q8.5 333 8.5 335.5Q8.5 337.8 11 337.8H23Q25.5 337.8 25.5 340Q25.5 342.3 23 342.3H13" stroke="#909090" stroke-width="1.5" fill="none"/><circle cx="13" cy="342.3" r="1.3" fill="#909090"/><path d="M7.5 364H12.5M10 361.5V366.5" stroke="#8a8a8a" stroke-width="1.3" fill="none"/><path d="M10.5 377L12 371.5L23.5 360L27.5 364L16 375.5Z" stroke="#8a8a8a" stroke-width="1.4" fill="none" stroke-linejoin="round"/><path d="M8.5 394H13.5M11 391.5V396.5" stroke="#8a8a8a" stroke-width="1.3" fill="none"/><path d="M12 404.3L23 396.2" stroke="#8a8a8a" stroke-width="1.3"/><circle cx="11" cy="405.3" r="1.5" fill="none" stroke="#8a8a8a"/><circle cx="24" cy="395.2" r="1.5" fill="none" stroke="#8a8a8a"/><path d="M7.0 421.5H12.0M9.5 419.0V424.0" stroke="#8a8a8a" stroke-width="1.3" fill="none"/><rect x="12.5" y="423.5" width="14" height="11.5" rx="2" fill="none" stroke="#8a8a8a" stroke-width="1.5"/><path d="M7.0 451.5H12.0M9.5 449.0V454.0" stroke="#8a8a8a" stroke-width="1.3" fill="none"/><circle cx="19" cy="458.7" r="6.8" fill="none" stroke="#8a8a8a" stroke-width="1.5"/><path d="M7.5 482H12.5M10 479.5V484.5" stroke="#8a8a8a" stroke-width="1.3" fill="none"/><polygon points="24.1,491.3 20.8,497.0 14.2,497.0 10.9,491.3 14.2,485.6 20.8,485.6" fill="none" stroke="#8a8a8a" stroke-width="1.4"/><rect x="7.7" y="516.8" width="19" height="15.5" fill="none" stroke="#606060" stroke-width="1.4"/><path d="M9.5 528.5L14 524L17.5 526.5L24.5 520M21 520H24.8V523.5" stroke="#606060" stroke-width="1.3" fill="none"/><rect x="7.7" y="545.5" width="19" height="18.5" rx="1.5" fill="#fafafa" stroke="#606060" stroke-width="1.5"/><path d="M12.3 545.5V564M17.2 545.5V564M22 545.5V564M7.7 550H26.7M7.7 554.7H26.7M7.7 559.3H26.7" stroke="#606060" stroke-width="0.9" fill="none"/><rect x="18.3" y="546.5" width="2.6" height="2.6" fill="#0080f0"/><rect x="13.7" y="551.0" width="2.6" height="2.6" fill="#0080f0"/><rect x="18.3" y="551.0" width="2.6" height="2.6" fill="#0080f0"/><rect x="13.7" y="555.7" width="2.6" height="2.6" fill="#0080f0"/><rect x="22.9" y="560.2" width="2.6" height="2.6" fill="#0080f0"/><path d="M8.5 583V598.5H27M8.5 598.5L24.5 591" stroke="#606060" stroke-width="1.5" fill="none"/><path d="M11 583Q22 585 25.5 595" stroke="#606060" stroke-width="1.1" stroke-dasharray="1 1.5" fill="none"/><path d="M12.5 611V623M21.5 611V623" stroke="#606060" stroke-width="1.4" fill="none"/><path d="M10 619.5L12.5 624L15 619.5Z M19 619.5L21.5 624L24 619.5Z" fill="#606060"/><rect x="6.5" y="624.3" width="21" height="4" fill="none" stroke="#606060" stroke-width="1.4"/><path d="M26.5 650.5V649.5Q26.5 647.5 24.5 647.5H10Q7.7 647.5 7.7 649.5V664.5Q7.7 666.5 10 666.5H24.5Q26.5 666.5 26.5 664.5V663" stroke="#606060" stroke-width="1.6" fill="none"/><path d="M12 656.7H24.5M19.5 651.5L24.8 656.7L19.5 662" stroke="#d0203a" stroke-width="1.6" fill="none"/></g></svg>
</body></html>
